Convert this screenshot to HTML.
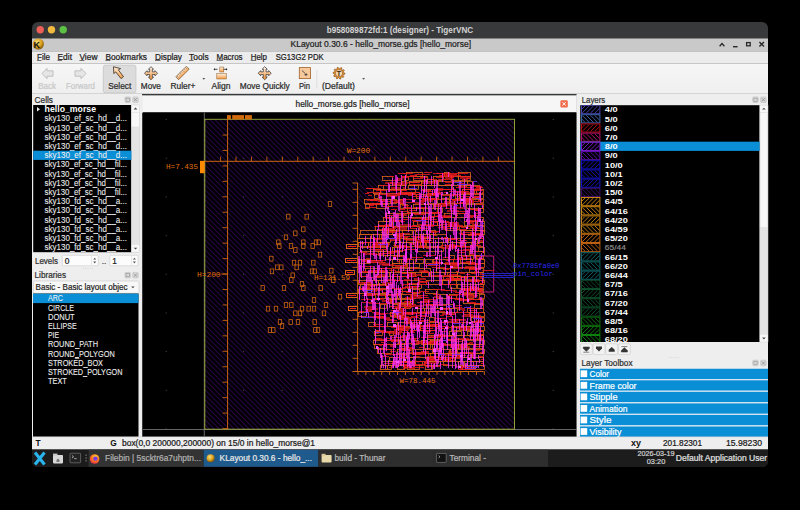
<!DOCTYPE html>
<html><head><meta charset="utf-8"><style>
html,body{margin:0;padding:0;background:#000;width:800px;height:510px;overflow:hidden}
svg{display:block}
text{white-space:pre}
</style></head><body>
<svg width="800" height="510" viewBox="0 0 800 510" shape-rendering="auto">
<rect x="0.00" y="0.00" width="800.00" height="510.00" fill="#000" />
<rect x="32" y="22" width="736" height="445" rx="6" ry="6" fill="#38393b"/>
<text x="400.00" y="32.60" font-family="Liberation Sans" font-size="8.6" font-weight="700" fill="#d2d2d2" text-anchor="middle" textLength="146.50" lengthAdjust="spacingAndGlyphs" >b958089872fd:1 (designer) - TigerVNC</text>
<circle cx="40.2" cy="29.7" r="3.7" fill="#ee5f57"/>
<circle cx="51.5" cy="29.7" r="3.7" fill="#f3b93f"/>
<circle cx="63.2" cy="29.7" r="3.7" fill="#5cc244"/>
<rect x="32.00" y="38.50" width="736.00" height="12.80" fill="#c9c9c9" />
<text x="290.50" y="46.80" font-family="Liberation Sans" font-size="8.3" font-weight="400" fill="#1e1e1e" text-anchor="start" textLength="180.50" lengthAdjust="spacingAndGlyphs"  stroke="#1e1e1e" stroke-width="0.22">KLayout 0.30.6 - hello_morse.gds [hello_morse]</text>
<defs><radialGradient id="kg" cx="0.4" cy="0.35" r="0.7"><stop offset="0" stop-color="#f8e27a"/><stop offset="0.6" stop-color="#d79a1a"/><stop offset="1" stop-color="#6b4a06"/></radialGradient></defs>
<circle cx="38.3" cy="44" r="5.6" fill="url(#kg)"/>
<text x="33.60" y="47.60" font-family="Liberation Sans" font-size="9" font-weight="700" fill="#111" text-anchor="start" >K</text>
<path d="M719.6 46.3 L722 43.6 L724.4 46.3" stroke="#2a2a2a" stroke-width="1.3" fill="none"/>
<rect x="733.00" y="46.00" width="4.60" height="1.40" fill="#2a2a2a" />
<rect x="746.6" y="42.6" width="3.6" height="3.2" stroke="#2a2a2a" stroke-width="1.3" fill="none"/>
<path d="M759.4 42 L764 46.6 M764 42 L759.4 46.6" stroke="#2a2a2a" stroke-width="1.4"/>
<rect x="32.00" y="51.30" width="736.00" height="12.20" fill="#ececec" />
<rect x="32.00" y="63.20" width="736.00" height="0.60" fill="#d6d6d6" />
<text x="37.00" y="59.80" font-family="Liberation Sans" font-size="8.3" font-weight="400" fill="#202020" text-anchor="start" textLength="13.00" lengthAdjust="spacingAndGlyphs"  stroke="#202020" stroke-width="0.22">File</text>
<rect x="37.00" y="60.20" width="4.50" height="0.70" fill="#404040" />
<text x="57.50" y="59.80" font-family="Liberation Sans" font-size="8.3" font-weight="400" fill="#202020" text-anchor="start" textLength="14.50" lengthAdjust="spacingAndGlyphs"  stroke="#202020" stroke-width="0.22">Edit</text>
<rect x="57.50" y="60.20" width="4.50" height="0.70" fill="#404040" />
<text x="79.40" y="59.80" font-family="Liberation Sans" font-size="8.3" font-weight="400" fill="#202020" text-anchor="start" textLength="18.10" lengthAdjust="spacingAndGlyphs"  stroke="#202020" stroke-width="0.22">View</text>
<rect x="79.40" y="60.20" width="5.00" height="0.70" fill="#404040" />
<text x="105.40" y="59.80" font-family="Liberation Sans" font-size="8.3" font-weight="400" fill="#202020" text-anchor="start" textLength="41.60" lengthAdjust="spacingAndGlyphs"  stroke="#202020" stroke-width="0.22">Bookmarks</text>
<rect x="105.40" y="60.20" width="5.00" height="0.70" fill="#404040" />
<text x="155.00" y="59.80" font-family="Liberation Sans" font-size="8.3" font-weight="400" fill="#202020" text-anchor="start" textLength="27.00" lengthAdjust="spacingAndGlyphs"  stroke="#202020" stroke-width="0.22">Display</text>
<rect x="155.00" y="60.20" width="5.50" height="0.70" fill="#404040" />
<text x="189.00" y="59.80" font-family="Liberation Sans" font-size="8.3" font-weight="400" fill="#202020" text-anchor="start" textLength="19.70" lengthAdjust="spacingAndGlyphs"  stroke="#202020" stroke-width="0.22">Tools</text>
<rect x="189.00" y="60.20" width="4.50" height="0.70" fill="#404040" />
<text x="216.50" y="59.80" font-family="Liberation Sans" font-size="8.3" font-weight="400" fill="#202020" text-anchor="start" textLength="26.10" lengthAdjust="spacingAndGlyphs"  stroke="#202020" stroke-width="0.22">Macros</text>
<rect x="216.50" y="60.20" width="6.50" height="0.70" fill="#404040" />
<text x="250.70" y="59.80" font-family="Liberation Sans" font-size="8.3" font-weight="400" fill="#202020" text-anchor="start" textLength="16.30" lengthAdjust="spacingAndGlyphs"  stroke="#202020" stroke-width="0.22">Help</text>
<rect x="250.70" y="60.20" width="5.50" height="0.70" fill="#404040" />
<text x="275.70" y="59.80" font-family="Liberation Sans" font-size="8.3" font-weight="400" fill="#202020" text-anchor="start" textLength="48.00" lengthAdjust="spacingAndGlyphs"  stroke="#202020" stroke-width="0.22">SG13G2 PDK</text>
<defs><linearGradient id="tbg" x1="0" y1="0" x2="0" y2="1"><stop offset="0" stop-color="#f6f6f6"/><stop offset="1" stop-color="#efefef"/></linearGradient></defs>
<rect x="32.00" y="63.80" width="736.00" height="29.60" fill="url(#tbg)" />
<rect x="32.00" y="93.00" width="736.00" height="0.80" fill="#e2e2e2" />
<rect x="103.3" y="65.2" width="32.6" height="27.6" rx="2" fill="#dcdcdc" stroke="#c4c4c4" stroke-width="0.8"/>
<text x="38.20" y="89.40" font-family="Liberation Sans" font-size="8.3" font-weight="400" fill="#c8c8c8" text-anchor="start" textLength="17.80" lengthAdjust="spacingAndGlyphs"  stroke="#c8c8c8" stroke-width="0.22">Back</text>
<text x="66.00" y="89.40" font-family="Liberation Sans" font-size="8.3" font-weight="400" fill="#c8c8c8" text-anchor="start" textLength="29.00" lengthAdjust="spacingAndGlyphs"  stroke="#c8c8c8" stroke-width="0.22">Forward</text>
<text x="108.20" y="89.40" font-family="Liberation Sans" font-size="8.3" font-weight="400" fill="#2a2a2a" text-anchor="start" textLength="23.00" lengthAdjust="spacingAndGlyphs"  stroke="#2a2a2a" stroke-width="0.22">Select</text>
<text x="140.80" y="89.40" font-family="Liberation Sans" font-size="8.3" font-weight="400" fill="#2a2a2a" text-anchor="start" textLength="20.10" lengthAdjust="spacingAndGlyphs"  stroke="#2a2a2a" stroke-width="0.22">Move</text>
<text x="170.40" y="89.40" font-family="Liberation Sans" font-size="8.3" font-weight="400" fill="#2a2a2a" text-anchor="start" textLength="25.00" lengthAdjust="spacingAndGlyphs"  stroke="#2a2a2a" stroke-width="0.22">Ruler+</text>
<text x="211.50" y="89.40" font-family="Liberation Sans" font-size="8.3" font-weight="400" fill="#2a2a2a" text-anchor="start" textLength="18.90" lengthAdjust="spacingAndGlyphs"  stroke="#2a2a2a" stroke-width="0.22">Align</text>
<text x="239.80" y="89.40" font-family="Liberation Sans" font-size="8.3" font-weight="400" fill="#2a2a2a" text-anchor="start" textLength="49.90" lengthAdjust="spacingAndGlyphs"  stroke="#2a2a2a" stroke-width="0.22">Move Quickly</text>
<text x="299.00" y="89.40" font-family="Liberation Sans" font-size="8.3" font-weight="400" fill="#2a2a2a" text-anchor="start" textLength="11.00" lengthAdjust="spacingAndGlyphs"  stroke="#2a2a2a" stroke-width="0.22">Pin</text>
<text x="322.00" y="89.40" font-family="Liberation Sans" font-size="8.3" font-weight="400" fill="#2a2a2a" text-anchor="start" textLength="33.00" lengthAdjust="spacingAndGlyphs"  stroke="#2a2a2a" stroke-width="0.22">(Default)</text>
<rect x="316.50" y="70.00" width="0.70" height="18.00" fill="#d6d6d6" />
<path d="M202.3 78 L205.3 78 L203.8 79.8 Z" fill="#555"/>
<path d="M362.1 78 L365.1 78 L363.6 79.8 Z" fill="#555"/>
<path d="M42 73.5 L47 68.3 L47 70.8 L53 70.8 L53 76.2 L47 76.2 L47 78.7 Z" fill="#e6e6e6" stroke="#b4b4b4" stroke-width="0.8"/>
<path d="M86 73.5 L81 68.3 L81 70.8 L75 70.8 L75 76.2 L81 76.2 L81 78.7 Z" fill="#e6e6e6" stroke="#b4b4b4" stroke-width="0.8"/>
<path d="M113.5 66.8 L113.8 73.6 L115.8 71.9 L121 78.6 L123.5 76.6 L118.3 69.9 L120.6 68.6 Z" fill="url(#og)" stroke="#3a2a1a" stroke-width="0.8" stroke-linejoin="round"/>
<defs><linearGradient id="mg151" x1="0" y1="0" x2="0" y2="1"><stop offset="0" stop-color="#fff6ee"/><stop offset="1" stop-color="#f08a2a"/></linearGradient></defs>
<path d="M151.00 66.70 L153.60 69.20 L152.35 69.20 L152.35 71.85 L155.00 71.85 L155.00 70.60 L157.50 73.20 L155.00 75.80 L155.00 74.55 L152.35 74.55 L152.35 77.20 L153.60 77.20 L151.00 79.70 L148.40 77.20 L149.65 77.20 L149.65 74.55 L147.00 74.55 L147.00 75.80 L144.50 73.20 L147.00 70.60 L147.00 71.85 L149.65 71.85 L149.65 69.20 L148.40 69.20 Z" fill="url(#mg151)" stroke="#3a3a3a" stroke-width="0.75" stroke-linejoin="round"/>
<defs><linearGradient id="mg264" x1="0" y1="0" x2="0" y2="1"><stop offset="0" stop-color="#fff6ee"/><stop offset="1" stop-color="#f08a2a"/></linearGradient></defs>
<path d="M264.70 66.70 L267.30 69.20 L266.05 69.20 L266.05 71.85 L268.70 71.85 L268.70 70.60 L271.20 73.20 L268.70 75.80 L268.70 74.55 L266.05 74.55 L266.05 77.20 L267.30 77.20 L264.70 79.70 L262.10 77.20 L263.35 77.20 L263.35 74.55 L260.70 74.55 L260.70 75.80 L258.20 73.20 L260.70 70.60 L260.70 71.85 L263.35 71.85 L263.35 69.20 L262.10 69.20 Z" fill="url(#mg264)" stroke="#3a3a3a" stroke-width="0.75" stroke-linejoin="round"/>
<defs><linearGradient id="og" x1="0" y1="0" x2="0" y2="1"><stop offset="0" stop-color="#fff0e0"/><stop offset="1" stop-color="#f09a40"/></linearGradient></defs>
<g transform="translate(182.5 73) rotate(-45)"><rect x="-7.5" y="-2" width="15" height="4" fill="url(#og)" stroke="#7a5a3a" stroke-width="0.7"/><line x1="-6" y1="-2" x2="-6" y2="0.3" stroke="#6a4a2a" stroke-width="0.5"/><line x1="-4" y1="-2" x2="-4" y2="-0.5" stroke="#6a4a2a" stroke-width="0.5"/><line x1="-2" y1="-2" x2="-2" y2="0.3" stroke="#6a4a2a" stroke-width="0.5"/><line x1="0" y1="-2" x2="0" y2="-0.5" stroke="#6a4a2a" stroke-width="0.5"/><line x1="2" y1="-2" x2="2" y2="0.3" stroke="#6a4a2a" stroke-width="0.5"/><line x1="4" y1="-2" x2="4" y2="-0.5" stroke="#6a4a2a" stroke-width="0.5"/><line x1="6" y1="-2" x2="6" y2="0.3" stroke="#6a4a2a" stroke-width="0.5"/></g>
<rect x="219.8" y="67" width="4" height="5" fill="url(#og)" stroke="#8a5a2a" stroke-width="0.5"/>
<rect x="216.8" y="73.5" width="9.5" height="5.5" fill="url(#og)" stroke="#8a5a2a" stroke-width="0.5"/>
<path d="M214 69.3 L217.5 69.3 M223.5 69.3 L227 69.3" stroke="#222" stroke-width="0.8"/>
<path d="M213.5 69.3 L215 68.2 L215 70.4 Z M227.5 69.3 L226 68.2 L226 70.4 Z" fill="#222"/>
<rect x="299.3" y="67.6" width="11.2" height="11" fill="#f7c89a" stroke="#a0602a" stroke-width="0.8"/>
<path d="M302 70.5 L305 73.3 M304.5 74.6 L307.5 74.6 M306 73.1 L306 76.1" stroke="#333" stroke-width="0.8"/>
<path d="M345.00 73.20 L344.93 74.14 L343.37 74.62 L343.10 75.29 L343.85 76.73 L343.24 77.44 L341.70 76.92 L341.09 77.30 L340.85 78.91 L339.94 79.13 L339.00 77.80 L338.28 77.74 L337.15 78.91 L336.28 78.55 L336.30 76.92 L335.75 76.45 L334.15 76.73 L333.65 75.92 L334.63 74.62 L334.46 73.92 L333.00 73.20 L333.07 72.26 L334.63 71.78 L334.90 71.11 L334.15 69.67 L334.76 68.96 L336.30 69.48 L336.91 69.10 L337.15 67.49 L338.06 67.27 L339.00 68.60 L339.72 68.66 L340.85 67.49 L341.72 67.85 L341.70 69.48 L342.25 69.95 L343.85 69.67 L344.35 70.48 L343.37 71.78 L343.54 72.48 Z" fill="#e8902a" stroke="#6a3a10" stroke-width="0.5"/>
<circle cx="339" cy="73.2" r="3.6" fill="#f7d9b0" stroke="#6a3a10" stroke-width="0.5"/>
<text x="339.00" y="75.80" font-family="Liberation Sans" font-size="7" font-weight="700" fill="#3a2000" text-anchor="middle" >T</text>
<rect x="142.00" y="95.60" width="434.80" height="16.80" fill="#f6f6f6" stroke="#e0e0e0" stroke-width="0.5"/>
<text x="352.50" y="106.60" font-family="Liberation Sans" font-size="8.3" font-weight="400" fill="#252525" text-anchor="middle" textLength="114.00" lengthAdjust="spacingAndGlyphs"  stroke="#252525" stroke-width="0.22">hello_morse.gds [hello_morse]</text>
<rect x="560.4" y="100.2" width="7.4" height="7.2" rx="1.2" fill="#f06a4a"/>
<path d="M562.4 102.2 L565.8 105.5 M565.8 102.2 L562.4 105.5" stroke="#fff" stroke-width="1"/>
<rect x="143.00" y="112.30" width="433.60" height="324.30" fill="#000" />
<defs><clipPath id="cclip"><rect x="143" y="112.3" width="433.6" height="324.3"/></clipPath><filter id="hsoft" x="0" y="0" width="100%" height="100%"><feGaussianBlur stdDeviation="0.45"/></filter><filter id="soft" x="-5%" y="-5%" width="110%" height="110%"><feGaussianBlur stdDeviation="0.38"/></filter><pattern id="hatch" width="5" height="5" patternUnits="userSpaceOnUse"><path d="M0 0 L5 5 M-2.5 2.5 L2.5 7.5 M2.5 -2.5 L7.5 2.5" stroke="#3c0a6c" stroke-width="0.9"/></pattern></defs>
<g clip-path="url(#cclip)">
<defs><clipPath id="fclip"><rect x="204.8" y="119.3" width="310" height="309.9"/></clipPath></defs>
<path clip-path="url(#fclip)" d="M204 -231.20 L515 79.80 M204 -226.20 L515 84.80 M204 -221.20 L515 89.80 M204 -216.20 L515 94.80 M204 -211.20 L515 99.80 M204 -206.20 L515 104.80 M204 -201.20 L515 109.80 M204 -196.20 L515 114.80 M204 -191.20 L515 119.80 M204 -186.20 L515 124.80 M204 -181.20 L515 129.80 M204 -176.20 L515 134.80 M204 -171.20 L515 139.80 M204 -166.20 L515 144.80 M204 -161.20 L515 149.80 M204 -156.20 L515 154.80 M204 -151.20 L515 159.80 M204 -146.20 L515 164.80 M204 -141.20 L515 169.80 M204 -136.20 L515 174.80 M204 -131.20 L515 179.80 M204 -126.20 L515 184.80 M204 -121.20 L515 189.80 M204 -116.20 L515 194.80 M204 -111.20 L515 199.80 M204 -106.20 L515 204.80 M204 -101.20 L515 209.80 M204 -96.20 L515 214.80 M204 -91.20 L515 219.80 M204 -86.20 L515 224.80 M204 -81.20 L515 229.80 M204 -76.20 L515 234.80 M204 -71.20 L515 239.80 M204 -66.20 L515 244.80 M204 -61.20 L515 249.80 M204 -56.20 L515 254.80 M204 -51.20 L515 259.80 M204 -46.20 L515 264.80 M204 -41.20 L515 269.80 M204 -36.20 L515 274.80 M204 -31.20 L515 279.80 M204 -26.20 L515 284.80 M204 -21.20 L515 289.80 M204 -16.20 L515 294.80 M204 -11.20 L515 299.80 M204 -6.20 L515 304.80 M204 -1.20 L515 309.80 M204 3.80 L515 314.80 M204 8.80 L515 319.80 M204 13.80 L515 324.80 M204 18.80 L515 329.80 M204 23.80 L515 334.80 M204 28.80 L515 339.80 M204 33.80 L515 344.80 M204 38.80 L515 349.80 M204 43.80 L515 354.80 M204 48.80 L515 359.80 M204 53.80 L515 364.80 M204 58.80 L515 369.80 M204 63.80 L515 374.80 M204 68.80 L515 379.80 M204 73.80 L515 384.80 M204 78.80 L515 389.80 M204 83.80 L515 394.80 M204 88.80 L515 399.80 M204 93.80 L515 404.80 M204 98.80 L515 409.80 M204 103.80 L515 414.80 M204 108.80 L515 419.80 M204 113.80 L515 424.80 M204 118.80 L515 429.80 M204 123.80 L515 434.80 M204 128.80 L515 439.80 M204 133.80 L515 444.80 M204 138.80 L515 449.80 M204 143.80 L515 454.80 M204 148.80 L515 459.80 M204 153.80 L515 464.80 M204 158.80 L515 469.80 M204 163.80 L515 474.80 M204 168.80 L515 479.80 M204 173.80 L515 484.80 M204 178.80 L515 489.80 M204 183.80 L515 494.80 M204 188.80 L515 499.80 M204 193.80 L515 504.80 M204 198.80 L515 509.80 M204 203.80 L515 514.80 M204 208.80 L515 519.80 M204 213.80 L515 524.80 M204 218.80 L515 529.80 M204 223.80 L515 534.80 M204 228.80 L515 539.80 M204 233.80 L515 544.80 M204 238.80 L515 549.80 M204 243.80 L515 554.80 M204 248.80 L515 559.80 M204 253.80 L515 564.80 M204 258.80 L515 569.80 M204 263.80 L515 574.80 M204 268.80 L515 579.80 M204 273.80 L515 584.80 M204 278.80 L515 589.80 M204 283.80 L515 594.80 M204 288.80 L515 599.80 M204 293.80 L515 604.80 M204 298.80 L515 609.80 M204 303.80 L515 614.80 M204 308.80 L515 619.80 M204 313.80 L515 624.80 M204 318.80 L515 629.80 M204 323.80 L515 634.80 M204 328.80 L515 639.80 M204 333.80 L515 644.80 M204 338.80 L515 649.80 M204 343.80 L515 654.80 M204 348.80 L515 659.80 M204 353.80 L515 664.80 M204 358.80 L515 669.80 M204 363.80 L515 674.80 M204 368.80 L515 679.80 M204 373.80 L515 684.80 M204 378.80 L515 689.80 M204 383.80 L515 694.80 M204 388.80 L515 699.80 M204 393.80 L515 704.80 M204 398.80 L515 709.80 M204 403.80 L515 714.80 M204 408.80 L515 719.80 M204 413.80 L515 724.80 M204 418.80 L515 729.80 M204 423.80 L515 734.80 M204 428.80 L515 739.80 M204 433.80 L515 744.80 M204 438.80 L515 749.80 M204 443.80 L515 754.80 M204 448.80 L515 759.80 M204 453.80 L515 764.80 M204 458.80 L515 769.80 M204 463.80 L515 774.80" stroke="#2a0548" stroke-width="1.12" fill="none"/>
<rect x="165.70" y="119.10" width="1.00" height="1.00" fill="#505050" />
<rect x="165.70" y="157.77" width="1.00" height="1.00" fill="#505050" />
<rect x="165.70" y="196.44" width="1.00" height="1.00" fill="#505050" />
<rect x="165.70" y="235.11" width="1.00" height="1.00" fill="#505050" />
<rect x="165.70" y="273.78" width="1.00" height="1.00" fill="#505050" />
<rect x="165.70" y="312.45" width="1.00" height="1.00" fill="#505050" />
<rect x="165.70" y="351.12" width="1.00" height="1.00" fill="#505050" />
<rect x="165.70" y="389.79" width="1.00" height="1.00" fill="#505050" />
<rect x="165.70" y="428.46" width="1.00" height="1.00" fill="#505050" />
<rect x="204.40" y="119.10" width="1.00" height="1.00" fill="#505050" />
<rect x="204.40" y="157.77" width="1.00" height="1.00" fill="#505050" />
<rect x="204.40" y="196.44" width="1.00" height="1.00" fill="#505050" />
<rect x="204.40" y="235.11" width="1.00" height="1.00" fill="#505050" />
<rect x="204.40" y="273.78" width="1.00" height="1.00" fill="#505050" />
<rect x="204.40" y="312.45" width="1.00" height="1.00" fill="#505050" />
<rect x="204.40" y="351.12" width="1.00" height="1.00" fill="#505050" />
<rect x="204.40" y="389.79" width="1.00" height="1.00" fill="#505050" />
<rect x="204.40" y="428.46" width="1.00" height="1.00" fill="#505050" />
<rect x="243.10" y="119.10" width="1.00" height="1.00" fill="#505050" />
<rect x="243.10" y="157.77" width="1.00" height="1.00" fill="#505050" />
<rect x="243.10" y="196.44" width="1.00" height="1.00" fill="#505050" />
<rect x="243.10" y="235.11" width="1.00" height="1.00" fill="#505050" />
<rect x="243.10" y="273.78" width="1.00" height="1.00" fill="#505050" />
<rect x="243.10" y="312.45" width="1.00" height="1.00" fill="#505050" />
<rect x="243.10" y="351.12" width="1.00" height="1.00" fill="#505050" />
<rect x="243.10" y="389.79" width="1.00" height="1.00" fill="#505050" />
<rect x="243.10" y="428.46" width="1.00" height="1.00" fill="#505050" />
<rect x="281.80" y="119.10" width="1.00" height="1.00" fill="#505050" />
<rect x="281.80" y="157.77" width="1.00" height="1.00" fill="#505050" />
<rect x="281.80" y="196.44" width="1.00" height="1.00" fill="#505050" />
<rect x="281.80" y="235.11" width="1.00" height="1.00" fill="#505050" />
<rect x="281.80" y="273.78" width="1.00" height="1.00" fill="#505050" />
<rect x="281.80" y="312.45" width="1.00" height="1.00" fill="#505050" />
<rect x="281.80" y="351.12" width="1.00" height="1.00" fill="#505050" />
<rect x="281.80" y="389.79" width="1.00" height="1.00" fill="#505050" />
<rect x="281.80" y="428.46" width="1.00" height="1.00" fill="#505050" />
<rect x="320.50" y="119.10" width="1.00" height="1.00" fill="#505050" />
<rect x="320.50" y="157.77" width="1.00" height="1.00" fill="#505050" />
<rect x="320.50" y="196.44" width="1.00" height="1.00" fill="#505050" />
<rect x="320.50" y="235.11" width="1.00" height="1.00" fill="#505050" />
<rect x="320.50" y="273.78" width="1.00" height="1.00" fill="#505050" />
<rect x="320.50" y="312.45" width="1.00" height="1.00" fill="#505050" />
<rect x="320.50" y="351.12" width="1.00" height="1.00" fill="#505050" />
<rect x="320.50" y="389.79" width="1.00" height="1.00" fill="#505050" />
<rect x="320.50" y="428.46" width="1.00" height="1.00" fill="#505050" />
<rect x="359.20" y="119.10" width="1.00" height="1.00" fill="#505050" />
<rect x="359.20" y="157.77" width="1.00" height="1.00" fill="#505050" />
<rect x="359.20" y="196.44" width="1.00" height="1.00" fill="#505050" />
<rect x="359.20" y="235.11" width="1.00" height="1.00" fill="#505050" />
<rect x="359.20" y="273.78" width="1.00" height="1.00" fill="#505050" />
<rect x="359.20" y="312.45" width="1.00" height="1.00" fill="#505050" />
<rect x="359.20" y="351.12" width="1.00" height="1.00" fill="#505050" />
<rect x="359.20" y="389.79" width="1.00" height="1.00" fill="#505050" />
<rect x="359.20" y="428.46" width="1.00" height="1.00" fill="#505050" />
<rect x="397.90" y="119.10" width="1.00" height="1.00" fill="#505050" />
<rect x="397.90" y="157.77" width="1.00" height="1.00" fill="#505050" />
<rect x="397.90" y="196.44" width="1.00" height="1.00" fill="#505050" />
<rect x="397.90" y="235.11" width="1.00" height="1.00" fill="#505050" />
<rect x="397.90" y="273.78" width="1.00" height="1.00" fill="#505050" />
<rect x="397.90" y="312.45" width="1.00" height="1.00" fill="#505050" />
<rect x="397.90" y="351.12" width="1.00" height="1.00" fill="#505050" />
<rect x="397.90" y="389.79" width="1.00" height="1.00" fill="#505050" />
<rect x="397.90" y="428.46" width="1.00" height="1.00" fill="#505050" />
<rect x="436.60" y="119.10" width="1.00" height="1.00" fill="#505050" />
<rect x="436.60" y="157.77" width="1.00" height="1.00" fill="#505050" />
<rect x="436.60" y="196.44" width="1.00" height="1.00" fill="#505050" />
<rect x="436.60" y="235.11" width="1.00" height="1.00" fill="#505050" />
<rect x="436.60" y="273.78" width="1.00" height="1.00" fill="#505050" />
<rect x="436.60" y="312.45" width="1.00" height="1.00" fill="#505050" />
<rect x="436.60" y="351.12" width="1.00" height="1.00" fill="#505050" />
<rect x="436.60" y="389.79" width="1.00" height="1.00" fill="#505050" />
<rect x="436.60" y="428.46" width="1.00" height="1.00" fill="#505050" />
<rect x="475.30" y="119.10" width="1.00" height="1.00" fill="#505050" />
<rect x="475.30" y="157.77" width="1.00" height="1.00" fill="#505050" />
<rect x="475.30" y="196.44" width="1.00" height="1.00" fill="#505050" />
<rect x="475.30" y="235.11" width="1.00" height="1.00" fill="#505050" />
<rect x="475.30" y="273.78" width="1.00" height="1.00" fill="#505050" />
<rect x="475.30" y="312.45" width="1.00" height="1.00" fill="#505050" />
<rect x="475.30" y="351.12" width="1.00" height="1.00" fill="#505050" />
<rect x="475.30" y="389.79" width="1.00" height="1.00" fill="#505050" />
<rect x="475.30" y="428.46" width="1.00" height="1.00" fill="#505050" />
<rect x="514.00" y="119.10" width="1.00" height="1.00" fill="#505050" />
<rect x="514.00" y="157.77" width="1.00" height="1.00" fill="#505050" />
<rect x="514.00" y="196.44" width="1.00" height="1.00" fill="#505050" />
<rect x="514.00" y="235.11" width="1.00" height="1.00" fill="#505050" />
<rect x="514.00" y="273.78" width="1.00" height="1.00" fill="#505050" />
<rect x="514.00" y="312.45" width="1.00" height="1.00" fill="#505050" />
<rect x="514.00" y="351.12" width="1.00" height="1.00" fill="#505050" />
<rect x="514.00" y="389.79" width="1.00" height="1.00" fill="#505050" />
<rect x="514.00" y="428.46" width="1.00" height="1.00" fill="#505050" />
<rect x="552.70" y="119.10" width="1.00" height="1.00" fill="#505050" />
<rect x="552.70" y="157.77" width="1.00" height="1.00" fill="#505050" />
<rect x="552.70" y="196.44" width="1.00" height="1.00" fill="#505050" />
<rect x="552.70" y="235.11" width="1.00" height="1.00" fill="#505050" />
<rect x="552.70" y="273.78" width="1.00" height="1.00" fill="#505050" />
<rect x="552.70" y="312.45" width="1.00" height="1.00" fill="#505050" />
<rect x="552.70" y="351.12" width="1.00" height="1.00" fill="#505050" />
<rect x="552.70" y="389.79" width="1.00" height="1.00" fill="#505050" />
<rect x="552.70" y="428.46" width="1.00" height="1.00" fill="#505050" />
<line x1="142.6" y1="429.5" x2="576.6" y2="429.5" stroke="#707070" stroke-width="0.9" />
<line x1="204.3" y1="112.4" x2="204.3" y2="436.6" stroke="#707070" stroke-width="0.9" />
<rect x="204.8" y="119.3" width="309.7" height="309.9" fill="none" stroke="#94a03a" stroke-width="1"/>
<rect x="227.00" y="115.10" width="3.90" height="4.30" fill="#d06a0c" />
<rect x="232.20" y="115.10" width="11.80" height="4.30" fill="#d06a0c" />
<rect x="245.00" y="115.10" width="6.90" height="4.30" fill="#d06a0c" />
<line x1="200" y1="161.3" x2="514.6" y2="161.3" stroke="#cc660e" stroke-width="1" />
<line x1="220.6" y1="156.6" x2="220.6" y2="161.3" stroke="#cc660e" stroke-width="0.9" />
<line x1="236.03" y1="156.6" x2="236.03" y2="161.3" stroke="#cc660e" stroke-width="0.9" />
<line x1="251.45999999999998" y1="156.6" x2="251.45999999999998" y2="161.3" stroke="#cc660e" stroke-width="0.9" />
<line x1="266.89" y1="156.6" x2="266.89" y2="161.3" stroke="#cc660e" stroke-width="0.9" />
<line x1="282.32" y1="156.6" x2="282.32" y2="161.3" stroke="#cc660e" stroke-width="0.9" />
<line x1="297.75" y1="156.6" x2="297.75" y2="161.3" stroke="#cc660e" stroke-width="0.9" />
<line x1="313.18" y1="156.6" x2="313.18" y2="161.3" stroke="#cc660e" stroke-width="0.9" />
<line x1="328.61" y1="156.6" x2="328.61" y2="161.3" stroke="#cc660e" stroke-width="0.9" />
<line x1="344.03999999999996" y1="156.6" x2="344.03999999999996" y2="161.3" stroke="#cc660e" stroke-width="0.9" />
<line x1="359.47" y1="156.6" x2="359.47" y2="161.3" stroke="#cc660e" stroke-width="0.9" />
<line x1="374.9" y1="156.6" x2="374.9" y2="161.3" stroke="#cc660e" stroke-width="0.9" />
<line x1="390.33" y1="156.6" x2="390.33" y2="161.3" stroke="#cc660e" stroke-width="0.9" />
<line x1="405.76" y1="156.6" x2="405.76" y2="161.3" stroke="#cc660e" stroke-width="0.9" />
<line x1="421.19" y1="156.6" x2="421.19" y2="161.3" stroke="#cc660e" stroke-width="0.9" />
<line x1="436.62" y1="156.6" x2="436.62" y2="161.3" stroke="#cc660e" stroke-width="0.9" />
<line x1="452.04999999999995" y1="156.6" x2="452.04999999999995" y2="161.3" stroke="#cc660e" stroke-width="0.9" />
<line x1="467.48" y1="156.6" x2="467.48" y2="161.3" stroke="#cc660e" stroke-width="0.9" />
<line x1="482.90999999999997" y1="156.6" x2="482.90999999999997" y2="161.3" stroke="#cc660e" stroke-width="0.9" />
<line x1="498.34000000000003" y1="156.6" x2="498.34000000000003" y2="161.3" stroke="#cc660e" stroke-width="0.9" />
<line x1="227.6" y1="119.3" x2="227.6" y2="429.2" stroke="#cc660e" stroke-width="1" />
<line x1="222.6" y1="135.0" x2="227.6" y2="135.0" stroke="#cc660e" stroke-width="0.9" />
<line x1="222.6" y1="150.45" x2="227.6" y2="150.45" stroke="#cc660e" stroke-width="0.9" />
<line x1="222.6" y1="165.9" x2="227.6" y2="165.9" stroke="#cc660e" stroke-width="0.9" />
<line x1="222.6" y1="181.35" x2="227.6" y2="181.35" stroke="#cc660e" stroke-width="0.9" />
<line x1="222.6" y1="196.8" x2="227.6" y2="196.8" stroke="#cc660e" stroke-width="0.9" />
<line x1="222.6" y1="212.25" x2="227.6" y2="212.25" stroke="#cc660e" stroke-width="0.9" />
<line x1="222.6" y1="227.7" x2="227.6" y2="227.7" stroke="#cc660e" stroke-width="0.9" />
<line x1="222.6" y1="243.14999999999998" x2="227.6" y2="243.14999999999998" stroke="#cc660e" stroke-width="0.9" />
<line x1="222.6" y1="258.6" x2="227.6" y2="258.6" stroke="#cc660e" stroke-width="0.9" />
<line x1="222.6" y1="274.04999999999995" x2="227.6" y2="274.04999999999995" stroke="#cc660e" stroke-width="0.9" />
<line x1="222.6" y1="289.5" x2="227.6" y2="289.5" stroke="#cc660e" stroke-width="0.9" />
<line x1="222.6" y1="304.95" x2="227.6" y2="304.95" stroke="#cc660e" stroke-width="0.9" />
<line x1="222.6" y1="320.4" x2="227.6" y2="320.4" stroke="#cc660e" stroke-width="0.9" />
<line x1="222.6" y1="335.85" x2="227.6" y2="335.85" stroke="#cc660e" stroke-width="0.9" />
<line x1="222.6" y1="351.29999999999995" x2="227.6" y2="351.29999999999995" stroke="#cc660e" stroke-width="0.9" />
<line x1="222.6" y1="366.75" x2="227.6" y2="366.75" stroke="#cc660e" stroke-width="0.9" />
<line x1="222.6" y1="382.2" x2="227.6" y2="382.2" stroke="#cc660e" stroke-width="0.9" />
<line x1="222.6" y1="397.65" x2="227.6" y2="397.65" stroke="#cc660e" stroke-width="0.9" />
<line x1="222.6" y1="413.09999999999997" x2="227.6" y2="413.09999999999997" stroke="#cc660e" stroke-width="0.9" />
<line x1="222.6" y1="428.55" x2="227.6" y2="428.55" stroke="#cc660e" stroke-width="0.9" />
<rect x="200.00" y="161.00" width="4.60" height="12.20" fill="#ff8a00" />
<text x="166.00" y="168.80" font-family="Liberation Mono" font-size="8" font-weight="400" fill="#e0700a" text-anchor="start" textLength="32.00" lengthAdjust="spacingAndGlyphs" >H=7.435</text>
<text x="346.70" y="153.00" font-family="Liberation Mono" font-size="8" font-weight="400" fill="#e0700a" text-anchor="start" textLength="23.50" lengthAdjust="spacingAndGlyphs" >W=200</text>
<text x="197.00" y="277.00" font-family="Liberation Mono" font-size="8" font-weight="400" fill="#e0700a" text-anchor="start" textLength="23.60" lengthAdjust="spacingAndGlyphs" >H=200</text>
<line x1="220.8" y1="274" x2="227.6" y2="274" stroke="#cc660e" stroke-width="0.9" />
<rect x="328.30" y="201.60" width="3.4" height="4.8" fill="none" stroke="#cc660e" stroke-width="0.8"/>
<rect x="286.63" y="214.27" width="3.4" height="4.8" fill="none" stroke="#cc660e" stroke-width="0.8"/>
<rect x="304.97" y="214.27" width="3.4" height="4.8" fill="none" stroke="#cc660e" stroke-width="0.8"/>
<rect x="301.63" y="226.93" width="3.4" height="4.8" fill="none" stroke="#cc660e" stroke-width="0.8"/>
<rect x="293.63" y="230.93" width="3.4" height="4.8" fill="none" stroke="#cc660e" stroke-width="0.8"/>
<rect x="284.30" y="234.93" width="3.4" height="4.8" fill="none" stroke="#cc660e" stroke-width="0.8"/>
<rect x="276.63" y="239.93" width="3.4" height="4.8" fill="none" stroke="#cc660e" stroke-width="0.8"/>
<rect x="277.63" y="243.60" width="3.4" height="4.8" fill="none" stroke="#cc660e" stroke-width="0.8"/>
<rect x="289.30" y="243.60" width="3.4" height="4.8" fill="none" stroke="#cc660e" stroke-width="0.8"/>
<rect x="293.63" y="247.60" width="3.4" height="4.8" fill="none" stroke="#cc660e" stroke-width="0.8"/>
<rect x="301.63" y="239.93" width="3.4" height="4.8" fill="none" stroke="#cc660e" stroke-width="0.8"/>
<rect x="301.63" y="243.60" width="3.4" height="4.8" fill="none" stroke="#cc660e" stroke-width="0.8"/>
<rect x="310.97" y="243.60" width="3.4" height="4.8" fill="none" stroke="#cc660e" stroke-width="0.8"/>
<rect x="314.30" y="239.93" width="3.4" height="4.8" fill="none" stroke="#cc660e" stroke-width="0.8"/>
<rect x="316.97" y="239.93" width="3.4" height="4.8" fill="none" stroke="#cc660e" stroke-width="0.8"/>
<rect x="318.30" y="252.27" width="3.4" height="4.8" fill="none" stroke="#cc660e" stroke-width="0.8"/>
<rect x="269.63" y="256.27" width="3.4" height="4.8" fill="none" stroke="#cc660e" stroke-width="0.8"/>
<rect x="292.30" y="260.27" width="3.4" height="4.8" fill="none" stroke="#cc660e" stroke-width="0.8"/>
<rect x="298.30" y="260.27" width="3.4" height="4.8" fill="none" stroke="#cc660e" stroke-width="0.8"/>
<rect x="311.63" y="260.27" width="3.4" height="4.8" fill="none" stroke="#cc660e" stroke-width="0.8"/>
<rect x="294.97" y="264.93" width="3.4" height="4.8" fill="none" stroke="#cc660e" stroke-width="0.8"/>
<rect x="275.63" y="264.93" width="3.4" height="4.8" fill="none" stroke="#cc660e" stroke-width="0.8"/>
<rect x="279.63" y="264.93" width="3.4" height="4.8" fill="none" stroke="#cc660e" stroke-width="0.8"/>
<rect x="270.30" y="268.93" width="3.4" height="4.8" fill="none" stroke="#cc660e" stroke-width="0.8"/>
<rect x="310.30" y="268.93" width="3.4" height="4.8" fill="none" stroke="#cc660e" stroke-width="0.8"/>
<rect x="312.97" y="268.93" width="3.4" height="4.8" fill="none" stroke="#cc660e" stroke-width="0.8"/>
<rect x="329.63" y="268.27" width="3.4" height="4.8" fill="none" stroke="#cc660e" stroke-width="0.8"/>
<rect x="290.97" y="272.93" width="3.4" height="4.8" fill="none" stroke="#cc660e" stroke-width="0.8"/>
<rect x="331.63" y="277.60" width="3.4" height="4.8" fill="none" stroke="#cc660e" stroke-width="0.8"/>
<rect x="289.63" y="277.60" width="3.4" height="4.8" fill="none" stroke="#cc660e" stroke-width="0.8"/>
<rect x="300.30" y="281.60" width="3.4" height="4.8" fill="none" stroke="#cc660e" stroke-width="0.8"/>
<rect x="260.97" y="285.60" width="3.4" height="4.8" fill="none" stroke="#cc660e" stroke-width="0.8"/>
<rect x="282.30" y="285.60" width="3.4" height="4.8" fill="none" stroke="#cc660e" stroke-width="0.8"/>
<rect x="301.63" y="285.60" width="3.4" height="4.8" fill="none" stroke="#cc660e" stroke-width="0.8"/>
<rect x="318.97" y="285.60" width="3.4" height="4.8" fill="none" stroke="#cc660e" stroke-width="0.8"/>
<rect x="312.30" y="297.60" width="3.4" height="4.8" fill="none" stroke="#cc660e" stroke-width="0.8"/>
<rect x="338.30" y="294.27" width="3.4" height="4.8" fill="none" stroke="#cc660e" stroke-width="0.8"/>
<rect x="284.30" y="302.60" width="3.4" height="4.8" fill="none" stroke="#cc660e" stroke-width="0.8"/>
<rect x="289.63" y="302.60" width="3.4" height="4.8" fill="none" stroke="#cc660e" stroke-width="0.8"/>
<rect x="266.30" y="306.27" width="3.4" height="4.8" fill="none" stroke="#cc660e" stroke-width="0.8"/>
<rect x="274.30" y="306.27" width="3.4" height="4.8" fill="none" stroke="#cc660e" stroke-width="0.8"/>
<rect x="300.30" y="306.27" width="3.4" height="4.8" fill="none" stroke="#cc660e" stroke-width="0.8"/>
<rect x="306.97" y="306.27" width="3.4" height="4.8" fill="none" stroke="#cc660e" stroke-width="0.8"/>
<rect x="312.30" y="306.27" width="3.4" height="4.8" fill="none" stroke="#cc660e" stroke-width="0.8"/>
<rect x="324.30" y="302.60" width="3.4" height="4.8" fill="none" stroke="#cc660e" stroke-width="0.8"/>
<rect x="293.63" y="310.93" width="3.4" height="4.8" fill="none" stroke="#cc660e" stroke-width="0.8"/>
<rect x="298.30" y="310.93" width="3.4" height="4.8" fill="none" stroke="#cc660e" stroke-width="0.8"/>
<rect x="322.30" y="310.93" width="3.4" height="4.8" fill="none" stroke="#cc660e" stroke-width="0.8"/>
<rect x="278.30" y="319.60" width="3.4" height="4.8" fill="none" stroke="#cc660e" stroke-width="0.8"/>
<rect x="288.97" y="319.60" width="3.4" height="4.8" fill="none" stroke="#cc660e" stroke-width="0.8"/>
<rect x="296.30" y="319.60" width="3.4" height="4.8" fill="none" stroke="#cc660e" stroke-width="0.8"/>
<rect x="280.30" y="323.60" width="3.4" height="4.8" fill="none" stroke="#cc660e" stroke-width="0.8"/>
<rect x="312.97" y="319.60" width="3.4" height="4.8" fill="none" stroke="#cc660e" stroke-width="0.8"/>
<rect x="268.30" y="327.60" width="3.4" height="4.8" fill="none" stroke="#cc660e" stroke-width="0.8"/>
<rect x="271.63" y="327.60" width="3.4" height="4.8" fill="none" stroke="#cc660e" stroke-width="0.8"/>
<rect x="313.63" y="327.60" width="3.4" height="4.8" fill="none" stroke="#cc660e" stroke-width="0.8"/>
<rect x="316.30" y="327.60" width="3.4" height="4.8" fill="none" stroke="#cc660e" stroke-width="0.8"/>
<text x="314.00" y="279.60" font-family="Liberation Mono" font-size="8" font-weight="400" fill="#e0700a" text-anchor="start" textLength="36.00" lengthAdjust="spacingAndGlyphs" >H=121.59</text>
<g filter="url(#soft)"><rect x="406.5" y="172.5" width="16" height="4" fill="none" stroke="#dc6418" stroke-width="0.8"/>
<rect x="444.5" y="172.5" width="5" height="4" fill="none" stroke="#dc6418" stroke-width="0.8"/>
<rect x="458.5" y="172.5" width="12" height="4" fill="none" stroke="#dc6418" stroke-width="0.8"/>
<rect x="382.5" y="176.5" width="10" height="4" fill="none" stroke="#dc6418" stroke-width="0.8"/>
<rect x="404.5" y="176.5" width="4" height="4" fill="none" stroke="#dc6418" stroke-width="0.8"/>
<rect x="413.5" y="176.5" width="14" height="4" fill="none" stroke="#dc6418" stroke-width="0.8"/>
<rect x="433.5" y="176.5" width="10" height="4" fill="none" stroke="#dc6418" stroke-width="0.8"/>
<rect x="451.5" y="176.5" width="7" height="4" fill="none" stroke="#dc6418" stroke-width="0.8"/>
<rect x="458.5" y="176.5" width="12" height="4" fill="none" stroke="#dc6418" stroke-width="0.8"/>
<rect x="401.5" y="181.5" width="5" height="4" fill="none" stroke="#dc6418" stroke-width="0.8"/>
<rect x="409.5" y="181.5" width="12" height="4" fill="none" stroke="#dc6418" stroke-width="0.8"/>
<rect x="421.5" y="181.5" width="16" height="4" fill="none" stroke="#dc6418" stroke-width="0.8"/>
<rect x="438.5" y="181.5" width="14" height="4" fill="none" stroke="#dc6418" stroke-width="0.8"/>
<rect x="453.5" y="181.5" width="14" height="4" fill="none" stroke="#dc6418" stroke-width="0.8"/>
<rect x="467.5" y="181.5" width="5" height="4" fill="none" stroke="#dc6418" stroke-width="0.8"/>
<rect x="378.5" y="185.5" width="5" height="4" fill="none" stroke="#dc6418" stroke-width="0.8"/>
<rect x="389.5" y="185.5" width="16" height="4" fill="none" stroke="#dc6418" stroke-width="0.8"/>
<rect x="408.5" y="185.5" width="10" height="4" fill="none" stroke="#dc6418" stroke-width="0.8"/>
<rect x="421.5" y="185.5" width="5" height="4" fill="none" stroke="#dc6418" stroke-width="0.8"/>
<rect x="426.5" y="185.5" width="26" height="4" fill="none" stroke="#dc6418" stroke-width="0.8"/>
<rect x="464.5" y="185.5" width="7" height="4" fill="none" stroke="#dc6418" stroke-width="0.8"/>
<rect x="471.5" y="185.5" width="8" height="4" fill="none" stroke="#dc6418" stroke-width="0.8"/>
<rect x="373.5" y="189.5" width="7" height="4" fill="none" stroke="#dc6418" stroke-width="0.8"/>
<rect x="380.5" y="189.5" width="20" height="4" fill="none" stroke="#dc6418" stroke-width="0.8"/>
<rect x="401.5" y="189.5" width="14" height="4" fill="none" stroke="#dc6418" stroke-width="0.8"/>
<rect x="428.5" y="189.5" width="6" height="4" fill="none" stroke="#dc6418" stroke-width="0.8"/>
<rect x="462.5" y="189.5" width="12" height="4" fill="none" stroke="#dc6418" stroke-width="0.8"/>
<rect x="476.5" y="189.5" width="7" height="4" fill="none" stroke="#dc6418" stroke-width="0.8"/>
<rect x="374.5" y="194.5" width="4" height="4" fill="none" stroke="#dc6418" stroke-width="0.8"/>
<rect x="416.5" y="194.5" width="12" height="4" fill="none" stroke="#dc6418" stroke-width="0.8"/>
<rect x="430.5" y="194.5" width="8" height="4" fill="none" stroke="#dc6418" stroke-width="0.8"/>
<rect x="441.5" y="194.5" width="8" height="4" fill="none" stroke="#dc6418" stroke-width="0.8"/>
<rect x="455.5" y="194.5" width="4" height="4" fill="none" stroke="#dc6418" stroke-width="0.8"/>
<rect x="459.5" y="194.5" width="4" height="4" fill="none" stroke="#dc6418" stroke-width="0.8"/>
<rect x="464.5" y="194.5" width="19" height="4" fill="none" stroke="#dc6418" stroke-width="0.8"/>
<rect x="364.5" y="199.5" width="26" height="4" fill="none" stroke="#dc6418" stroke-width="0.8"/>
<rect x="390.5" y="199.5" width="6" height="4" fill="none" stroke="#dc6418" stroke-width="0.8"/>
<rect x="398.5" y="199.5" width="5" height="4" fill="none" stroke="#dc6418" stroke-width="0.8"/>
<rect x="428.5" y="199.5" width="8" height="4" fill="none" stroke="#dc6418" stroke-width="0.8"/>
<rect x="437.5" y="199.5" width="12" height="4" fill="none" stroke="#dc6418" stroke-width="0.8"/>
<rect x="449.5" y="199.5" width="20" height="4" fill="none" stroke="#dc6418" stroke-width="0.8"/>
<rect x="469.5" y="199.5" width="14" height="4" fill="none" stroke="#dc6418" stroke-width="0.8"/>
<rect x="365.5" y="204.5" width="4" height="4" fill="none" stroke="#dc6418" stroke-width="0.8"/>
<rect x="376.5" y="204.5" width="12" height="4" fill="none" stroke="#dc6418" stroke-width="0.8"/>
<rect x="400.5" y="204.5" width="7" height="4" fill="none" stroke="#dc6418" stroke-width="0.8"/>
<rect x="413.5" y="204.5" width="20" height="4" fill="none" stroke="#dc6418" stroke-width="0.8"/>
<rect x="433.5" y="204.5" width="7" height="4" fill="none" stroke="#dc6418" stroke-width="0.8"/>
<rect x="466.5" y="204.5" width="17" height="4" fill="none" stroke="#dc6418" stroke-width="0.8"/>
<rect x="407.5" y="208.5" width="16" height="4" fill="none" stroke="#dc6418" stroke-width="0.8"/>
<rect x="437.5" y="208.5" width="5" height="4" fill="none" stroke="#dc6418" stroke-width="0.8"/>
<rect x="478.5" y="208.5" width="5" height="4" fill="none" stroke="#dc6418" stroke-width="0.8"/>
<rect x="385.5" y="213.5" width="16" height="4" fill="none" stroke="#dc6418" stroke-width="0.8"/>
<rect x="403.5" y="213.5" width="5" height="4" fill="none" stroke="#dc6418" stroke-width="0.8"/>
<rect x="408.5" y="213.5" width="26" height="4" fill="none" stroke="#dc6418" stroke-width="0.8"/>
<rect x="444.5" y="213.5" width="12" height="4" fill="none" stroke="#dc6418" stroke-width="0.8"/>
<rect x="456.5" y="213.5" width="12" height="4" fill="none" stroke="#dc6418" stroke-width="0.8"/>
<rect x="383.5" y="217.5" width="6" height="4" fill="none" stroke="#dc6418" stroke-width="0.8"/>
<rect x="475.5" y="217.5" width="8" height="4" fill="none" stroke="#dc6418" stroke-width="0.8"/>
<rect x="378.5" y="221.5" width="14" height="4" fill="none" stroke="#dc6418" stroke-width="0.8"/>
<rect x="413.5" y="221.5" width="4" height="4" fill="none" stroke="#dc6418" stroke-width="0.8"/>
<rect x="431.5" y="221.5" width="6" height="4" fill="none" stroke="#dc6418" stroke-width="0.8"/>
<rect x="437.5" y="221.5" width="5" height="4" fill="none" stroke="#dc6418" stroke-width="0.8"/>
<rect x="464.5" y="221.5" width="12" height="4" fill="none" stroke="#dc6418" stroke-width="0.8"/>
<rect x="477.5" y="221.5" width="7" height="4" fill="none" stroke="#dc6418" stroke-width="0.8"/>
<rect x="375.5" y="226.5" width="8" height="4" fill="none" stroke="#dc6418" stroke-width="0.8"/>
<rect x="383.5" y="226.5" width="10" height="4" fill="none" stroke="#dc6418" stroke-width="0.8"/>
<rect x="393.5" y="226.5" width="26" height="4" fill="none" stroke="#dc6418" stroke-width="0.8"/>
<rect x="445.5" y="226.5" width="12" height="4" fill="none" stroke="#dc6418" stroke-width="0.8"/>
<rect x="459.5" y="226.5" width="14" height="4" fill="none" stroke="#dc6418" stroke-width="0.8"/>
<rect x="475.5" y="226.5" width="9" height="4" fill="none" stroke="#dc6418" stroke-width="0.8"/>
<rect x="360.5" y="230.5" width="26" height="4" fill="none" stroke="#dc6418" stroke-width="0.8"/>
<rect x="387.5" y="230.5" width="5" height="4" fill="none" stroke="#dc6418" stroke-width="0.8"/>
<rect x="392.5" y="230.5" width="4" height="4" fill="none" stroke="#dc6418" stroke-width="0.8"/>
<rect x="402.5" y="230.5" width="10" height="4" fill="none" stroke="#dc6418" stroke-width="0.8"/>
<rect x="415.5" y="230.5" width="20" height="4" fill="none" stroke="#dc6418" stroke-width="0.8"/>
<rect x="461.5" y="230.5" width="14" height="4" fill="none" stroke="#dc6418" stroke-width="0.8"/>
<rect x="475.5" y="230.5" width="9" height="4" fill="none" stroke="#dc6418" stroke-width="0.8"/>
<rect x="359.5" y="234.5" width="12" height="4" fill="none" stroke="#dc6418" stroke-width="0.8"/>
<rect x="371.5" y="234.5" width="8" height="4" fill="none" stroke="#dc6418" stroke-width="0.8"/>
<rect x="381.5" y="234.5" width="16" height="4" fill="none" stroke="#dc6418" stroke-width="0.8"/>
<rect x="420.5" y="234.5" width="26" height="4" fill="none" stroke="#dc6418" stroke-width="0.8"/>
<rect x="464.5" y="234.5" width="19" height="4" fill="none" stroke="#dc6418" stroke-width="0.8"/>
<rect x="357.5" y="238.5" width="16" height="4" fill="none" stroke="#dc6418" stroke-width="0.8"/>
<rect x="376.5" y="238.5" width="14" height="4" fill="none" stroke="#dc6418" stroke-width="0.8"/>
<rect x="396.5" y="238.5" width="10" height="4" fill="none" stroke="#dc6418" stroke-width="0.8"/>
<rect x="406.5" y="238.5" width="10" height="4" fill="none" stroke="#dc6418" stroke-width="0.8"/>
<rect x="422.5" y="238.5" width="26" height="4" fill="none" stroke="#dc6418" stroke-width="0.8"/>
<rect x="448.5" y="238.5" width="26" height="4" fill="none" stroke="#dc6418" stroke-width="0.8"/>
<rect x="477.5" y="238.5" width="6" height="4" fill="none" stroke="#dc6418" stroke-width="0.8"/>
<rect x="358.5" y="242.5" width="10" height="4" fill="none" stroke="#dc6418" stroke-width="0.8"/>
<rect x="368.5" y="242.5" width="20" height="4" fill="none" stroke="#dc6418" stroke-width="0.8"/>
<rect x="394.5" y="242.5" width="26" height="4" fill="none" stroke="#dc6418" stroke-width="0.8"/>
<rect x="420.5" y="242.5" width="5" height="4" fill="none" stroke="#dc6418" stroke-width="0.8"/>
<rect x="426.5" y="242.5" width="16" height="4" fill="none" stroke="#dc6418" stroke-width="0.8"/>
<rect x="452.5" y="242.5" width="12" height="4" fill="none" stroke="#dc6418" stroke-width="0.8"/>
<rect x="464.5" y="242.5" width="7" height="4" fill="none" stroke="#dc6418" stroke-width="0.8"/>
<rect x="477.5" y="242.5" width="6" height="4" fill="none" stroke="#dc6418" stroke-width="0.8"/>
<rect x="360.5" y="247.5" width="26" height="4" fill="none" stroke="#dc6418" stroke-width="0.8"/>
<rect x="392.5" y="247.5" width="10" height="4" fill="none" stroke="#dc6418" stroke-width="0.8"/>
<rect x="417.5" y="247.5" width="26" height="4" fill="none" stroke="#dc6418" stroke-width="0.8"/>
<rect x="478.5" y="247.5" width="6" height="4" fill="none" stroke="#dc6418" stroke-width="0.8"/>
<rect x="378.5" y="251.5" width="20" height="4" fill="none" stroke="#dc6418" stroke-width="0.8"/>
<rect x="469.5" y="251.5" width="15" height="4" fill="none" stroke="#dc6418" stroke-width="0.8"/>
<rect x="385.5" y="255.5" width="20" height="4" fill="none" stroke="#dc6418" stroke-width="0.8"/>
<rect x="449.5" y="255.5" width="5" height="4" fill="none" stroke="#dc6418" stroke-width="0.8"/>
<rect x="457.5" y="255.5" width="16" height="4" fill="none" stroke="#dc6418" stroke-width="0.8"/>
<rect x="476.5" y="255.5" width="7" height="4" fill="none" stroke="#dc6418" stroke-width="0.8"/>
<rect x="358.5" y="259.5" width="12" height="4" fill="none" stroke="#dc6418" stroke-width="0.8"/>
<rect x="392.5" y="259.5" width="7" height="4" fill="none" stroke="#dc6418" stroke-width="0.8"/>
<rect x="401.5" y="259.5" width="12" height="4" fill="none" stroke="#dc6418" stroke-width="0.8"/>
<rect x="415.5" y="259.5" width="8" height="4" fill="none" stroke="#dc6418" stroke-width="0.8"/>
<rect x="425.5" y="259.5" width="7" height="4" fill="none" stroke="#dc6418" stroke-width="0.8"/>
<rect x="433.5" y="259.5" width="20" height="4" fill="none" stroke="#dc6418" stroke-width="0.8"/>
<rect x="460.5" y="259.5" width="12" height="4" fill="none" stroke="#dc6418" stroke-width="0.8"/>
<rect x="479.5" y="259.5" width="5" height="4" fill="none" stroke="#dc6418" stroke-width="0.8"/>
<rect x="392.5" y="263.5" width="14" height="4" fill="none" stroke="#dc6418" stroke-width="0.8"/>
<rect x="407.5" y="263.5" width="12" height="4" fill="none" stroke="#dc6418" stroke-width="0.8"/>
<rect x="450.5" y="263.5" width="26" height="4" fill="none" stroke="#dc6418" stroke-width="0.8"/>
<rect x="478.5" y="263.5" width="6" height="4" fill="none" stroke="#dc6418" stroke-width="0.8"/>
<rect x="365.5" y="268.5" width="26" height="4" fill="none" stroke="#dc6418" stroke-width="0.8"/>
<rect x="398.5" y="268.5" width="26" height="4" fill="none" stroke="#dc6418" stroke-width="0.8"/>
<rect x="424.5" y="268.5" width="6" height="4" fill="none" stroke="#dc6418" stroke-width="0.8"/>
<rect x="436.5" y="268.5" width="14" height="4" fill="none" stroke="#dc6418" stroke-width="0.8"/>
<rect x="469.5" y="268.5" width="14" height="4" fill="none" stroke="#dc6418" stroke-width="0.8"/>
<rect x="360.5" y="272.5" width="8" height="4" fill="none" stroke="#dc6418" stroke-width="0.8"/>
<rect x="374.5" y="272.5" width="12" height="4" fill="none" stroke="#dc6418" stroke-width="0.8"/>
<rect x="389.5" y="272.5" width="26" height="4" fill="none" stroke="#dc6418" stroke-width="0.8"/>
<rect x="421.5" y="272.5" width="7" height="4" fill="none" stroke="#dc6418" stroke-width="0.8"/>
<rect x="430.5" y="272.5" width="14" height="4" fill="none" stroke="#dc6418" stroke-width="0.8"/>
<rect x="447.5" y="272.5" width="10" height="4" fill="none" stroke="#dc6418" stroke-width="0.8"/>
<rect x="457.5" y="272.5" width="26" height="4" fill="none" stroke="#dc6418" stroke-width="0.8"/>
<rect x="374.5" y="276.5" width="16" height="4" fill="none" stroke="#dc6418" stroke-width="0.8"/>
<rect x="392.5" y="276.5" width="7" height="4" fill="none" stroke="#dc6418" stroke-width="0.8"/>
<rect x="443.5" y="276.5" width="14" height="4" fill="none" stroke="#dc6418" stroke-width="0.8"/>
<rect x="457.5" y="276.5" width="8" height="4" fill="none" stroke="#dc6418" stroke-width="0.8"/>
<rect x="466.5" y="276.5" width="8" height="4" fill="none" stroke="#dc6418" stroke-width="0.8"/>
<rect x="474.5" y="276.5" width="9" height="4" fill="none" stroke="#dc6418" stroke-width="0.8"/>
<rect x="358.5" y="280.5" width="20" height="4" fill="none" stroke="#dc6418" stroke-width="0.8"/>
<rect x="378.5" y="280.5" width="7" height="4" fill="none" stroke="#dc6418" stroke-width="0.8"/>
<rect x="407.5" y="280.5" width="12" height="4" fill="none" stroke="#dc6418" stroke-width="0.8"/>
<rect x="426.5" y="280.5" width="16" height="4" fill="none" stroke="#dc6418" stroke-width="0.8"/>
<rect x="442.5" y="280.5" width="7" height="4" fill="none" stroke="#dc6418" stroke-width="0.8"/>
<rect x="449.5" y="280.5" width="7" height="4" fill="none" stroke="#dc6418" stroke-width="0.8"/>
<rect x="475.5" y="280.5" width="9" height="4" fill="none" stroke="#dc6418" stroke-width="0.8"/>
<rect x="360.5" y="284.5" width="26" height="4" fill="none" stroke="#dc6418" stroke-width="0.8"/>
<rect x="388.5" y="284.5" width="4" height="4" fill="none" stroke="#dc6418" stroke-width="0.8"/>
<rect x="407.5" y="284.5" width="14" height="4" fill="none" stroke="#dc6418" stroke-width="0.8"/>
<rect x="450.5" y="284.5" width="6" height="4" fill="none" stroke="#dc6418" stroke-width="0.8"/>
<rect x="457.5" y="284.5" width="26" height="4" fill="none" stroke="#dc6418" stroke-width="0.8"/>
<rect x="358.5" y="289.5" width="8" height="4" fill="none" stroke="#dc6418" stroke-width="0.8"/>
<rect x="367.5" y="289.5" width="20" height="4" fill="none" stroke="#dc6418" stroke-width="0.8"/>
<rect x="394.5" y="289.5" width="8" height="4" fill="none" stroke="#dc6418" stroke-width="0.8"/>
<rect x="412.5" y="289.5" width="7" height="4" fill="none" stroke="#dc6418" stroke-width="0.8"/>
<rect x="425.5" y="289.5" width="12" height="4" fill="none" stroke="#dc6418" stroke-width="0.8"/>
<rect x="463.5" y="289.5" width="20" height="4" fill="none" stroke="#dc6418" stroke-width="0.8"/>
<rect x="375.5" y="294.5" width="10" height="4" fill="none" stroke="#dc6418" stroke-width="0.8"/>
<rect x="385.5" y="294.5" width="12" height="4" fill="none" stroke="#dc6418" stroke-width="0.8"/>
<rect x="397.5" y="294.5" width="4" height="4" fill="none" stroke="#dc6418" stroke-width="0.8"/>
<rect x="401.5" y="294.5" width="10" height="4" fill="none" stroke="#dc6418" stroke-width="0.8"/>
<rect x="437.5" y="294.5" width="10" height="4" fill="none" stroke="#dc6418" stroke-width="0.8"/>
<rect x="449.5" y="294.5" width="7" height="4" fill="none" stroke="#dc6418" stroke-width="0.8"/>
<rect x="467.5" y="294.5" width="6" height="4" fill="none" stroke="#dc6418" stroke-width="0.8"/>
<rect x="479.5" y="294.5" width="5" height="4" fill="none" stroke="#dc6418" stroke-width="0.8"/>
<rect x="386.5" y="299.5" width="4" height="4" fill="none" stroke="#dc6418" stroke-width="0.8"/>
<rect x="391.5" y="299.5" width="10" height="4" fill="none" stroke="#dc6418" stroke-width="0.8"/>
<rect x="401.5" y="299.5" width="12" height="4" fill="none" stroke="#dc6418" stroke-width="0.8"/>
<rect x="463.5" y="299.5" width="20" height="4" fill="none" stroke="#dc6418" stroke-width="0.8"/>
<rect x="380.5" y="304.5" width="6" height="4" fill="none" stroke="#dc6418" stroke-width="0.8"/>
<rect x="392.5" y="304.5" width="6" height="4" fill="none" stroke="#dc6418" stroke-width="0.8"/>
<rect x="400.5" y="304.5" width="4" height="4" fill="none" stroke="#dc6418" stroke-width="0.8"/>
<rect x="405.5" y="304.5" width="5" height="4" fill="none" stroke="#dc6418" stroke-width="0.8"/>
<rect x="427.5" y="304.5" width="8" height="4" fill="none" stroke="#dc6418" stroke-width="0.8"/>
<rect x="437.5" y="304.5" width="16" height="4" fill="none" stroke="#dc6418" stroke-width="0.8"/>
<rect x="474.5" y="304.5" width="9" height="4" fill="none" stroke="#dc6418" stroke-width="0.8"/>
<rect x="417.5" y="308.5" width="7" height="4" fill="none" stroke="#dc6418" stroke-width="0.8"/>
<rect x="424.5" y="308.5" width="4" height="4" fill="none" stroke="#dc6418" stroke-width="0.8"/>
<rect x="431.5" y="308.5" width="26" height="4" fill="none" stroke="#dc6418" stroke-width="0.8"/>
<rect x="467.5" y="308.5" width="16" height="4" fill="none" stroke="#dc6418" stroke-width="0.8"/>
<rect x="358.5" y="312.5" width="8" height="4" fill="none" stroke="#dc6418" stroke-width="0.8"/>
<rect x="390.5" y="312.5" width="4" height="4" fill="none" stroke="#dc6418" stroke-width="0.8"/>
<rect x="395.5" y="312.5" width="7" height="4" fill="none" stroke="#dc6418" stroke-width="0.8"/>
<rect x="469.5" y="312.5" width="15" height="4" fill="none" stroke="#dc6418" stroke-width="0.8"/>
<rect x="429.5" y="317.5" width="5" height="4" fill="none" stroke="#dc6418" stroke-width="0.8"/>
<rect x="471.5" y="317.5" width="13" height="4" fill="none" stroke="#dc6418" stroke-width="0.8"/>
<rect x="368.5" y="322.5" width="7" height="4" fill="none" stroke="#dc6418" stroke-width="0.8"/>
<rect x="387.5" y="322.5" width="10" height="4" fill="none" stroke="#dc6418" stroke-width="0.8"/>
<rect x="398.5" y="322.5" width="12" height="4" fill="none" stroke="#dc6418" stroke-width="0.8"/>
<rect x="410.5" y="322.5" width="10" height="4" fill="none" stroke="#dc6418" stroke-width="0.8"/>
<rect x="425.5" y="322.5" width="14" height="4" fill="none" stroke="#dc6418" stroke-width="0.8"/>
<rect x="462.5" y="322.5" width="16" height="4" fill="none" stroke="#dc6418" stroke-width="0.8"/>
<rect x="478.5" y="322.5" width="5" height="4" fill="none" stroke="#dc6418" stroke-width="0.8"/>
<rect x="412.5" y="326.5" width="8" height="4" fill="none" stroke="#dc6418" stroke-width="0.8"/>
<rect x="420.5" y="326.5" width="16" height="4" fill="none" stroke="#dc6418" stroke-width="0.8"/>
<rect x="451.5" y="326.5" width="12" height="4" fill="none" stroke="#dc6418" stroke-width="0.8"/>
<rect x="464.5" y="326.5" width="7" height="4" fill="none" stroke="#dc6418" stroke-width="0.8"/>
<rect x="471.5" y="326.5" width="13" height="4" fill="none" stroke="#dc6418" stroke-width="0.8"/>
<rect x="374.5" y="331.5" width="8" height="4" fill="none" stroke="#dc6418" stroke-width="0.8"/>
<rect x="389.5" y="331.5" width="4" height="4" fill="none" stroke="#dc6418" stroke-width="0.8"/>
<rect x="449.5" y="331.5" width="12" height="4" fill="none" stroke="#dc6418" stroke-width="0.8"/>
<rect x="467.5" y="331.5" width="6" height="4" fill="none" stroke="#dc6418" stroke-width="0.8"/>
<rect x="473.5" y="331.5" width="10" height="4" fill="none" stroke="#dc6418" stroke-width="0.8"/>
<rect x="427.5" y="335.5" width="14" height="4" fill="none" stroke="#dc6418" stroke-width="0.8"/>
<rect x="447.5" y="335.5" width="7" height="4" fill="none" stroke="#dc6418" stroke-width="0.8"/>
<rect x="455.5" y="335.5" width="8" height="4" fill="none" stroke="#dc6418" stroke-width="0.8"/>
<rect x="464.5" y="335.5" width="19" height="4" fill="none" stroke="#dc6418" stroke-width="0.8"/>
<rect x="373.5" y="340.5" width="26" height="4" fill="none" stroke="#dc6418" stroke-width="0.8"/>
<rect x="399.5" y="340.5" width="6" height="4" fill="none" stroke="#dc6418" stroke-width="0.8"/>
<rect x="411.5" y="340.5" width="7" height="4" fill="none" stroke="#dc6418" stroke-width="0.8"/>
<rect x="421.5" y="340.5" width="6" height="4" fill="none" stroke="#dc6418" stroke-width="0.8"/>
<rect x="430.5" y="340.5" width="26" height="4" fill="none" stroke="#dc6418" stroke-width="0.8"/>
<rect x="462.5" y="340.5" width="22" height="4" fill="none" stroke="#dc6418" stroke-width="0.8"/>
<rect x="374.5" y="344.5" width="12" height="4" fill="none" stroke="#dc6418" stroke-width="0.8"/>
<rect x="401.5" y="344.5" width="6" height="4" fill="none" stroke="#dc6418" stroke-width="0.8"/>
<rect x="424.5" y="344.5" width="6" height="4" fill="none" stroke="#dc6418" stroke-width="0.8"/>
<rect x="432.5" y="344.5" width="10" height="4" fill="none" stroke="#dc6418" stroke-width="0.8"/>
<rect x="455.5" y="344.5" width="5" height="4" fill="none" stroke="#dc6418" stroke-width="0.8"/>
<rect x="461.5" y="344.5" width="4" height="4" fill="none" stroke="#dc6418" stroke-width="0.8"/>
<rect x="467.5" y="344.5" width="16" height="4" fill="none" stroke="#dc6418" stroke-width="0.8"/>
<rect x="377.5" y="349.5" width="14" height="4" fill="none" stroke="#dc6418" stroke-width="0.8"/>
<rect x="397.5" y="349.5" width="12" height="4" fill="none" stroke="#dc6418" stroke-width="0.8"/>
<rect x="412.5" y="349.5" width="20" height="4" fill="none" stroke="#dc6418" stroke-width="0.8"/>
<rect x="433.5" y="349.5" width="16" height="4" fill="none" stroke="#dc6418" stroke-width="0.8"/>
<rect x="450.5" y="349.5" width="5" height="4" fill="none" stroke="#dc6418" stroke-width="0.8"/>
<rect x="457.5" y="349.5" width="27" height="4" fill="none" stroke="#dc6418" stroke-width="0.8"/>
<rect x="408.5" y="353.5" width="20" height="4" fill="none" stroke="#dc6418" stroke-width="0.8"/>
<rect x="430.5" y="353.5" width="8" height="4" fill="none" stroke="#dc6418" stroke-width="0.8"/>
<rect x="441.5" y="353.5" width="12" height="4" fill="none" stroke="#dc6418" stroke-width="0.8"/>
<rect x="459.5" y="353.5" width="12" height="4" fill="none" stroke="#dc6418" stroke-width="0.8"/>
<rect x="472.5" y="353.5" width="11" height="4" fill="none" stroke="#dc6418" stroke-width="0.8"/>
<rect x="389.5" y="357.5" width="26" height="4" fill="none" stroke="#dc6418" stroke-width="0.8"/>
<rect x="426.5" y="357.5" width="26" height="4" fill="none" stroke="#dc6418" stroke-width="0.8"/>
<rect x="454.5" y="357.5" width="29" height="4" fill="none" stroke="#dc6418" stroke-width="0.8"/>
<rect x="381.5" y="361.5" width="12" height="4" fill="none" stroke="#dc6418" stroke-width="0.8"/>
<rect x="393.5" y="361.5" width="16" height="4" fill="none" stroke="#dc6418" stroke-width="0.8"/>
<rect x="409.5" y="361.5" width="6" height="4" fill="none" stroke="#dc6418" stroke-width="0.8"/>
<rect x="415.5" y="361.5" width="7" height="4" fill="none" stroke="#dc6418" stroke-width="0.8"/>
<rect x="424.5" y="361.5" width="16" height="4" fill="none" stroke="#dc6418" stroke-width="0.8"/>
<rect x="443.5" y="361.5" width="12" height="4" fill="none" stroke="#dc6418" stroke-width="0.8"/>
<rect x="458.5" y="361.5" width="6" height="4" fill="none" stroke="#dc6418" stroke-width="0.8"/>
<rect x="467.5" y="361.5" width="16" height="4" fill="none" stroke="#dc6418" stroke-width="0.8"/>
<rect x="380.5" y="365.5" width="7" height="4" fill="none" stroke="#dc6418" stroke-width="0.8"/>
<rect x="387.5" y="365.5" width="4" height="4" fill="none" stroke="#dc6418" stroke-width="0.8"/>
<rect x="397.5" y="365.5" width="7" height="4" fill="none" stroke="#dc6418" stroke-width="0.8"/>
<rect x="407.5" y="365.5" width="12" height="4" fill="none" stroke="#dc6418" stroke-width="0.8"/>
<rect x="425.5" y="365.5" width="7" height="4" fill="none" stroke="#dc6418" stroke-width="0.8"/>
<rect x="462.5" y="365.5" width="12" height="4" fill="none" stroke="#dc6418" stroke-width="0.8"/>
<rect x="475.5" y="365.5" width="9" height="4" fill="none" stroke="#dc6418" stroke-width="0.8"/>
<rect x="346.5" y="244.5" width="11" height="4" fill="none" stroke="#dc6418" stroke-width="1"/>
<line x1="348" y1="246.5" x2="356" y2="246.5" stroke="#f01c1c" stroke-width="1"/>
<rect x="345.5" y="258.5" width="12" height="4" fill="none" stroke="#dc6418" stroke-width="1"/>
<line x1="347" y1="260.5" x2="356" y2="260.5" stroke="#f01c1c" stroke-width="1"/>
<rect x="345.5" y="270.5" width="9" height="4" fill="none" stroke="#dc6418" stroke-width="1"/>
<line x1="347" y1="272.5" x2="353" y2="272.5" stroke="#f01c1c" stroke-width="1"/>
<rect x="346.5" y="293.5" width="11" height="4" fill="none" stroke="#dc6418" stroke-width="1"/>
<line x1="348" y1="295.5" x2="356" y2="295.5" stroke="#f01c1c" stroke-width="1"/>
<rect x="348.5" y="306.5" width="9" height="4" fill="none" stroke="#dc6418" stroke-width="1"/>
<line x1="350" y1="308.5" x2="356" y2="308.5" stroke="#f01c1c" stroke-width="1"/>
<line x1="469" y1="178" x2="470" y2="178" stroke="#f01c1c" stroke-width="1.3"/>
<line x1="399" y1="358.5" x2="408" y2="358.5" stroke="#f01c1c" stroke-width="0.8"/>
<line x1="426" y1="225.5" x2="437" y2="225.5" stroke="#f01c1c" stroke-width="0.8"/>
<line x1="381" y1="235.5" x2="387" y2="235.5" stroke="#f01c1c" stroke-width="0.8"/>
<line x1="363" y1="290.5" x2="369" y2="290.5" stroke="#f01c1c" stroke-width="0.8"/>
<line x1="460" y1="273" x2="465" y2="273" stroke="#f01c1c" stroke-width="1.3"/>
<line x1="418" y1="328.5" x2="433" y2="328.5" stroke="#f01c1c" stroke-width="0.8"/>
<line x1="405" y1="298" x2="409" y2="298" stroke="#f01c1c" stroke-width="1.3"/>
<line x1="393" y1="265.5" x2="406" y2="265.5" stroke="#f01c1c" stroke-width="0.8"/>
<line x1="448" y1="239.5" x2="458" y2="239.5" stroke="#f01c1c" stroke-width="0.8"/>
<line x1="375" y1="203.5" x2="384" y2="203.5" stroke="#f01c1c" stroke-width="0.8"/>
<line x1="477" y1="204.5" x2="482" y2="204.5" stroke="#f01c1c" stroke-width="0.8"/>
<line x1="481" y1="357.5" x2="483" y2="357.5" stroke="#f01c1c" stroke-width="0.8"/>
<line x1="434" y1="302.5" x2="440" y2="302.5" stroke="#f01c1c" stroke-width="0.8"/>
<line x1="373" y1="244.5" x2="382" y2="244.5" stroke="#f01c1c" stroke-width="0.8"/>
<line x1="465" y1="198.5" x2="473" y2="198.5" stroke="#f01c1c" stroke-width="0.8"/>
<line x1="438" y1="227.5" x2="446" y2="227.5" stroke="#f01c1c" stroke-width="0.8"/>
<line x1="374" y1="333.5" x2="379" y2="333.5" stroke="#f01c1c" stroke-width="0.8"/>
<line x1="466" y1="178.5" x2="469" y2="178.5" stroke="#f01c1c" stroke-width="0.8"/>
<line x1="418" y1="297.5" x2="429" y2="297.5" stroke="#f01c1c" stroke-width="0.8"/>
<line x1="376" y1="290" x2="383" y2="290" stroke="#f01c1c" stroke-width="1.3"/>
<line x1="425" y1="330.5" x2="430" y2="330.5" stroke="#f01c1c" stroke-width="0.8"/>
<line x1="408" y1="275" x2="422" y2="275" stroke="#f01c1c" stroke-width="1.3"/>
<line x1="406" y1="307" x2="412" y2="307" stroke="#f01c1c" stroke-width="1.3"/>
<line x1="466" y1="274.5" x2="470" y2="274.5" stroke="#f01c1c" stroke-width="0.8"/>
<line x1="362" y1="282.5" x2="371" y2="282.5" stroke="#f01c1c" stroke-width="0.8"/>
<line x1="382" y1="356.5" x2="389" y2="356.5" stroke="#f01c1c" stroke-width="0.8"/>
<line x1="381" y1="232.5" x2="395" y2="232.5" stroke="#f01c1c" stroke-width="0.8"/>
<line x1="446" y1="240.5" x2="451" y2="240.5" stroke="#f01c1c" stroke-width="0.8"/>
<line x1="395" y1="334" x2="401" y2="334" stroke="#f01c1c" stroke-width="1.3"/>
<line x1="371" y1="291" x2="377" y2="291" stroke="#f01c1c" stroke-width="1.3"/>
<line x1="413" y1="292.5" x2="421" y2="292.5" stroke="#f01c1c" stroke-width="0.8"/>
<line x1="394" y1="202" x2="403" y2="202" stroke="#f01c1c" stroke-width="1.3"/>
<line x1="464" y1="281.5" x2="480" y2="281.5" stroke="#f01c1c" stroke-width="0.8"/>
<line x1="398" y1="234.5" x2="404" y2="234.5" stroke="#f01c1c" stroke-width="0.8"/>
<line x1="424" y1="333.5" x2="434" y2="333.5" stroke="#f01c1c" stroke-width="0.8"/>
<line x1="397" y1="305" x2="410" y2="305" stroke="#f01c1c" stroke-width="1.3"/>
<line x1="433" y1="206.5" x2="446" y2="206.5" stroke="#f01c1c" stroke-width="0.8"/>
<line x1="387" y1="195.5" x2="400" y2="195.5" stroke="#f01c1c" stroke-width="0.8"/>
<line x1="440" y1="315.5" x2="444" y2="315.5" stroke="#f01c1c" stroke-width="0.8"/>
<line x1="442" y1="354" x2="446" y2="354" stroke="#f01c1c" stroke-width="1.3"/>
<line x1="440" y1="203.5" x2="445" y2="203.5" stroke="#f01c1c" stroke-width="0.8"/>
<line x1="469" y1="269.5" x2="480" y2="269.5" stroke="#f01c1c" stroke-width="0.8"/>
<line x1="412" y1="257.5" x2="423" y2="257.5" stroke="#f01c1c" stroke-width="0.8"/>
<line x1="454" y1="339" x2="469" y2="339" stroke="#f01c1c" stroke-width="1.3"/>
<line x1="447" y1="316.5" x2="452" y2="316.5" stroke="#f01c1c" stroke-width="0.8"/>
<line x1="388" y1="295" x2="399" y2="295" stroke="#f01c1c" stroke-width="1.3"/>
<line x1="395" y1="250.5" x2="407" y2="250.5" stroke="#f01c1c" stroke-width="0.8"/>
<line x1="452" y1="278.5" x2="460" y2="278.5" stroke="#f01c1c" stroke-width="0.8"/>
<line x1="405" y1="365.5" x2="410" y2="365.5" stroke="#f01c1c" stroke-width="0.8"/>
<line x1="434" y1="262" x2="438" y2="262" stroke="#f01c1c" stroke-width="1.3"/>
<line x1="394" y1="312.5" x2="404" y2="312.5" stroke="#f01c1c" stroke-width="0.8"/>
<line x1="428" y1="179.5" x2="434" y2="179.5" stroke="#f01c1c" stroke-width="0.8"/>
<line x1="451" y1="345.5" x2="465" y2="345.5" stroke="#f01c1c" stroke-width="0.8"/>
<line x1="392" y1="362.5" x2="395" y2="362.5" stroke="#f01c1c" stroke-width="0.8"/>
<line x1="458" y1="240.5" x2="466" y2="240.5" stroke="#f01c1c" stroke-width="0.8"/>
<line x1="409" y1="298" x2="422" y2="298" stroke="#f01c1c" stroke-width="1.3"/>
<line x1="362" y1="260.5" x2="372" y2="260.5" stroke="#f01c1c" stroke-width="0.8"/>
<line x1="455" y1="299.5" x2="469" y2="299.5" stroke="#f01c1c" stroke-width="0.8"/>
<line x1="415" y1="356.5" x2="420" y2="356.5" stroke="#f01c1c" stroke-width="0.8"/>
<line x1="405" y1="323.5" x2="414" y2="323.5" stroke="#f01c1c" stroke-width="0.8"/>
<line x1="455" y1="225.5" x2="463" y2="225.5" stroke="#f01c1c" stroke-width="0.8"/>
<line x1="420" y1="301.5" x2="434" y2="301.5" stroke="#f01c1c" stroke-width="0.8"/>
<line x1="408" y1="314" x2="412" y2="314" stroke="#f01c1c" stroke-width="1.3"/>
<line x1="478" y1="331.5" x2="482" y2="331.5" stroke="#f01c1c" stroke-width="0.8"/>
<line x1="434" y1="192" x2="440" y2="192" stroke="#f01c1c" stroke-width="1.3"/>
<line x1="392" y1="180.5" x2="401" y2="180.5" stroke="#f01c1c" stroke-width="0.8"/>
<line x1="422" y1="237" x2="431" y2="237" stroke="#f01c1c" stroke-width="1.3"/>
<line x1="474" y1="197" x2="480" y2="197" stroke="#f01c1c" stroke-width="1.3"/>
<line x1="456" y1="173.5" x2="468" y2="173.5" stroke="#f01c1c" stroke-width="0.8"/>
<line x1="473" y1="365.5" x2="477" y2="365.5" stroke="#f01c1c" stroke-width="0.8"/>
<line x1="483" y1="354.5" x2="484" y2="354.5" stroke="#f01c1c" stroke-width="0.8"/>
<line x1="457" y1="211.5" x2="470" y2="211.5" stroke="#f01c1c" stroke-width="0.8"/>
<line x1="458" y1="200.5" x2="474" y2="200.5" stroke="#f01c1c" stroke-width="0.8"/>
<line x1="456" y1="208" x2="464" y2="208" stroke="#f01c1c" stroke-width="1.3"/>
<line x1="413" y1="178.5" x2="423" y2="178.5" stroke="#f01c1c" stroke-width="0.8"/>
<line x1="402" y1="335.5" x2="411" y2="335.5" stroke="#f01c1c" stroke-width="0.8"/>
<line x1="368" y1="262" x2="383" y2="262" stroke="#f01c1c" stroke-width="1.3"/>
<line x1="478" y1="288.5" x2="483" y2="288.5" stroke="#f01c1c" stroke-width="0.8"/>
<line x1="419" y1="353.5" x2="422" y2="353.5" stroke="#f01c1c" stroke-width="0.8"/>
<line x1="385" y1="225" x2="393" y2="225" stroke="#f01c1c" stroke-width="1.3"/>
<line x1="448" y1="355" x2="460" y2="355" stroke="#f01c1c" stroke-width="1.3"/>
<line x1="383" y1="303.5" x2="396" y2="303.5" stroke="#f01c1c" stroke-width="0.8"/>
<line x1="397" y1="291.5" x2="409" y2="291.5" stroke="#f01c1c" stroke-width="0.8"/>
<line x1="410" y1="192.5" x2="420" y2="192.5" stroke="#f01c1c" stroke-width="0.8"/>
<line x1="481" y1="236.5" x2="483" y2="236.5" stroke="#f01c1c" stroke-width="0.8"/>
<line x1="410" y1="228.5" x2="416" y2="228.5" stroke="#f01c1c" stroke-width="0.8"/>
<line x1="458" y1="186.5" x2="467" y2="186.5" stroke="#f01c1c" stroke-width="0.8"/>
<line x1="436" y1="359.5" x2="451" y2="359.5" stroke="#f01c1c" stroke-width="0.8"/>
<line x1="457" y1="252.5" x2="466" y2="252.5" stroke="#f01c1c" stroke-width="0.8"/>
<line x1="475" y1="338.5" x2="483" y2="338.5" stroke="#f01c1c" stroke-width="0.8"/>
<line x1="394" y1="216.5" x2="398" y2="216.5" stroke="#f01c1c" stroke-width="0.8"/>
<line x1="404" y1="318.5" x2="412" y2="318.5" stroke="#f01c1c" stroke-width="0.8"/>
<line x1="390" y1="306.5" x2="404" y2="306.5" stroke="#f01c1c" stroke-width="0.8"/>
<line x1="405" y1="367.5" x2="409" y2="367.5" stroke="#f01c1c" stroke-width="0.8"/>
<line x1="482" y1="192.5" x2="484" y2="192.5" stroke="#f01c1c" stroke-width="0.8"/>
<line x1="383" y1="206.5" x2="398" y2="206.5" stroke="#f01c1c" stroke-width="0.8"/>
<line x1="429" y1="201" x2="433" y2="201" stroke="#f01c1c" stroke-width="1.3"/>
<line x1="463" y1="232.5" x2="476" y2="232.5" stroke="#f01c1c" stroke-width="0.8"/>
<line x1="384" y1="349.5" x2="395" y2="349.5" stroke="#f01c1c" stroke-width="0.8"/>
<line x1="423" y1="305" x2="434" y2="305" stroke="#f01c1c" stroke-width="1.3"/>
<line x1="479" y1="288.5" x2="482" y2="288.5" stroke="#f01c1c" stroke-width="0.8"/>
<line x1="382" y1="265" x2="394" y2="265" stroke="#f01c1c" stroke-width="1.3"/>
<line x1="422" y1="343.5" x2="436" y2="343.5" stroke="#f01c1c" stroke-width="0.8"/>
<line x1="373" y1="238.5" x2="377" y2="238.5" stroke="#f01c1c" stroke-width="0.8"/>
<line x1="388" y1="252" x2="397" y2="252" stroke="#f01c1c" stroke-width="1.3"/>
<line x1="473" y1="324.5" x2="479" y2="324.5" stroke="#f01c1c" stroke-width="0.8"/>
<line x1="414" y1="246" x2="427" y2="246" stroke="#f01c1c" stroke-width="1.3"/>
<line x1="459" y1="176.5" x2="470" y2="176.5" stroke="#f01c1c" stroke-width="0.8"/>
<line x1="393" y1="256.5" x2="403" y2="256.5" stroke="#f01c1c" stroke-width="0.8"/>
<line x1="362" y1="276.5" x2="366" y2="276.5" stroke="#f01c1c" stroke-width="0.8"/>
<line x1="460" y1="240.5" x2="467" y2="240.5" stroke="#f01c1c" stroke-width="0.8"/>
<line x1="379" y1="331.5" x2="392" y2="331.5" stroke="#f01c1c" stroke-width="0.8"/>
<line x1="380" y1="225.5" x2="392" y2="225.5" stroke="#f01c1c" stroke-width="0.8"/>
<line x1="481" y1="363.5" x2="483" y2="363.5" stroke="#f01c1c" stroke-width="0.8"/>
<line x1="402" y1="356.5" x2="405" y2="356.5" stroke="#f01c1c" stroke-width="0.8"/>
<line x1="410" y1="184.5" x2="422" y2="184.5" stroke="#f01c1c" stroke-width="0.8"/>
<line x1="385" y1="319.5" x2="394" y2="319.5" stroke="#f01c1c" stroke-width="0.8"/>
<line x1="359" y1="266.5" x2="373" y2="266.5" stroke="#f01c1c" stroke-width="0.8"/>
<line x1="461" y1="294.5" x2="473" y2="294.5" stroke="#f01c1c" stroke-width="0.8"/>
<line x1="391" y1="331.5" x2="398" y2="331.5" stroke="#f01c1c" stroke-width="0.8"/>
<line x1="415" y1="174.5" x2="430" y2="174.5" stroke="#f01c1c" stroke-width="0.8"/>
<line x1="409" y1="363" x2="415" y2="363" stroke="#f01c1c" stroke-width="1.3"/>
<line x1="366" y1="260.5" x2="379" y2="260.5" stroke="#f01c1c" stroke-width="0.8"/>
<line x1="451" y1="320" x2="466" y2="320" stroke="#f01c1c" stroke-width="1.3"/>
<line x1="472" y1="234.5" x2="481" y2="234.5" stroke="#f01c1c" stroke-width="0.8"/>
<line x1="365" y1="295" x2="374" y2="295" stroke="#f01c1c" stroke-width="1.3"/>
<line x1="403" y1="365.5" x2="418" y2="365.5" stroke="#f01c1c" stroke-width="0.8"/>
<line x1="376" y1="190.5" x2="387" y2="190.5" stroke="#f01c1c" stroke-width="0.8"/>
<line x1="448" y1="298.5" x2="462" y2="298.5" stroke="#f01c1c" stroke-width="0.8"/>
<line x1="452" y1="247.5" x2="456" y2="247.5" stroke="#f01c1c" stroke-width="0.8"/>
<line x1="393" y1="327.5" x2="409" y2="327.5" stroke="#f01c1c" stroke-width="0.8"/>
<line x1="367" y1="286" x2="375" y2="286" stroke="#f01c1c" stroke-width="1.3"/>
<line x1="454" y1="246.5" x2="465" y2="246.5" stroke="#f01c1c" stroke-width="0.8"/>
<line x1="476" y1="256.5" x2="483" y2="256.5" stroke="#f01c1c" stroke-width="0.8"/>
<line x1="375" y1="313.5" x2="388" y2="313.5" stroke="#f01c1c" stroke-width="0.8"/>
<line x1="370" y1="254.5" x2="383" y2="254.5" stroke="#f01c1c" stroke-width="0.8"/>
<line x1="474" y1="243.5" x2="480" y2="243.5" stroke="#f01c1c" stroke-width="0.8"/>
<line x1="407" y1="247.5" x2="412" y2="247.5" stroke="#f01c1c" stroke-width="0.8"/>
<line x1="431" y1="199.5" x2="442" y2="199.5" stroke="#f01c1c" stroke-width="0.8"/>
<line x1="395" y1="266" x2="408" y2="266" stroke="#f01c1c" stroke-width="1.3"/>
<line x1="404" y1="261" x2="408" y2="261" stroke="#f01c1c" stroke-width="1.3"/>
<line x1="445" y1="290.5" x2="449" y2="290.5" stroke="#f01c1c" stroke-width="0.8"/>
<line x1="412" y1="367.5" x2="424" y2="367.5" stroke="#f01c1c" stroke-width="0.8"/>
<line x1="377" y1="318" x2="390" y2="318" stroke="#f01c1c" stroke-width="1.3"/>
<line x1="424" y1="295.5" x2="428" y2="295.5" stroke="#f01c1c" stroke-width="0.8"/>
<line x1="466" y1="261.5" x2="471" y2="261.5" stroke="#f01c1c" stroke-width="0.8"/>
<line x1="404" y1="249.5" x2="418" y2="249.5" stroke="#f01c1c" stroke-width="0.8"/>
<line x1="377" y1="295.5" x2="389" y2="295.5" stroke="#f01c1c" stroke-width="0.8"/>
<line x1="382" y1="288.5" x2="387" y2="288.5" stroke="#f01c1c" stroke-width="0.8"/>
<line x1="428" y1="194" x2="441" y2="194" stroke="#f01c1c" stroke-width="1.3"/>
<line x1="478" y1="334.5" x2="483" y2="334.5" stroke="#f01c1c" stroke-width="0.8"/>
<line x1="407" y1="283.5" x2="419" y2="283.5" stroke="#f01c1c" stroke-width="0.8"/>
<line x1="419" y1="212.5" x2="434" y2="212.5" stroke="#f01c1c" stroke-width="0.8"/>
<line x1="412" y1="361.5" x2="428" y2="361.5" stroke="#f01c1c" stroke-width="0.8"/>
<line x1="447" y1="211" x2="459" y2="211" stroke="#f01c1c" stroke-width="1.3"/>
<line x1="443" y1="360.5" x2="454" y2="360.5" stroke="#f01c1c" stroke-width="0.8"/>
<line x1="437" y1="336.5" x2="452" y2="336.5" stroke="#f01c1c" stroke-width="0.8"/>
<line x1="476" y1="330.5" x2="482" y2="330.5" stroke="#f01c1c" stroke-width="0.8"/>
<line x1="425" y1="353.5" x2="429" y2="353.5" stroke="#f01c1c" stroke-width="0.8"/>
<line x1="453" y1="279.5" x2="462" y2="279.5" stroke="#f01c1c" stroke-width="0.8"/>
<line x1="401" y1="183" x2="408" y2="183" stroke="#f01c1c" stroke-width="1.3"/>
<line x1="421" y1="198.5" x2="437" y2="198.5" stroke="#f01c1c" stroke-width="0.8"/>
<line x1="448" y1="275.5" x2="461" y2="275.5" stroke="#f01c1c" stroke-width="0.8"/>
<line x1="456" y1="271.5" x2="459" y2="271.5" stroke="#f01c1c" stroke-width="0.8"/>
<line x1="372" y1="244.5" x2="387" y2="244.5" stroke="#f01c1c" stroke-width="0.8"/>
<line x1="368" y1="317" x2="384" y2="317" stroke="#f01c1c" stroke-width="1.3"/>
<line x1="365" y1="309" x2="378" y2="309" stroke="#f01c1c" stroke-width="1.3"/>
<line x1="480" y1="274" x2="483" y2="274" stroke="#f01c1c" stroke-width="1.3"/>
<line x1="443" y1="205" x2="457" y2="205" stroke="#f01c1c" stroke-width="1.3"/>
<line x1="459" y1="233.5" x2="463" y2="233.5" stroke="#f01c1c" stroke-width="0.8"/>
<line x1="390" y1="306.5" x2="394" y2="306.5" stroke="#f01c1c" stroke-width="0.8"/>
<line x1="479" y1="233.5" x2="483" y2="233.5" stroke="#f01c1c" stroke-width="0.8"/>
<line x1="383" y1="226.5" x2="395" y2="226.5" stroke="#f01c1c" stroke-width="0.8"/>
<line x1="420" y1="200.5" x2="427" y2="200.5" stroke="#f01c1c" stroke-width="0.8"/>
<line x1="385" y1="215.5" x2="396" y2="215.5" stroke="#f01c1c" stroke-width="0.8"/>
<line x1="478" y1="356.5" x2="483" y2="356.5" stroke="#f01c1c" stroke-width="0.8"/>
<line x1="474" y1="272" x2="479" y2="272" stroke="#f01c1c" stroke-width="1.3"/>
<line x1="397" y1="318.5" x2="408" y2="318.5" stroke="#f01c1c" stroke-width="0.8"/>
<line x1="466" y1="220.5" x2="478" y2="220.5" stroke="#f01c1c" stroke-width="0.8"/>
<line x1="414" y1="279" x2="426" y2="279" stroke="#f01c1c" stroke-width="1.3"/>
<line x1="404" y1="208.5" x2="412" y2="208.5" stroke="#f01c1c" stroke-width="0.8"/>
<line x1="395" y1="271.5" x2="401" y2="271.5" stroke="#f01c1c" stroke-width="0.8"/>
<line x1="451" y1="340.5" x2="457" y2="340.5" stroke="#f01c1c" stroke-width="0.8"/>
<line x1="400" y1="235.5" x2="403" y2="235.5" stroke="#f01c1c" stroke-width="0.8"/>
<line x1="390" y1="200.5" x2="404" y2="200.5" stroke="#f01c1c" stroke-width="0.8"/>
<line x1="428" y1="216.5" x2="439" y2="216.5" stroke="#f01c1c" stroke-width="0.8"/>
<line x1="396" y1="238.5" x2="401" y2="238.5" stroke="#f01c1c" stroke-width="0.8"/>
<line x1="441" y1="318.5" x2="446" y2="318.5" stroke="#f01c1c" stroke-width="0.8"/>
<line x1="452" y1="341.5" x2="463" y2="341.5" stroke="#f01c1c" stroke-width="0.8"/>
<line x1="449" y1="226.5" x2="459" y2="226.5" stroke="#f01c1c" stroke-width="0.8"/>
<line x1="435" y1="189" x2="443" y2="189" stroke="#f01c1c" stroke-width="1.3"/>
<line x1="391" y1="310.5" x2="405" y2="310.5" stroke="#f01c1c" stroke-width="0.8"/>
<line x1="469" y1="226.5" x2="473" y2="226.5" stroke="#f01c1c" stroke-width="0.8"/>
<line x1="373" y1="271" x2="387" y2="271" stroke="#f01c1c" stroke-width="1.3"/>
<line x1="460" y1="289.5" x2="466" y2="289.5" stroke="#f01c1c" stroke-width="0.8"/>
<line x1="478" y1="235.5" x2="482" y2="235.5" stroke="#f01c1c" stroke-width="0.8"/>
<line x1="383" y1="244" x2="390" y2="244" stroke="#f01c1c" stroke-width="1.3"/>
<line x1="396" y1="337.5" x2="408" y2="337.5" stroke="#f01c1c" stroke-width="0.8"/>
<line x1="419" y1="228.5" x2="431" y2="228.5" stroke="#f01c1c" stroke-width="0.8"/>
<line x1="402" y1="362.5" x2="415" y2="362.5" stroke="#f01c1c" stroke-width="0.8"/>
<line x1="392" y1="326.5" x2="401" y2="326.5" stroke="#f01c1c" stroke-width="0.8"/>
<line x1="473" y1="190.5" x2="482" y2="190.5" stroke="#f01c1c" stroke-width="0.8"/>
<line x1="381" y1="340.5" x2="395" y2="340.5" stroke="#f01c1c" stroke-width="0.8"/>
<line x1="457" y1="257.5" x2="462" y2="257.5" stroke="#f01c1c" stroke-width="0.8"/>
<line x1="474" y1="193.5" x2="481" y2="193.5" stroke="#f01c1c" stroke-width="0.8"/>
<line x1="481" y1="359.5" x2="483" y2="359.5" stroke="#f01c1c" stroke-width="0.8"/>
<line x1="361" y1="299.5" x2="377" y2="299.5" stroke="#f01c1c" stroke-width="0.8"/>
<line x1="460" y1="203.5" x2="467" y2="203.5" stroke="#f01c1c" stroke-width="0.8"/>
<line x1="470" y1="226.5" x2="481" y2="226.5" stroke="#f01c1c" stroke-width="0.8"/>
<line x1="382" y1="283" x2="393" y2="283" stroke="#f01c1c" stroke-width="1.3"/>
<line x1="408" y1="195.5" x2="412" y2="195.5" stroke="#f01c1c" stroke-width="0.8"/>
<line x1="381" y1="342.5" x2="385" y2="342.5" stroke="#f01c1c" stroke-width="0.8"/>
<line x1="445" y1="263" x2="458" y2="263" stroke="#f01c1c" stroke-width="1.3"/>
<line x1="426" y1="360.5" x2="437" y2="360.5" stroke="#f01c1c" stroke-width="0.8"/>
<line x1="439" y1="224.5" x2="444" y2="224.5" stroke="#f01c1c" stroke-width="0.8"/>
<line x1="474" y1="318" x2="482" y2="318" stroke="#f01c1c" stroke-width="1.3"/>
<line x1="410" y1="194.5" x2="419" y2="194.5" stroke="#f01c1c" stroke-width="0.8"/>
<line x1="469" y1="217.5" x2="473" y2="217.5" stroke="#f01c1c" stroke-width="0.8"/>
<line x1="403" y1="350.5" x2="411" y2="350.5" stroke="#f01c1c" stroke-width="0.8"/>
<line x1="450" y1="246" x2="463" y2="246" stroke="#f01c1c" stroke-width="1.3"/>
<line x1="422" y1="225" x2="433" y2="225" stroke="#f01c1c" stroke-width="1.3"/>
<line x1="400" y1="270.5" x2="413" y2="270.5" stroke="#f01c1c" stroke-width="0.8"/>
<line x1="423" y1="191.5" x2="433" y2="191.5" stroke="#f01c1c" stroke-width="0.8"/>
<line x1="479" y1="318" x2="483" y2="318" stroke="#f01c1c" stroke-width="1.3"/>
<line x1="471" y1="186.5" x2="482" y2="186.5" stroke="#f01c1c" stroke-width="0.8"/>
<line x1="366" y1="188.5" x2="375" y2="188.5" stroke="#f01c1c" stroke-width="0.8"/>
<line x1="376" y1="330.5" x2="386" y2="330.5" stroke="#f01c1c" stroke-width="0.8"/>
<line x1="428" y1="213" x2="440" y2="213" stroke="#f01c1c" stroke-width="1.3"/>
<line x1="413" y1="338.5" x2="419" y2="338.5" stroke="#f01c1c" stroke-width="0.8"/>
<line x1="476" y1="321" x2="482" y2="321" stroke="#f01c1c" stroke-width="1.3"/>
<line x1="409" y1="182.5" x2="420" y2="182.5" stroke="#f01c1c" stroke-width="0.8"/>
<line x1="409" y1="244" x2="419" y2="244" stroke="#f01c1c" stroke-width="1.3"/>
<line x1="395" y1="332.5" x2="409" y2="332.5" stroke="#f01c1c" stroke-width="0.8"/>
<line x1="399" y1="203.5" x2="404" y2="203.5" stroke="#f01c1c" stroke-width="0.8"/>
<line x1="434" y1="262.5" x2="443" y2="262.5" stroke="#f01c1c" stroke-width="0.8"/>
<line x1="451" y1="244.5" x2="455" y2="244.5" stroke="#f01c1c" stroke-width="0.8"/>
<line x1="399" y1="364.5" x2="408" y2="364.5" stroke="#f01c1c" stroke-width="0.8"/>
<line x1="441" y1="217.5" x2="447" y2="217.5" stroke="#f01c1c" stroke-width="0.8"/>
<line x1="369" y1="249.5" x2="381" y2="249.5" stroke="#f01c1c" stroke-width="0.8"/>
<line x1="462" y1="316" x2="471" y2="316" stroke="#f01c1c" stroke-width="1.3"/>
<line x1="420" y1="281.5" x2="424" y2="281.5" stroke="#f01c1c" stroke-width="0.8"/>
<line x1="480" y1="352.5" x2="483" y2="352.5" stroke="#f01c1c" stroke-width="0.8"/>
<line x1="439" y1="359" x2="448" y2="359" stroke="#f01c1c" stroke-width="1.3"/>
<line x1="482" y1="267.5" x2="484" y2="267.5" stroke="#f01c1c" stroke-width="0.8"/>
<line x1="423" y1="299.5" x2="436" y2="299.5" stroke="#f01c1c" stroke-width="0.8"/>
<line x1="457" y1="357.5" x2="463" y2="357.5" stroke="#f01c1c" stroke-width="0.8"/>
<line x1="482" y1="252.5" x2="484" y2="252.5" stroke="#f01c1c" stroke-width="0.8"/>
<line x1="408" y1="226.5" x2="417" y2="226.5" stroke="#f01c1c" stroke-width="0.8"/>
<line x1="451" y1="355.5" x2="466" y2="355.5" stroke="#f01c1c" stroke-width="0.8"/>
<line x1="467" y1="302.5" x2="476" y2="302.5" stroke="#f01c1c" stroke-width="0.8"/>
<line x1="471" y1="238.5" x2="478" y2="238.5" stroke="#f01c1c" stroke-width="0.8"/>
<line x1="360" y1="243.5" x2="364" y2="243.5" stroke="#f01c1c" stroke-width="0.8"/>
<line x1="476" y1="276.5" x2="482" y2="276.5" stroke="#f01c1c" stroke-width="0.8"/>
<line x1="478" y1="200.5" x2="482" y2="200.5" stroke="#f01c1c" stroke-width="0.8"/>
<line x1="376" y1="275" x2="387" y2="275" stroke="#f01c1c" stroke-width="1.3"/>
<line x1="391" y1="288.5" x2="406" y2="288.5" stroke="#f01c1c" stroke-width="0.8"/>
<line x1="424" y1="331.5" x2="431" y2="331.5" stroke="#f01c1c" stroke-width="0.8"/>
<line x1="440" y1="189.5" x2="454" y2="189.5" stroke="#f01c1c" stroke-width="0.8"/>
<line x1="415" y1="353" x2="429" y2="353" stroke="#f01c1c" stroke-width="1.3"/>
<line x1="375" y1="239" x2="384" y2="239" stroke="#f01c1c" stroke-width="1.3"/>
<line x1="422" y1="183" x2="437" y2="183" stroke="#f01c1c" stroke-width="1.3"/>
<line x1="414" y1="207.5" x2="427" y2="207.5" stroke="#f01c1c" stroke-width="0.8"/>
<line x1="394" y1="330" x2="409" y2="330" stroke="#f01c1c" stroke-width="1.3"/>
<line x1="474" y1="210" x2="481" y2="210" stroke="#f01c1c" stroke-width="1.3"/>
<line x1="397" y1="261.5" x2="400" y2="261.5" stroke="#f01c1c" stroke-width="0.8"/>
<line x1="444" y1="202" x2="456" y2="202" stroke="#f01c1c" stroke-width="1.3"/>
<line x1="397" y1="302.5" x2="411" y2="302.5" stroke="#f01c1c" stroke-width="0.8"/>
<line x1="451" y1="339.5" x2="458" y2="339.5" stroke="#f01c1c" stroke-width="0.8"/>
<line x1="466" y1="201.5" x2="480" y2="201.5" stroke="#f01c1c" stroke-width="0.8"/>
<line x1="470" y1="303.5" x2="480" y2="303.5" stroke="#f01c1c" stroke-width="0.8"/>
<line x1="458" y1="309" x2="465" y2="309" stroke="#f01c1c" stroke-width="1.3"/>
<line x1="432" y1="181.5" x2="440" y2="181.5" stroke="#f01c1c" stroke-width="0.8"/>
<line x1="472" y1="312.5" x2="482" y2="312.5" stroke="#f01c1c" stroke-width="0.8"/>
<line x1="482" y1="232.5" x2="483" y2="232.5" stroke="#f01c1c" stroke-width="0.8"/>
<line x1="399" y1="350" x2="412" y2="350" stroke="#f01c1c" stroke-width="1.3"/>
<line x1="362" y1="261.5" x2="370" y2="261.5" stroke="#f01c1c" stroke-width="0.8"/>
<line x1="365" y1="193.5" x2="369" y2="193.5" stroke="#f01c1c" stroke-width="0.8"/>
<line x1="436" y1="357.5" x2="441" y2="357.5" stroke="#f01c1c" stroke-width="0.8"/>
<line x1="406" y1="353" x2="421" y2="353" stroke="#f01c1c" stroke-width="1.3"/>
<line x1="445" y1="178" x2="453" y2="178" stroke="#f01c1c" stroke-width="1.3"/>
<line x1="369" y1="204" x2="383" y2="204" stroke="#f01c1c" stroke-width="1.3"/>
<line x1="385" y1="354" x2="388" y2="354" stroke="#f01c1c" stroke-width="1.3"/>
<line x1="480" y1="241" x2="483" y2="241" stroke="#f01c1c" stroke-width="1.3"/>
<line x1="394" y1="276.5" x2="399" y2="276.5" stroke="#f01c1c" stroke-width="0.8"/>
<line x1="433" y1="222.5" x2="438" y2="222.5" stroke="#f01c1c" stroke-width="0.8"/>
<line x1="414" y1="237.5" x2="429" y2="237.5" stroke="#f01c1c" stroke-width="0.8"/>
<line x1="454" y1="307.5" x2="462" y2="307.5" stroke="#f01c1c" stroke-width="0.8"/>
<line x1="460" y1="247" x2="476" y2="247" stroke="#f01c1c" stroke-width="1.3"/>
<line x1="441" y1="248" x2="455" y2="248" stroke="#f01c1c" stroke-width="1.3"/>
<line x1="478" y1="290.5" x2="483" y2="290.5" stroke="#f01c1c" stroke-width="0.8"/>
<line x1="411" y1="325" x2="420" y2="325" stroke="#f01c1c" stroke-width="1.3"/>
<line x1="477" y1="291.5" x2="481" y2="291.5" stroke="#f01c1c" stroke-width="0.8"/>
<line x1="443" y1="322" x2="458" y2="322" stroke="#f01c1c" stroke-width="1.3"/>
<line x1="419" y1="291.5" x2="429" y2="291.5" stroke="#f01c1c" stroke-width="0.8"/>
<line x1="442" y1="174.5" x2="457" y2="174.5" stroke="#f01c1c" stroke-width="0.8"/>
<line x1="433" y1="173.5" x2="444" y2="173.5" stroke="#f01c1c" stroke-width="0.8"/>
<line x1="439" y1="331.5" x2="448" y2="331.5" stroke="#f01c1c" stroke-width="0.8"/>
<line x1="403" y1="173.5" x2="407" y2="173.5" stroke="#f01c1c" stroke-width="0.8"/>
<line x1="385" y1="218" x2="390" y2="218" stroke="#f01c1c" stroke-width="1.3"/>
<line x1="468" y1="355.5" x2="476" y2="355.5" stroke="#f01c1c" stroke-width="0.8"/>
<line x1="434" y1="297" x2="441" y2="297" stroke="#f01c1c" stroke-width="1.3"/>
<line x1="405" y1="176.5" x2="412" y2="176.5" stroke="#f01c1c" stroke-width="0.8"/>
<line x1="395" y1="311.5" x2="403" y2="311.5" stroke="#f01c1c" stroke-width="0.8"/>
<line x1="441" y1="284.5" x2="457" y2="284.5" stroke="#f01c1c" stroke-width="0.8"/>
<line x1="442" y1="279.5" x2="454" y2="279.5" stroke="#f01c1c" stroke-width="0.8"/>
<line x1="412" y1="225.5" x2="417" y2="225.5" stroke="#f01c1c" stroke-width="0.8"/>
<line x1="438" y1="212.5" x2="442" y2="212.5" stroke="#f01c1c" stroke-width="0.8"/>
<line x1="461" y1="369.5" x2="476" y2="369.5" stroke="#f01c1c" stroke-width="0.8"/>
<line x1="406" y1="277.5" x2="409" y2="277.5" stroke="#f01c1c" stroke-width="0.8"/>
<line x1="470" y1="289.5" x2="481" y2="289.5" stroke="#f01c1c" stroke-width="0.8"/>
<line x1="475" y1="189" x2="481" y2="189" stroke="#f01c1c" stroke-width="1.3"/>
<line x1="479" y1="291.5" x2="483" y2="291.5" stroke="#f01c1c" stroke-width="0.8"/>
<line x1="450" y1="265.5" x2="459" y2="265.5" stroke="#f01c1c" stroke-width="0.8"/>
<line x1="416" y1="343" x2="431" y2="343" stroke="#f01c1c" stroke-width="1.3"/>
<line x1="439" y1="335.5" x2="444" y2="335.5" stroke="#f01c1c" stroke-width="0.8"/>
<line x1="417" y1="302.5" x2="430" y2="302.5" stroke="#f01c1c" stroke-width="0.8"/>
<line x1="382" y1="262.5" x2="386" y2="262.5" stroke="#f01c1c" stroke-width="0.8"/>
<line x1="418" y1="284.5" x2="429" y2="284.5" stroke="#f01c1c" stroke-width="0.8"/>
<line x1="465" y1="288.5" x2="475" y2="288.5" stroke="#f01c1c" stroke-width="0.8"/>
<line x1="390" y1="183" x2="403" y2="183" stroke="#f01c1c" stroke-width="1.3"/>
<line x1="398" y1="319.5" x2="402" y2="319.5" stroke="#f01c1c" stroke-width="0.8"/>
<line x1="424" y1="301" x2="430" y2="301" stroke="#f01c1c" stroke-width="1.3"/>
<line x1="428" y1="216.5" x2="440" y2="216.5" stroke="#f01c1c" stroke-width="0.8"/>
<line x1="443" y1="335.5" x2="447" y2="335.5" stroke="#f01c1c" stroke-width="0.8"/>
<line x1="401" y1="326.5" x2="406" y2="326.5" stroke="#f01c1c" stroke-width="0.8"/>
<line x1="455" y1="312.5" x2="469" y2="312.5" stroke="#f01c1c" stroke-width="0.8"/>
<line x1="362" y1="302.5" x2="376" y2="302.5" stroke="#f01c1c" stroke-width="0.8"/>
<line x1="414" y1="214.5" x2="425" y2="214.5" stroke="#f01c1c" stroke-width="0.8"/>
<line x1="373" y1="317.5" x2="381" y2="317.5" stroke="#f01c1c" stroke-width="0.8"/>
<line x1="468" y1="279.5" x2="479" y2="279.5" stroke="#f01c1c" stroke-width="0.8"/>
<line x1="398" y1="314" x2="414" y2="314" stroke="#f01c1c" stroke-width="1.3"/>
<line x1="409" y1="368.5" x2="415" y2="368.5" stroke="#f01c1c" stroke-width="0.8"/>
<line x1="389" y1="270.5" x2="396" y2="270.5" stroke="#f01c1c" stroke-width="0.8"/>
<line x1="380" y1="271.5" x2="385" y2="271.5" stroke="#f01c1c" stroke-width="0.8"/>
<line x1="393" y1="362.5" x2="399" y2="362.5" stroke="#f01c1c" stroke-width="0.8"/>
<line x1="369" y1="204.5" x2="378" y2="204.5" stroke="#f01c1c" stroke-width="0.8"/>
<line x1="395" y1="357.5" x2="403" y2="357.5" stroke="#f01c1c" stroke-width="0.8"/>
<line x1="425" y1="326" x2="440" y2="326" stroke="#f01c1c" stroke-width="1.3"/>
<line x1="433" y1="294.5" x2="440" y2="294.5" stroke="#f01c1c" stroke-width="0.8"/>
<line x1="393" y1="245.5" x2="407" y2="245.5" stroke="#f01c1c" stroke-width="0.8"/>
<line x1="401" y1="317" x2="409" y2="317" stroke="#f01c1c" stroke-width="1.3"/>
<line x1="455" y1="215.5" x2="458" y2="215.5" stroke="#f01c1c" stroke-width="0.8"/>
<line x1="416" y1="241.5" x2="429" y2="241.5" stroke="#f01c1c" stroke-width="0.8"/>
<line x1="412" y1="220.5" x2="423" y2="220.5" stroke="#f01c1c" stroke-width="0.8"/>
<line x1="459" y1="213.5" x2="467" y2="213.5" stroke="#f01c1c" stroke-width="0.8"/>
<line x1="476" y1="187.5" x2="483" y2="187.5" stroke="#f01c1c" stroke-width="0.8"/>
<line x1="419" y1="326" x2="435" y2="326" stroke="#f01c1c" stroke-width="1.3"/>
<line x1="406" y1="213.5" x2="414" y2="213.5" stroke="#f01c1c" stroke-width="0.8"/>
<line x1="465" y1="184.5" x2="470" y2="184.5" stroke="#f01c1c" stroke-width="0.8"/>
<line x1="475" y1="210.5" x2="481" y2="210.5" stroke="#f01c1c" stroke-width="0.8"/>
<line x1="379" y1="264" x2="389" y2="264" stroke="#f01c1c" stroke-width="1.3"/>
<line x1="449" y1="274.5" x2="457" y2="274.5" stroke="#f01c1c" stroke-width="0.8"/>
<line x1="479" y1="292.5" x2="483" y2="292.5" stroke="#f01c1c" stroke-width="0.8"/>
<line x1="468" y1="235.5" x2="477" y2="235.5" stroke="#f01c1c" stroke-width="0.8"/>
<line x1="367" y1="260.5" x2="383" y2="260.5" stroke="#f01c1c" stroke-width="0.8"/>
<line x1="428" y1="255.5" x2="436" y2="255.5" stroke="#f01c1c" stroke-width="0.8"/>
<line x1="452" y1="194.5" x2="461" y2="194.5" stroke="#f01c1c" stroke-width="0.8"/>
<line x1="462" y1="286.5" x2="477" y2="286.5" stroke="#f01c1c" stroke-width="0.8"/>
<line x1="389" y1="367.5" x2="392" y2="367.5" stroke="#f01c1c" stroke-width="0.8"/>
<line x1="370" y1="270.5" x2="384" y2="270.5" stroke="#f01c1c" stroke-width="0.8"/>
<line x1="402" y1="355" x2="408" y2="355" stroke="#f01c1c" stroke-width="1.3"/>
<line x1="411" y1="341.5" x2="426" y2="341.5" stroke="#f01c1c" stroke-width="0.8"/>
<line x1="392" y1="317.5" x2="407" y2="317.5" stroke="#f01c1c" stroke-width="0.8"/>
<line x1="427" y1="342" x2="432" y2="342" stroke="#f01c1c" stroke-width="1.3"/>
<line x1="471" y1="329" x2="481" y2="329" stroke="#f01c1c" stroke-width="1.3"/>
<line x1="482" y1="322" x2="484" y2="322" stroke="#f01c1c" stroke-width="1.3"/>
<line x1="440" y1="176.5" x2="444" y2="176.5" stroke="#f01c1c" stroke-width="0.8"/>
<line x1="440" y1="176" x2="453" y2="176" stroke="#f01c1c" stroke-width="1.3"/>
<line x1="477" y1="204.5" x2="482" y2="204.5" stroke="#f01c1c" stroke-width="0.8"/>
<line x1="364" y1="307" x2="376" y2="307" stroke="#f01c1c" stroke-width="1.3"/>
<line x1="410" y1="331.5" x2="414" y2="331.5" stroke="#f01c1c" stroke-width="0.8"/>
<line x1="403" y1="273.5" x2="406" y2="273.5" stroke="#f01c1c" stroke-width="0.8"/>
<line x1="457" y1="229.5" x2="467" y2="229.5" stroke="#f01c1c" stroke-width="0.8"/>
<line x1="405" y1="259" x2="411" y2="259" stroke="#f01c1c" stroke-width="1.3"/>
<line x1="466" y1="297" x2="477" y2="297" stroke="#f01c1c" stroke-width="1.3"/>
<line x1="403" y1="284.5" x2="411" y2="284.5" stroke="#f01c1c" stroke-width="0.8"/>
<line x1="472" y1="197.5" x2="480" y2="197.5" stroke="#f01c1c" stroke-width="0.8"/>
<line x1="379" y1="229.5" x2="395" y2="229.5" stroke="#f01c1c" stroke-width="0.8"/>
<line x1="466" y1="291.5" x2="469" y2="291.5" stroke="#f01c1c" stroke-width="0.8"/>
<line x1="405" y1="304.5" x2="416" y2="304.5" stroke="#f01c1c" stroke-width="0.8"/>
<line x1="421" y1="190.5" x2="431" y2="190.5" stroke="#f01c1c" stroke-width="0.8"/>
<line x1="444" y1="237.5" x2="447" y2="237.5" stroke="#f01c1c" stroke-width="0.8"/>
<line x1="457" y1="203.5" x2="464" y2="203.5" stroke="#f01c1c" stroke-width="0.8"/>
<line x1="455" y1="348.5" x2="458" y2="348.5" stroke="#f01c1c" stroke-width="0.8"/>
<line x1="467" y1="215.5" x2="476" y2="215.5" stroke="#f01c1c" stroke-width="0.8"/>
<line x1="472" y1="268.5" x2="479" y2="268.5" stroke="#f01c1c" stroke-width="0.8"/>
<line x1="438" y1="179.5" x2="446" y2="179.5" stroke="#f01c1c" stroke-width="0.8"/>
<line x1="463" y1="327" x2="466" y2="327" stroke="#f01c1c" stroke-width="1.3"/>
<line x1="384" y1="246.5" x2="389" y2="246.5" stroke="#f01c1c" stroke-width="0.8"/>
<line x1="446" y1="246.5" x2="462" y2="246.5" stroke="#f01c1c" stroke-width="0.8"/>
<line x1="452" y1="264" x2="457" y2="264" stroke="#f01c1c" stroke-width="1.3"/>
<line x1="477" y1="337" x2="482" y2="337" stroke="#f01c1c" stroke-width="1.3"/>
<line x1="457" y1="299" x2="464" y2="299" stroke="#f01c1c" stroke-width="1.3"/>
<line x1="367" y1="287.5" x2="370" y2="287.5" stroke="#f01c1c" stroke-width="0.8"/>
<line x1="460" y1="234.5" x2="468" y2="234.5" stroke="#f01c1c" stroke-width="0.8"/>
<line x1="427" y1="193.5" x2="441" y2="193.5" stroke="#f01c1c" stroke-width="0.8"/>
<line x1="428" y1="337" x2="443" y2="337" stroke="#f01c1c" stroke-width="1.3"/>
<line x1="410" y1="330.5" x2="419" y2="330.5" stroke="#f01c1c" stroke-width="0.8"/>
<line x1="470" y1="227.5" x2="479" y2="227.5" stroke="#f01c1c" stroke-width="0.8"/>
<line x1="378" y1="201.5" x2="390" y2="201.5" stroke="#f01c1c" stroke-width="0.8"/>
<line x1="410" y1="365.5" x2="419" y2="365.5" stroke="#f01c1c" stroke-width="0.8"/>
<line x1="376" y1="299.5" x2="379" y2="299.5" stroke="#f01c1c" stroke-width="0.8"/>
<line x1="448" y1="225.5" x2="458" y2="225.5" stroke="#f01c1c" stroke-width="0.8"/>
<line x1="472" y1="322.5" x2="480" y2="322.5" stroke="#f01c1c" stroke-width="0.8"/>
<line x1="460" y1="329.5" x2="476" y2="329.5" stroke="#f01c1c" stroke-width="0.8"/>
<line x1="439" y1="328.5" x2="449" y2="328.5" stroke="#f01c1c" stroke-width="0.8"/>
<line x1="420" y1="312" x2="432" y2="312" stroke="#f01c1c" stroke-width="1.3"/>
<line x1="397" y1="329.5" x2="403" y2="329.5" stroke="#f01c1c" stroke-width="0.8"/>
<line x1="360" y1="289" x2="364" y2="289" stroke="#f01c1c" stroke-width="1.3"/>
<line x1="418" y1="225" x2="426" y2="225" stroke="#f01c1c" stroke-width="1.3"/>
<line x1="450" y1="259.5" x2="461" y2="259.5" stroke="#f01c1c" stroke-width="0.8"/>
<line x1="374" y1="242.5" x2="379" y2="242.5" stroke="#f01c1c" stroke-width="0.8"/>
<line x1="389" y1="219" x2="395" y2="219" stroke="#f01c1c" stroke-width="1.3"/>
<line x1="426" y1="248.5" x2="431" y2="248.5" stroke="#f01c1c" stroke-width="0.8"/>
<line x1="370" y1="205.5" x2="374" y2="205.5" stroke="#f01c1c" stroke-width="0.8"/>
<line x1="470" y1="254" x2="474" y2="254" stroke="#f01c1c" stroke-width="1.3"/>
<line x1="466" y1="329" x2="469" y2="329" stroke="#f01c1c" stroke-width="1.3"/>
<line x1="468" y1="368.5" x2="474" y2="368.5" stroke="#f01c1c" stroke-width="0.8"/>
<line x1="367" y1="277.5" x2="381" y2="277.5" stroke="#f01c1c" stroke-width="0.8"/>
<line x1="442" y1="221.5" x2="449" y2="221.5" stroke="#f01c1c" stroke-width="0.8"/>
<line x1="474" y1="281" x2="479" y2="281" stroke="#f01c1c" stroke-width="1.3"/>
<line x1="457" y1="328" x2="470" y2="328" stroke="#f01c1c" stroke-width="1.3"/>
<line x1="434" y1="311.5" x2="445" y2="311.5" stroke="#f01c1c" stroke-width="0.8"/>
<line x1="370" y1="309.5" x2="374" y2="309.5" stroke="#f01c1c" stroke-width="0.8"/>
<line x1="365" y1="294" x2="377" y2="294" stroke="#f01c1c" stroke-width="1.3"/>
<line x1="450" y1="347" x2="464" y2="347" stroke="#f01c1c" stroke-width="1.3"/>
<line x1="436" y1="194.5" x2="439" y2="194.5" stroke="#f01c1c" stroke-width="0.8"/>
<line x1="372" y1="245.5" x2="385" y2="245.5" stroke="#f01c1c" stroke-width="0.8"/>
<line x1="386" y1="340.5" x2="398" y2="340.5" stroke="#f01c1c" stroke-width="0.8"/>
<line x1="446" y1="278.5" x2="461" y2="278.5" stroke="#f01c1c" stroke-width="0.8"/>
<line x1="460" y1="183.5" x2="465" y2="183.5" stroke="#f01c1c" stroke-width="0.8"/>
<line x1="469" y1="343" x2="473" y2="343" stroke="#f01c1c" stroke-width="1.3"/>
<line x1="396" y1="329" x2="404" y2="329" stroke="#f01c1c" stroke-width="1.3"/>
<line x1="447" y1="268.5" x2="462" y2="268.5" stroke="#f01c1c" stroke-width="0.8"/>
<line x1="362" y1="295.5" x2="375" y2="295.5" stroke="#f01c1c" stroke-width="0.8"/>
<line x1="413" y1="221.5" x2="421" y2="221.5" stroke="#f01c1c" stroke-width="0.8"/>
<line x1="474" y1="251.5" x2="479" y2="251.5" stroke="#f01c1c" stroke-width="0.8"/>
<line x1="406" y1="298.5" x2="416" y2="298.5" stroke="#f01c1c" stroke-width="0.8"/>
<line x1="445" y1="182" x2="454" y2="182" stroke="#f01c1c" stroke-width="1.3"/>
<line x1="387" y1="196" x2="397" y2="196" stroke="#f01c1c" stroke-width="1.3"/>
<line x1="443" y1="357.5" x2="453" y2="357.5" stroke="#f01c1c" stroke-width="0.8"/>
<line x1="400" y1="209.5" x2="405" y2="209.5" stroke="#f01c1c" stroke-width="0.8"/>
<line x1="467" y1="221.5" x2="479" y2="221.5" stroke="#f01c1c" stroke-width="0.8"/>
<line x1="417" y1="320.5" x2="429" y2="320.5" stroke="#f01c1c" stroke-width="0.8"/>
<line x1="481" y1="238.5" x2="483" y2="238.5" stroke="#f01c1c" stroke-width="0.8"/>
<line x1="448" y1="340" x2="455" y2="340" stroke="#f01c1c" stroke-width="1.3"/>
<line x1="401" y1="330.5" x2="408" y2="330.5" stroke="#f01c1c" stroke-width="0.8"/>
<line x1="388" y1="333" x2="396" y2="333" stroke="#f01c1c" stroke-width="1.3"/>
<line x1="402" y1="205.5" x2="409" y2="205.5" stroke="#f01c1c" stroke-width="0.8"/>
<line x1="445" y1="345.5" x2="460" y2="345.5" stroke="#f01c1c" stroke-width="0.8"/>
<line x1="482" y1="259" x2="483" y2="259" stroke="#f01c1c" stroke-width="1.3"/>
<line x1="391" y1="209.5" x2="397" y2="209.5" stroke="#f01c1c" stroke-width="0.8"/>
<line x1="408" y1="332.5" x2="415" y2="332.5" stroke="#f01c1c" stroke-width="0.8"/>
<line x1="468" y1="276.5" x2="472" y2="276.5" stroke="#f01c1c" stroke-width="0.8"/>
<line x1="441" y1="309" x2="449" y2="309" stroke="#f01c1c" stroke-width="1.3"/>
<line x1="398" y1="193" x2="406" y2="193" stroke="#f01c1c" stroke-width="1.3"/>
<line x1="431" y1="275.5" x2="443" y2="275.5" stroke="#f01c1c" stroke-width="0.8"/>
<line x1="402" y1="194.5" x2="413" y2="194.5" stroke="#f01c1c" stroke-width="0.8"/>
<line x1="425" y1="351.5" x2="429" y2="351.5" stroke="#f01c1c" stroke-width="0.8"/>
<line x1="435" y1="335.5" x2="445" y2="335.5" stroke="#f01c1c" stroke-width="0.8"/>
<line x1="455" y1="215" x2="458" y2="215" stroke="#f01c1c" stroke-width="1.3"/>
<line x1="368" y1="195.5" x2="372" y2="195.5" stroke="#f01c1c" stroke-width="0.8"/>
<line x1="411" y1="316.5" x2="418" y2="316.5" stroke="#f01c1c" stroke-width="0.8"/>
<line x1="476" y1="350" x2="480" y2="350" stroke="#f01c1c" stroke-width="1.3"/>
<line x1="446" y1="173.5" x2="457" y2="173.5" stroke="#f01c1c" stroke-width="0.8"/>
<line x1="368" y1="247" x2="382" y2="247" stroke="#f01c1c" stroke-width="1.3"/>
<line x1="420" y1="361.5" x2="429" y2="361.5" stroke="#f01c1c" stroke-width="0.8"/>
<line x1="408" y1="213.5" x2="418" y2="213.5" stroke="#f01c1c" stroke-width="0.8"/>
<line x1="395" y1="280.5" x2="407" y2="280.5" stroke="#f01c1c" stroke-width="0.8"/>
<line x1="426" y1="366.5" x2="440" y2="366.5" stroke="#f01c1c" stroke-width="0.8"/>
<line x1="423" y1="225.5" x2="437" y2="225.5" stroke="#f01c1c" stroke-width="0.8"/>
<line x1="388" y1="206.5" x2="393" y2="206.5" stroke="#f01c1c" stroke-width="0.8"/>
<line x1="467" y1="223" x2="474" y2="223" stroke="#f01c1c" stroke-width="1.3"/>
<line x1="403" y1="188" x2="406" y2="188" stroke="#f01c1c" stroke-width="1.3"/>
<line x1="401" y1="199.5" x2="416" y2="199.5" stroke="#f01c1c" stroke-width="0.8"/>
<line x1="413" y1="196.5" x2="419" y2="196.5" stroke="#f01c1c" stroke-width="0.8"/>
<line x1="478" y1="299" x2="482" y2="299" stroke="#f01c1c" stroke-width="1.3"/>
<line x1="423" y1="219.5" x2="437" y2="219.5" stroke="#f01c1c" stroke-width="0.8"/>
<line x1="455" y1="294.5" x2="468" y2="294.5" stroke="#f01c1c" stroke-width="0.8"/>
<line x1="403" y1="239.5" x2="417" y2="239.5" stroke="#f01c1c" stroke-width="0.8"/>
<line x1="407" y1="294.5" x2="417" y2="294.5" stroke="#f01c1c" stroke-width="0.8"/>
<line x1="416" y1="237.5" x2="423" y2="237.5" stroke="#f01c1c" stroke-width="0.8"/>
<line x1="403" y1="368" x2="407" y2="368" stroke="#f01c1c" stroke-width="1.3"/>
<line x1="382" y1="253.5" x2="392" y2="253.5" stroke="#f01c1c" stroke-width="0.8"/>
<line x1="450" y1="344.5" x2="458" y2="344.5" stroke="#f01c1c" stroke-width="0.8"/>
<line x1="408" y1="182.5" x2="419" y2="182.5" stroke="#f01c1c" stroke-width="0.8"/>
<line x1="404" y1="322" x2="411" y2="322" stroke="#f01c1c" stroke-width="1.3"/>
<line x1="389" y1="190.5" x2="396" y2="190.5" stroke="#f01c1c" stroke-width="0.8"/>
<line x1="460" y1="347" x2="470" y2="347" stroke="#f01c1c" stroke-width="1.3"/>
<line x1="460" y1="367.5" x2="473" y2="367.5" stroke="#f01c1c" stroke-width="0.8"/>
<line x1="374" y1="326.5" x2="384" y2="326.5" stroke="#f01c1c" stroke-width="0.8"/>
<line x1="374" y1="316.5" x2="385" y2="316.5" stroke="#f01c1c" stroke-width="0.8"/>
<line x1="432" y1="189.5" x2="447" y2="189.5" stroke="#f01c1c" stroke-width="0.8"/>
<line x1="406" y1="202.5" x2="415" y2="202.5" stroke="#f01c1c" stroke-width="0.8"/>
<line x1="435" y1="247.5" x2="444" y2="247.5" stroke="#f01c1c" stroke-width="0.8"/>
<line x1="424" y1="363" x2="429" y2="363" stroke="#f01c1c" stroke-width="1.3"/>
<line x1="413" y1="322.5" x2="416" y2="322.5" stroke="#f01c1c" stroke-width="0.8"/>
<line x1="438" y1="334.5" x2="445" y2="334.5" stroke="#f01c1c" stroke-width="0.8"/>
<line x1="394" y1="190.5" x2="407" y2="190.5" stroke="#f01c1c" stroke-width="0.8"/>
<line x1="389" y1="220.5" x2="403" y2="220.5" stroke="#f01c1c" stroke-width="0.8"/>
<line x1="433" y1="235.5" x2="437" y2="235.5" stroke="#f01c1c" stroke-width="0.8"/>
<line x1="374" y1="226.5" x2="380" y2="226.5" stroke="#f01c1c" stroke-width="0.8"/>
<line x1="398" y1="235.5" x2="403" y2="235.5" stroke="#f01c1c" stroke-width="0.8"/>
<line x1="381" y1="262.5" x2="385" y2="262.5" stroke="#f01c1c" stroke-width="0.8"/>
<line x1="399" y1="225" x2="411" y2="225" stroke="#f01c1c" stroke-width="1.3"/>
<line x1="390" y1="301.5" x2="393" y2="301.5" stroke="#f01c1c" stroke-width="0.8"/>
<line x1="387" y1="338.5" x2="392" y2="338.5" stroke="#f01c1c" stroke-width="0.8"/>
<line x1="461" y1="262.5" x2="475" y2="262.5" stroke="#f01c1c" stroke-width="0.8"/>
<line x1="450" y1="344.5" x2="458" y2="344.5" stroke="#f01c1c" stroke-width="0.8"/>
<line x1="448" y1="352" x2="455" y2="352" stroke="#f01c1c" stroke-width="1.3"/>
<line x1="449" y1="191.5" x2="456" y2="191.5" stroke="#f01c1c" stroke-width="0.8"/>
<line x1="435" y1="344" x2="446" y2="344" stroke="#f01c1c" stroke-width="1.3"/>
<line x1="417" y1="315.5" x2="425" y2="315.5" stroke="#f01c1c" stroke-width="0.8"/>
<line x1="424" y1="276.5" x2="428" y2="276.5" stroke="#f01c1c" stroke-width="0.8"/>
<line x1="378" y1="348.5" x2="381" y2="348.5" stroke="#f01c1c" stroke-width="0.8"/>
<line x1="375" y1="250" x2="383" y2="250" stroke="#f01c1c" stroke-width="1.3"/>
<line x1="465" y1="267" x2="475" y2="267" stroke="#f01c1c" stroke-width="1.3"/>
<line x1="407" y1="270.5" x2="411" y2="270.5" stroke="#f01c1c" stroke-width="0.8"/>
<line x1="459" y1="202.5" x2="474" y2="202.5" stroke="#f01c1c" stroke-width="0.8"/>
<line x1="403" y1="237.5" x2="408" y2="237.5" stroke="#f01c1c" stroke-width="0.8"/>
<line x1="443" y1="229" x2="448" y2="229" stroke="#f01c1c" stroke-width="1.3"/>
<line x1="397" y1="362" x2="411" y2="362" stroke="#f01c1c" stroke-width="1.3"/>
<line x1="378" y1="253.5" x2="394" y2="253.5" stroke="#f01c1c" stroke-width="0.8"/>
<line x1="421" y1="337.5" x2="436" y2="337.5" stroke="#f01c1c" stroke-width="0.8"/>
<line x1="382" y1="301" x2="392" y2="301" stroke="#f01c1c" stroke-width="1.3"/>
<line x1="449" y1="280.5" x2="454" y2="280.5" stroke="#f01c1c" stroke-width="0.8"/>
<line x1="445" y1="179.5" x2="452" y2="179.5" stroke="#f01c1c" stroke-width="0.8"/>
<line x1="476" y1="190.5" x2="483" y2="190.5" stroke="#f01c1c" stroke-width="0.8"/>
<line x1="448" y1="176.5" x2="456" y2="176.5" stroke="#f01c1c" stroke-width="0.8"/>
<line x1="359" y1="252.5" x2="367" y2="252.5" stroke="#f01c1c" stroke-width="0.8"/>
<line x1="460" y1="193" x2="470" y2="193" stroke="#f01c1c" stroke-width="1.3"/>
<line x1="462" y1="256.5" x2="470" y2="256.5" stroke="#f01c1c" stroke-width="0.8"/>
<line x1="451" y1="239" x2="455" y2="239" stroke="#f01c1c" stroke-width="1.3"/>
<line x1="463" y1="277" x2="468" y2="277" stroke="#f01c1c" stroke-width="1.3"/>
<line x1="460" y1="353" x2="476" y2="353" stroke="#f01c1c" stroke-width="1.3"/>
<line x1="474" y1="258.5" x2="481" y2="258.5" stroke="#f01c1c" stroke-width="0.8"/>
<line x1="359" y1="311.5" x2="372" y2="311.5" stroke="#f01c1c" stroke-width="0.8"/>
<line x1="478" y1="280.5" x2="482" y2="280.5" stroke="#f01c1c" stroke-width="0.8"/>
<line x1="471" y1="316" x2="481" y2="316" stroke="#f01c1c" stroke-width="1.3"/>
<line x1="410" y1="298.5" x2="416" y2="298.5" stroke="#f01c1c" stroke-width="0.8"/>
<line x1="441" y1="173.5" x2="444" y2="173.5" stroke="#f01c1c" stroke-width="0.8"/>
<line x1="449" y1="277.5" x2="454" y2="277.5" stroke="#f01c1c" stroke-width="0.8"/>
<line x1="429" y1="342.5" x2="438" y2="342.5" stroke="#f01c1c" stroke-width="0.8"/>
<line x1="422" y1="272" x2="429" y2="272" stroke="#f01c1c" stroke-width="1.3"/>
<line x1="450" y1="355" x2="456" y2="355" stroke="#f01c1c" stroke-width="1.3"/>
<line x1="451" y1="279.5" x2="464" y2="279.5" stroke="#f01c1c" stroke-width="0.8"/>
<line x1="384" y1="229.5" x2="389" y2="229.5" stroke="#f01c1c" stroke-width="0.8"/>
<line x1="364" y1="272.5" x2="367" y2="272.5" stroke="#f01c1c" stroke-width="0.8"/>
<line x1="472" y1="224.5" x2="478" y2="224.5" stroke="#f01c1c" stroke-width="0.8"/>
<line x1="419" y1="196.5" x2="430" y2="196.5" stroke="#f01c1c" stroke-width="0.8"/>
<line x1="408" y1="320.5" x2="420" y2="320.5" stroke="#f01c1c" stroke-width="0.8"/>
<line x1="430" y1="305.5" x2="446" y2="305.5" stroke="#f01c1c" stroke-width="0.8"/>
<line x1="482" y1="363.5" x2="484" y2="363.5" stroke="#f01c1c" stroke-width="0.8"/>
<line x1="426" y1="359.5" x2="436" y2="359.5" stroke="#f01c1c" stroke-width="0.8"/>
<line x1="473" y1="346.5" x2="483" y2="346.5" stroke="#f01c1c" stroke-width="0.8"/>
<line x1="395" y1="325.5" x2="405" y2="325.5" stroke="#f01c1c" stroke-width="0.8"/>
<line x1="380" y1="185.5" x2="388" y2="185.5" stroke="#f01c1c" stroke-width="0.8"/>
<line x1="438" y1="276" x2="449" y2="276" stroke="#f01c1c" stroke-width="1.3"/>
<line x1="411" y1="226.5" x2="414" y2="226.5" stroke="#f01c1c" stroke-width="0.8"/>
<line x1="389" y1="313.5" x2="395" y2="313.5" stroke="#f01c1c" stroke-width="0.8"/>
<line x1="455" y1="358.5" x2="460" y2="358.5" stroke="#f01c1c" stroke-width="0.8"/>
<line x1="456" y1="226.5" x2="463" y2="226.5" stroke="#f01c1c" stroke-width="0.8"/>
<line x1="464" y1="295.5" x2="478" y2="295.5" stroke="#f01c1c" stroke-width="0.8"/>
<line x1="397" y1="229" x2="407" y2="229" stroke="#f01c1c" stroke-width="1.3"/>
<line x1="384" y1="363.5" x2="397" y2="363.5" stroke="#f01c1c" stroke-width="0.8"/>
<line x1="399" y1="331.5" x2="402" y2="331.5" stroke="#f01c1c" stroke-width="0.8"/>
<line x1="416" y1="242.5" x2="432" y2="242.5" stroke="#f01c1c" stroke-width="0.8"/>
<line x1="366" y1="258.5" x2="371" y2="258.5" stroke="#f01c1c" stroke-width="0.8"/>
<line x1="481" y1="339" x2="483" y2="339" stroke="#f01c1c" stroke-width="1.3"/>
<line x1="459" y1="243.5" x2="467" y2="243.5" stroke="#f01c1c" stroke-width="0.8"/>
<line x1="437" y1="328.5" x2="446" y2="328.5" stroke="#f01c1c" stroke-width="0.8"/>
<line x1="441" y1="290.5" x2="453" y2="290.5" stroke="#f01c1c" stroke-width="0.8"/>
<line x1="480" y1="286.5" x2="483" y2="286.5" stroke="#f01c1c" stroke-width="0.8"/>
<line x1="467" y1="308.5" x2="476" y2="308.5" stroke="#f01c1c" stroke-width="0.8"/>
<line x1="399" y1="211.5" x2="409" y2="211.5" stroke="#f01c1c" stroke-width="0.8"/>
<line x1="397" y1="236.5" x2="410" y2="236.5" stroke="#f01c1c" stroke-width="0.8"/>
<line x1="421" y1="203" x2="424" y2="203" stroke="#f01c1c" stroke-width="1.3"/>
<line x1="433" y1="289.5" x2="445" y2="289.5" stroke="#f01c1c" stroke-width="0.8"/>
<line x1="409" y1="210.5" x2="417" y2="210.5" stroke="#f01c1c" stroke-width="0.8"/>
<line x1="463" y1="344.5" x2="466" y2="344.5" stroke="#f01c1c" stroke-width="0.8"/>
<line x1="424" y1="330.5" x2="436" y2="330.5" stroke="#f01c1c" stroke-width="0.8"/>
<line x1="482" y1="231.5" x2="484" y2="231.5" stroke="#f01c1c" stroke-width="0.8"/>
<line x1="437" y1="173.5" x2="451" y2="173.5" stroke="#f01c1c" stroke-width="0.8"/>
<line x1="369" y1="253.5" x2="377" y2="253.5" stroke="#f01c1c" stroke-width="0.8"/>
<line x1="439" y1="173.5" x2="451" y2="173.5" stroke="#f01c1c" stroke-width="0.8"/>
<line x1="436" y1="177.5" x2="442" y2="177.5" stroke="#f01c1c" stroke-width="0.8"/>
<line x1="446" y1="295.5" x2="458" y2="295.5" stroke="#f01c1c" stroke-width="0.8"/>
<line x1="434" y1="318.5" x2="442" y2="318.5" stroke="#f01c1c" stroke-width="0.8"/>
<line x1="463" y1="290.5" x2="476" y2="290.5" stroke="#f01c1c" stroke-width="0.8"/>
<line x1="443" y1="189.5" x2="456" y2="189.5" stroke="#f01c1c" stroke-width="0.8"/>
<line x1="431" y1="232.5" x2="437" y2="232.5" stroke="#f01c1c" stroke-width="0.8"/>
<line x1="369" y1="303.5" x2="383" y2="303.5" stroke="#f01c1c" stroke-width="0.8"/>
<line x1="426" y1="304.5" x2="441" y2="304.5" stroke="#f01c1c" stroke-width="0.8"/>
<line x1="364" y1="242.5" x2="378" y2="242.5" stroke="#f01c1c" stroke-width="0.8"/>
<line x1="482" y1="282" x2="484" y2="282" stroke="#f01c1c" stroke-width="1.3"/>
<line x1="404" y1="301.5" x2="412" y2="301.5" stroke="#f01c1c" stroke-width="0.8"/>
<line x1="390" y1="351.5" x2="396" y2="351.5" stroke="#f01c1c" stroke-width="0.8"/>
<line x1="400" y1="336.5" x2="406" y2="336.5" stroke="#f01c1c" stroke-width="0.8"/>
<line x1="421" y1="316.5" x2="428" y2="316.5" stroke="#f01c1c" stroke-width="0.8"/>
<line x1="392" y1="337.5" x2="398" y2="337.5" stroke="#f01c1c" stroke-width="0.8"/>
<line x1="416" y1="352.5" x2="427" y2="352.5" stroke="#f01c1c" stroke-width="0.8"/>
<line x1="462" y1="289.5" x2="473" y2="289.5" stroke="#f01c1c" stroke-width="0.8"/>
<line x1="375" y1="330.5" x2="380" y2="330.5" stroke="#f01c1c" stroke-width="0.8"/>
<line x1="448" y1="223" x2="459" y2="223" stroke="#f01c1c" stroke-width="1.3"/>
<line x1="421" y1="326.5" x2="434" y2="326.5" stroke="#f01c1c" stroke-width="0.8"/>
<line x1="418" y1="227.5" x2="425" y2="227.5" stroke="#f01c1c" stroke-width="0.8"/>
<line x1="359" y1="283" x2="373" y2="283" stroke="#f01c1c" stroke-width="1.3"/>
<line x1="392" y1="184.5" x2="405" y2="184.5" stroke="#f01c1c" stroke-width="0.8"/>
<line x1="460" y1="178" x2="469" y2="178" stroke="#f01c1c" stroke-width="1.3"/>
<line x1="451" y1="322.5" x2="465" y2="322.5" stroke="#f01c1c" stroke-width="0.8"/>
<line x1="456" y1="187.5" x2="472" y2="187.5" stroke="#f01c1c" stroke-width="0.8"/>
<line x1="414" y1="322.5" x2="422" y2="322.5" stroke="#f01c1c" stroke-width="0.8"/>
<line x1="480" y1="283.5" x2="483" y2="283.5" stroke="#f01c1c" stroke-width="0.8"/>
<line x1="412" y1="354.5" x2="421" y2="354.5" stroke="#f01c1c" stroke-width="0.8"/>
<line x1="471" y1="209.5" x2="481" y2="209.5" stroke="#f01c1c" stroke-width="0.8"/>
<line x1="476" y1="213.5" x2="481" y2="213.5" stroke="#f01c1c" stroke-width="0.8"/>
<line x1="395" y1="354.5" x2="401" y2="354.5" stroke="#f01c1c" stroke-width="0.8"/>
<line x1="451" y1="264" x2="460" y2="264" stroke="#f01c1c" stroke-width="1.3"/>
<line x1="403" y1="207.5" x2="411" y2="207.5" stroke="#f01c1c" stroke-width="0.8"/>
<line x1="376" y1="194.5" x2="388" y2="194.5" stroke="#f01c1c" stroke-width="0.8"/>
<line x1="427" y1="263.5" x2="443" y2="263.5" stroke="#f01c1c" stroke-width="0.8"/>
<line x1="404" y1="327.5" x2="416" y2="327.5" stroke="#f01c1c" stroke-width="0.8"/>
<line x1="414" y1="240" x2="426" y2="240" stroke="#f01c1c" stroke-width="1.3"/>
<line x1="392" y1="339.5" x2="406" y2="339.5" stroke="#f01c1c" stroke-width="0.8"/>
<line x1="441" y1="322.5" x2="449" y2="322.5" stroke="#f01c1c" stroke-width="0.8"/>
<line x1="366" y1="288.5" x2="377" y2="288.5" stroke="#f01c1c" stroke-width="0.8"/>
<line x1="422" y1="240.5" x2="430" y2="240.5" stroke="#f01c1c" stroke-width="0.8"/>
<line x1="400" y1="348.5" x2="414" y2="348.5" stroke="#f01c1c" stroke-width="0.8"/>
<line x1="403" y1="287.5" x2="410" y2="287.5" stroke="#f01c1c" stroke-width="0.8"/>
<line x1="364" y1="254" x2="371" y2="254" stroke="#f01c1c" stroke-width="1.3"/>
<line x1="413" y1="364.5" x2="426" y2="364.5" stroke="#f01c1c" stroke-width="0.8"/>
<line x1="421" y1="351.5" x2="425" y2="351.5" stroke="#f01c1c" stroke-width="0.8"/>
<line x1="378" y1="324.5" x2="383" y2="324.5" stroke="#f01c1c" stroke-width="0.8"/>
<line x1="443" y1="326.5" x2="449" y2="326.5" stroke="#f01c1c" stroke-width="0.8"/>
<line x1="406" y1="292.5" x2="417" y2="292.5" stroke="#f01c1c" stroke-width="0.8"/>
<line x1="379" y1="345" x2="382" y2="345" stroke="#f01c1c" stroke-width="1.3"/>
<line x1="470" y1="233.5" x2="483" y2="233.5" stroke="#f01c1c" stroke-width="0.8"/>
<line x1="445" y1="208.5" x2="455" y2="208.5" stroke="#f01c1c" stroke-width="0.8"/>
<line x1="469" y1="336.5" x2="480" y2="336.5" stroke="#f01c1c" stroke-width="0.8"/>
<line x1="406" y1="240" x2="417" y2="240" stroke="#f01c1c" stroke-width="1.3"/>
<line x1="440" y1="222.5" x2="456" y2="222.5" stroke="#f01c1c" stroke-width="0.8"/>
<line x1="445" y1="184.5" x2="451" y2="184.5" stroke="#f01c1c" stroke-width="0.8"/>
<line x1="468" y1="209.5" x2="477" y2="209.5" stroke="#f01c1c" stroke-width="0.8"/>
<line x1="455" y1="191.5" x2="469" y2="191.5" stroke="#f01c1c" stroke-width="0.8"/>
<line x1="396" y1="354.5" x2="407" y2="354.5" stroke="#f01c1c" stroke-width="0.8"/>
<line x1="461" y1="227.5" x2="466" y2="227.5" stroke="#f01c1c" stroke-width="0.8"/>
<line x1="396" y1="309" x2="404" y2="309" stroke="#f01c1c" stroke-width="1.3"/>
<line x1="412" y1="268.5" x2="418" y2="268.5" stroke="#f01c1c" stroke-width="0.8"/>
<line x1="461" y1="199.5" x2="472" y2="199.5" stroke="#f01c1c" stroke-width="0.8"/>
<line x1="401" y1="276.5" x2="417" y2="276.5" stroke="#f01c1c" stroke-width="0.8"/>
<line x1="368" y1="285.5" x2="377" y2="285.5" stroke="#f01c1c" stroke-width="0.8"/>
<line x1="402" y1="177" x2="407" y2="177" stroke="#f01c1c" stroke-width="1.3"/>
<line x1="390" y1="202.5" x2="401" y2="202.5" stroke="#f01c1c" stroke-width="0.8"/>
<line x1="391" y1="327" x2="396" y2="327" stroke="#f01c1c" stroke-width="1.3"/>
<line x1="373" y1="285.5" x2="389" y2="285.5" stroke="#f01c1c" stroke-width="0.8"/>
<line x1="396" y1="215" x2="407" y2="215" stroke="#f01c1c" stroke-width="1.3"/>
<line x1="470" y1="245.5" x2="481" y2="245.5" stroke="#f01c1c" stroke-width="0.8"/>
<line x1="425" y1="222" x2="429" y2="222" stroke="#f01c1c" stroke-width="1.3"/>
<line x1="390" y1="240.5" x2="401" y2="240.5" stroke="#f01c1c" stroke-width="0.8"/>
<line x1="462" y1="299.5" x2="476" y2="299.5" stroke="#f01c1c" stroke-width="0.8"/>
<line x1="412" y1="194.5" x2="422" y2="194.5" stroke="#f01c1c" stroke-width="0.8"/>
<line x1="396" y1="233.5" x2="410" y2="233.5" stroke="#f01c1c" stroke-width="0.8"/>
<line x1="396" y1="328.5" x2="411" y2="328.5" stroke="#f01c1c" stroke-width="0.8"/>
<line x1="411" y1="218.5" x2="426" y2="218.5" stroke="#f01c1c" stroke-width="0.8"/>
<line x1="462" y1="339.5" x2="478" y2="339.5" stroke="#f01c1c" stroke-width="0.8"/>
<line x1="376" y1="338.5" x2="382" y2="338.5" stroke="#f01c1c" stroke-width="0.8"/>
<line x1="446" y1="175.5" x2="461" y2="175.5" stroke="#f01c1c" stroke-width="0.8"/>
<line x1="427" y1="324.5" x2="440" y2="324.5" stroke="#f01c1c" stroke-width="0.8"/>
<line x1="404" y1="367" x2="412" y2="367" stroke="#f01c1c" stroke-width="1.3"/>
<line x1="471" y1="334.5" x2="483" y2="334.5" stroke="#f01c1c" stroke-width="0.8"/>
<line x1="405" y1="287" x2="419" y2="287" stroke="#f01c1c" stroke-width="1.3"/>
<line x1="406" y1="176.5" x2="416" y2="176.5" stroke="#f01c1c" stroke-width="0.8"/>
<line x1="474" y1="221.5" x2="481" y2="221.5" stroke="#f01c1c" stroke-width="0.8"/>
<line x1="417" y1="330.5" x2="429" y2="330.5" stroke="#f01c1c" stroke-width="0.8"/>
<line x1="379" y1="260.5" x2="385" y2="260.5" stroke="#f01c1c" stroke-width="0.8"/>
<line x1="403" y1="313.5" x2="418" y2="313.5" stroke="#f01c1c" stroke-width="0.8"/>
<line x1="375" y1="277" x2="381" y2="277" stroke="#f01c1c" stroke-width="1.3"/>
<line x1="368" y1="310.5" x2="372" y2="310.5" stroke="#f01c1c" stroke-width="0.8"/>
<line x1="405" y1="347.5" x2="413" y2="347.5" stroke="#f01c1c" stroke-width="0.8"/>
<line x1="391" y1="188" x2="401" y2="188" stroke="#f01c1c" stroke-width="1.3"/>
<line x1="388" y1="280" x2="396" y2="280" stroke="#f01c1c" stroke-width="1.3"/>
<line x1="392" y1="274.5" x2="397" y2="274.5" stroke="#f01c1c" stroke-width="0.8"/>
<line x1="423" y1="255.5" x2="426" y2="255.5" stroke="#f01c1c" stroke-width="0.8"/>
<line x1="463" y1="201" x2="471" y2="201" stroke="#f01c1c" stroke-width="1.3"/>
<line x1="382" y1="249.5" x2="386" y2="249.5" stroke="#f01c1c" stroke-width="0.8"/>
<line x1="482" y1="274.5" x2="484" y2="274.5" stroke="#f01c1c" stroke-width="0.8"/>
<line x1="427" y1="240.5" x2="431" y2="240.5" stroke="#f01c1c" stroke-width="0.8"/>
<line x1="481" y1="202.5" x2="483" y2="202.5" stroke="#f01c1c" stroke-width="0.8"/>
<line x1="376" y1="344.5" x2="391" y2="344.5" stroke="#f01c1c" stroke-width="0.8"/>
<line x1="462" y1="179.5" x2="468" y2="179.5" stroke="#f01c1c" stroke-width="0.8"/>
<line x1="398" y1="237" x2="402" y2="237" stroke="#f01c1c" stroke-width="1.3"/>
<line x1="446" y1="260.5" x2="450" y2="260.5" stroke="#f01c1c" stroke-width="0.8"/>
<line x1="373" y1="324.5" x2="378" y2="324.5" stroke="#f01c1c" stroke-width="0.8"/>
<line x1="426" y1="272.5" x2="434" y2="272.5" stroke="#f01c1c" stroke-width="0.8"/>
<line x1="439" y1="175.5" x2="442" y2="175.5" stroke="#f01c1c" stroke-width="0.8"/>
<line x1="457" y1="366.5" x2="470" y2="366.5" stroke="#f01c1c" stroke-width="0.8"/>
<line x1="468" y1="264.5" x2="481" y2="264.5" stroke="#f01c1c" stroke-width="0.8"/>
<line x1="457" y1="196.5" x2="472" y2="196.5" stroke="#f01c1c" stroke-width="0.8"/>
<line x1="464" y1="343.5" x2="467" y2="343.5" stroke="#f01c1c" stroke-width="0.8"/>
<line x1="437" y1="255.5" x2="442" y2="255.5" stroke="#f01c1c" stroke-width="0.8"/>
<line x1="441" y1="355" x2="450" y2="355" stroke="#f01c1c" stroke-width="1.3"/>
<line x1="448" y1="245.5" x2="456" y2="245.5" stroke="#f01c1c" stroke-width="0.8"/>
<line x1="439" y1="345.5" x2="448" y2="345.5" stroke="#f01c1c" stroke-width="0.8"/>
<line x1="366" y1="207.5" x2="376" y2="207.5" stroke="#f01c1c" stroke-width="0.8"/>
<line x1="480" y1="278" x2="483" y2="278" stroke="#f01c1c" stroke-width="1.3"/>
<line x1="474" y1="196.5" x2="481" y2="196.5" stroke="#f01c1c" stroke-width="0.8"/>
<line x1="390" y1="176.5" x2="394" y2="176.5" stroke="#f01c1c" stroke-width="0.8"/>
<line x1="425" y1="265.5" x2="439" y2="265.5" stroke="#f01c1c" stroke-width="0.8"/>
<line x1="445" y1="228.5" x2="456" y2="228.5" stroke="#f01c1c" stroke-width="0.8"/>
<line x1="408" y1="301.5" x2="414" y2="301.5" stroke="#f01c1c" stroke-width="0.8"/>
<line x1="455" y1="292.5" x2="471" y2="292.5" stroke="#f01c1c" stroke-width="0.8"/>
<line x1="412" y1="354" x2="426" y2="354" stroke="#f01c1c" stroke-width="1.3"/>
<line x1="480" y1="283.5" x2="483" y2="283.5" stroke="#f01c1c" stroke-width="0.8"/>
<line x1="430" y1="356.5" x2="434" y2="356.5" stroke="#f01c1c" stroke-width="0.8"/>
<line x1="464" y1="314.5" x2="473" y2="314.5" stroke="#f01c1c" stroke-width="0.8"/>
<line x1="389" y1="231.5" x2="399" y2="231.5" stroke="#f01c1c" stroke-width="0.8"/>
<line x1="415" y1="203" x2="421" y2="203" stroke="#f01c1c" stroke-width="1.3"/>
<line x1="391" y1="341.5" x2="398" y2="341.5" stroke="#f01c1c" stroke-width="0.8"/>
<line x1="462" y1="189.5" x2="473" y2="189.5" stroke="#f01c1c" stroke-width="0.8"/>
<line x1="379" y1="268.5" x2="391" y2="268.5" stroke="#f01c1c" stroke-width="0.8"/>
<line x1="441" y1="245.5" x2="450" y2="245.5" stroke="#f01c1c" stroke-width="0.8"/>
<line x1="390" y1="346" x2="396" y2="346" stroke="#f01c1c" stroke-width="1.3"/>
<line x1="398" y1="173.5" x2="413" y2="173.5" stroke="#f01c1c" stroke-width="0.8"/>
<line x1="468" y1="290.5" x2="483" y2="290.5" stroke="#f01c1c" stroke-width="0.8"/>
<line x1="460" y1="368.5" x2="463" y2="368.5" stroke="#f01c1c" stroke-width="0.8"/>
<line x1="448" y1="327.5" x2="461" y2="327.5" stroke="#f01c1c" stroke-width="0.8"/>
<line x1="397" y1="343.5" x2="411" y2="343.5" stroke="#f01c1c" stroke-width="0.8"/>
<line x1="432" y1="324.5" x2="440" y2="324.5" stroke="#f01c1c" stroke-width="0.8"/>
<line x1="409" y1="306" x2="423" y2="306" stroke="#f01c1c" stroke-width="1.3"/>
<line x1="404" y1="280" x2="410" y2="280" stroke="#f01c1c" stroke-width="1.3"/>
<line x1="448" y1="298" x2="452" y2="298" stroke="#f01c1c" stroke-width="1.3"/>
<line x1="396" y1="179" x2="403" y2="179" stroke="#f01c1c" stroke-width="1.3"/>
<line x1="399" y1="346.5" x2="408" y2="346.5" stroke="#f01c1c" stroke-width="0.8"/>
<line x1="463" y1="249.5" x2="474" y2="249.5" stroke="#f01c1c" stroke-width="0.8"/>
<line x1="389" y1="268.5" x2="400" y2="268.5" stroke="#f01c1c" stroke-width="0.8"/>
<line x1="386" y1="354.5" x2="398" y2="354.5" stroke="#f01c1c" stroke-width="0.8"/>
<line x1="455" y1="192" x2="465" y2="192" stroke="#f01c1c" stroke-width="1.3"/>
<line x1="443" y1="257.5" x2="451" y2="257.5" stroke="#f01c1c" stroke-width="0.8"/>
<line x1="466" y1="329.5" x2="480" y2="329.5" stroke="#f01c1c" stroke-width="0.8"/>
<line x1="410" y1="273.5" x2="413" y2="273.5" stroke="#f01c1c" stroke-width="0.8"/>
<line x1="444" y1="192.5" x2="448" y2="192.5" stroke="#f01c1c" stroke-width="0.8"/>
<line x1="378" y1="197.5" x2="382" y2="197.5" stroke="#f01c1c" stroke-width="0.8"/>
<line x1="383" y1="228.5" x2="396" y2="228.5" stroke="#f01c1c" stroke-width="0.8"/>
<line x1="482" y1="308.5" x2="484" y2="308.5" stroke="#f01c1c" stroke-width="0.8"/>
<line x1="478" y1="312.5" x2="483" y2="312.5" stroke="#f01c1c" stroke-width="0.8"/>
<line x1="427" y1="358.5" x2="430" y2="358.5" stroke="#f01c1c" stroke-width="0.8"/>
<line x1="460" y1="277.5" x2="465" y2="277.5" stroke="#f01c1c" stroke-width="0.8"/>
<line x1="466" y1="228.5" x2="480" y2="228.5" stroke="#f01c1c" stroke-width="0.8"/>
<line x1="453" y1="327.5" x2="457" y2="327.5" stroke="#f01c1c" stroke-width="0.8"/>
<line x1="361" y1="271.5" x2="376" y2="271.5" stroke="#f01c1c" stroke-width="0.8"/>
<line x1="370" y1="260.5" x2="379" y2="260.5" stroke="#f01c1c" stroke-width="0.8"/>
<line x1="384" y1="203.5" x2="387" y2="203.5" stroke="#f01c1c" stroke-width="0.8"/>
<line x1="401" y1="312.5" x2="416" y2="312.5" stroke="#f01c1c" stroke-width="0.8"/>
<line x1="402" y1="177" x2="409" y2="177" stroke="#f01c1c" stroke-width="1.3"/>
<line x1="400" y1="315.5" x2="406" y2="315.5" stroke="#f01c1c" stroke-width="0.8"/>
<line x1="471" y1="263.5" x2="482" y2="263.5" stroke="#f01c1c" stroke-width="0.8"/>
<line x1="443" y1="269.5" x2="449" y2="269.5" stroke="#f01c1c" stroke-width="0.8"/>
<line x1="430" y1="321.5" x2="438" y2="321.5" stroke="#f01c1c" stroke-width="0.8"/>
<line x1="410" y1="343.5" x2="420" y2="343.5" stroke="#f01c1c" stroke-width="0.8"/>
<line x1="424" y1="240.5" x2="432" y2="240.5" stroke="#f01c1c" stroke-width="0.8"/>
<line x1="436" y1="190" x2="443" y2="190" stroke="#f01c1c" stroke-width="1.3"/>
<line x1="442" y1="226.5" x2="451" y2="226.5" stroke="#f01c1c" stroke-width="0.8"/>
<line x1="472" y1="189.5" x2="481" y2="189.5" stroke="#f01c1c" stroke-width="0.8"/>
<line x1="403" y1="312.5" x2="418" y2="312.5" stroke="#f01c1c" stroke-width="0.8"/>
<line x1="395" y1="294.5" x2="399" y2="294.5" stroke="#f01c1c" stroke-width="0.8"/>
<line x1="440" y1="220.5" x2="443" y2="220.5" stroke="#f01c1c" stroke-width="0.8"/>
<line x1="411" y1="236.5" x2="424" y2="236.5" stroke="#f01c1c" stroke-width="0.8"/>
<line x1="443" y1="224.5" x2="459" y2="224.5" stroke="#f01c1c" stroke-width="0.8"/>
<line x1="475" y1="186.5" x2="481" y2="186.5" stroke="#f01c1c" stroke-width="0.8"/>
<line x1="424" y1="172.5" x2="432" y2="172.5" stroke="#f01c1c" stroke-width="0.8"/>
<line x1="435" y1="192.5" x2="443" y2="192.5" stroke="#f01c1c" stroke-width="0.8"/>
<line x1="380" y1="226" x2="384" y2="226" stroke="#f01c1c" stroke-width="1.3"/>
<line x1="457" y1="356" x2="460" y2="356" stroke="#f01c1c" stroke-width="1.3"/>
<line x1="427" y1="226" x2="434" y2="226" stroke="#f01c1c" stroke-width="1.3"/>
<line x1="456" y1="305.5" x2="462" y2="305.5" stroke="#f01c1c" stroke-width="0.8"/>
<line x1="462" y1="299.5" x2="477" y2="299.5" stroke="#f01c1c" stroke-width="0.8"/>
<line x1="456" y1="250.5" x2="471" y2="250.5" stroke="#f01c1c" stroke-width="0.8"/>
<line x1="462" y1="310.5" x2="465" y2="310.5" stroke="#f01c1c" stroke-width="0.8"/>
<line x1="437" y1="216" x2="451" y2="216" stroke="#f01c1c" stroke-width="1.3"/>
<line x1="442" y1="195.5" x2="458" y2="195.5" stroke="#f01c1c" stroke-width="0.8"/>
<line x1="372" y1="312.5" x2="380" y2="312.5" stroke="#f01c1c" stroke-width="0.8"/>
<line x1="443" y1="216.5" x2="451" y2="216.5" stroke="#f01c1c" stroke-width="0.8"/>
<line x1="374" y1="314.5" x2="385" y2="314.5" stroke="#f01c1c" stroke-width="0.8"/>
<line x1="483" y1="352" x2="484" y2="352" stroke="#f01c1c" stroke-width="1.3"/>
<line x1="434" y1="213" x2="440" y2="213" stroke="#f01c1c" stroke-width="1.3"/>
<line x1="377" y1="332.5" x2="390" y2="332.5" stroke="#f01c1c" stroke-width="0.8"/>
<line x1="432" y1="267.5" x2="446" y2="267.5" stroke="#f01c1c" stroke-width="0.8"/>
<line x1="375" y1="243.5" x2="384" y2="243.5" stroke="#f01c1c" stroke-width="0.8"/>
<line x1="422" y1="199.5" x2="431" y2="199.5" stroke="#f01c1c" stroke-width="0.8"/>
<line x1="374" y1="299.5" x2="380" y2="299.5" stroke="#f01c1c" stroke-width="0.8"/>
<line x1="447" y1="314.5" x2="455" y2="314.5" stroke="#f01c1c" stroke-width="0.8"/>
<line x1="424" y1="363" x2="439" y2="363" stroke="#f01c1c" stroke-width="1.3"/>
<line x1="423" y1="365.5" x2="432" y2="365.5" stroke="#f01c1c" stroke-width="0.8"/>
<line x1="367" y1="192.5" x2="382" y2="192.5" stroke="#f01c1c" stroke-width="0.8"/>
<line x1="419" y1="281.5" x2="429" y2="281.5" stroke="#f01c1c" stroke-width="0.8"/>
<line x1="418" y1="313.5" x2="430" y2="313.5" stroke="#f01c1c" stroke-width="0.8"/>
<line x1="397" y1="194.5" x2="411" y2="194.5" stroke="#f01c1c" stroke-width="0.8"/>
<line x1="458" y1="352.5" x2="471" y2="352.5" stroke="#f01c1c" stroke-width="0.8"/>
<line x1="383" y1="230.5" x2="390" y2="230.5" stroke="#f01c1c" stroke-width="0.8"/>
<line x1="458" y1="369.5" x2="466" y2="369.5" stroke="#f01c1c" stroke-width="0.8"/>
<line x1="397" y1="247" x2="408" y2="247" stroke="#f01c1c" stroke-width="1.3"/>
<line x1="431" y1="341.5" x2="440" y2="341.5" stroke="#f01c1c" stroke-width="0.8"/>
<line x1="406" y1="317.5" x2="419" y2="317.5" stroke="#f01c1c" stroke-width="0.8"/>
<line x1="419" y1="318.5" x2="424" y2="318.5" stroke="#f01c1c" stroke-width="0.8"/>
<line x1="394" y1="308.5" x2="409" y2="308.5" stroke="#f01c1c" stroke-width="0.8"/>
<line x1="366" y1="188.5" x2="381" y2="188.5" stroke="#f01c1c" stroke-width="0.8"/>
<line x1="374" y1="339.5" x2="387" y2="339.5" stroke="#f01c1c" stroke-width="0.8"/>
<line x1="471" y1="273.5" x2="477" y2="273.5" stroke="#f01c1c" stroke-width="0.8"/>
<line x1="448" y1="358.5" x2="456" y2="358.5" stroke="#f01c1c" stroke-width="0.8"/>
<line x1="430" y1="359.5" x2="435" y2="359.5" stroke="#f01c1c" stroke-width="0.8"/>
<line x1="429" y1="341.5" x2="436" y2="341.5" stroke="#f01c1c" stroke-width="0.8"/>
<line x1="440" y1="364.5" x2="449" y2="364.5" stroke="#f01c1c" stroke-width="0.8"/>
<line x1="366" y1="262.5" x2="380" y2="262.5" stroke="#f01c1c" stroke-width="0.8"/>
<line x1="469" y1="287.5" x2="479" y2="287.5" stroke="#f01c1c" stroke-width="0.8"/>
<line x1="464" y1="268.5" x2="472" y2="268.5" stroke="#f01c1c" stroke-width="0.8"/>
<line x1="395" y1="307.5" x2="400" y2="307.5" stroke="#f01c1c" stroke-width="0.8"/>
<line x1="425" y1="179.5" x2="437" y2="179.5" stroke="#f01c1c" stroke-width="0.8"/>
<line x1="447" y1="312.5" x2="452" y2="312.5" stroke="#f01c1c" stroke-width="0.8"/>
<line x1="464" y1="343.5" x2="470" y2="343.5" stroke="#f01c1c" stroke-width="0.8"/>
<line x1="370" y1="200.5" x2="385" y2="200.5" stroke="#f01c1c" stroke-width="0.8"/>
<line x1="410" y1="175.5" x2="417" y2="175.5" stroke="#f01c1c" stroke-width="0.8"/>
<line x1="403" y1="219.5" x2="408" y2="219.5" stroke="#f01c1c" stroke-width="0.8"/>
<line x1="420" y1="321.5" x2="425" y2="321.5" stroke="#f01c1c" stroke-width="0.8"/>
<line x1="453" y1="291" x2="457" y2="291" stroke="#f01c1c" stroke-width="1.3"/>
<line x1="411" y1="286.5" x2="420" y2="286.5" stroke="#f01c1c" stroke-width="0.8"/>
<line x1="402" y1="193" x2="415" y2="193" stroke="#f01c1c" stroke-width="1.3"/>
<line x1="387" y1="320.5" x2="397" y2="320.5" stroke="#f01c1c" stroke-width="0.8"/>
<line x1="419" y1="271" x2="428" y2="271" stroke="#f01c1c" stroke-width="1.3"/>
<line x1="459" y1="300.5" x2="470" y2="300.5" stroke="#f01c1c" stroke-width="0.8"/>
<line x1="417" y1="282.5" x2="427" y2="282.5" stroke="#f01c1c" stroke-width="0.8"/>
<line x1="397" y1="291.5" x2="410" y2="291.5" stroke="#f01c1c" stroke-width="0.8"/>
<line x1="420" y1="201.5" x2="426" y2="201.5" stroke="#f01c1c" stroke-width="0.8"/>
<line x1="391" y1="221.5" x2="405" y2="221.5" stroke="#f01c1c" stroke-width="0.8"/>
<line x1="452" y1="200.5" x2="466" y2="200.5" stroke="#f01c1c" stroke-width="0.8"/>
<line x1="392" y1="227.5" x2="407" y2="227.5" stroke="#f01c1c" stroke-width="0.8"/>
<line x1="451" y1="199.5" x2="461" y2="199.5" stroke="#f01c1c" stroke-width="0.8"/>
<line x1="401" y1="285" x2="404" y2="285" stroke="#f01c1c" stroke-width="1.3"/>
<line x1="469" y1="216.5" x2="476" y2="216.5" stroke="#f01c1c" stroke-width="0.8"/>
<line x1="450" y1="177.5" x2="454" y2="177.5" stroke="#f01c1c" stroke-width="0.8"/>
<line x1="397" y1="288.5" x2="404" y2="288.5" stroke="#f01c1c" stroke-width="0.8"/>
<line x1="434" y1="205" x2="448" y2="205" stroke="#f01c1c" stroke-width="1.3"/>
<line x1="419" y1="347.5" x2="425" y2="347.5" stroke="#f01c1c" stroke-width="0.8"/>
<line x1="390" y1="315.5" x2="406" y2="315.5" stroke="#f01c1c" stroke-width="0.8"/>
<line x1="423" y1="195.5" x2="437" y2="195.5" stroke="#f01c1c" stroke-width="0.8"/>
<line x1="475" y1="215.5" x2="481" y2="215.5" stroke="#f01c1c" stroke-width="0.8"/>
<line x1="391" y1="239" x2="401" y2="239" stroke="#f01c1c" stroke-width="1.3"/>
<line x1="442" y1="314" x2="456" y2="314" stroke="#f01c1c" stroke-width="1.3"/>
<line x1="435" y1="326.5" x2="446" y2="326.5" stroke="#f01c1c" stroke-width="0.8"/>
<line x1="449" y1="319.5" x2="463" y2="319.5" stroke="#f01c1c" stroke-width="0.8"/>
<line x1="373" y1="326.5" x2="387" y2="326.5" stroke="#f01c1c" stroke-width="0.8"/>
<line x1="426" y1="358.5" x2="435" y2="358.5" stroke="#f01c1c" stroke-width="0.8"/>
<line x1="378" y1="299" x2="384" y2="299" stroke="#f01c1c" stroke-width="1.3"/>
<line x1="452" y1="266.5" x2="459" y2="266.5" stroke="#f01c1c" stroke-width="0.8"/>
<line x1="457" y1="258.5" x2="472" y2="258.5" stroke="#f01c1c" stroke-width="0.8"/>
<line x1="469" y1="310.5" x2="477" y2="310.5" stroke="#f01c1c" stroke-width="0.8"/>
<line x1="400" y1="319.5" x2="410" y2="319.5" stroke="#f01c1c" stroke-width="0.8"/>
<line x1="429" y1="231.5" x2="440" y2="231.5" stroke="#f01c1c" stroke-width="0.8"/>
<line x1="410" y1="296" x2="421" y2="296" stroke="#f01c1c" stroke-width="1.3"/>
<line x1="405" y1="192.5" x2="419" y2="192.5" stroke="#f01c1c" stroke-width="0.8"/>
<line x1="428" y1="349.5" x2="442" y2="349.5" stroke="#f01c1c" stroke-width="0.8"/>
<line x1="421" y1="219" x2="430" y2="219" stroke="#f01c1c" stroke-width="1.3"/>
<line x1="430" y1="199.5" x2="437" y2="199.5" stroke="#f01c1c" stroke-width="0.8"/>
<line x1="427" y1="357" x2="439" y2="357" stroke="#f01c1c" stroke-width="1.3"/>
<line x1="414" y1="295.5" x2="424" y2="295.5" stroke="#f01c1c" stroke-width="0.8"/>
<line x1="405" y1="339" x2="416" y2="339" stroke="#f01c1c" stroke-width="1.3"/>
<line x1="382" y1="292.5" x2="386" y2="292.5" stroke="#f01c1c" stroke-width="0.8"/>
<line x1="404" y1="306.5" x2="414" y2="306.5" stroke="#f01c1c" stroke-width="0.8"/>
<line x1="420" y1="177.5" x2="428" y2="177.5" stroke="#f01c1c" stroke-width="0.8"/>
<line x1="415" y1="247.5" x2="425" y2="247.5" stroke="#f01c1c" stroke-width="0.8"/>
<line x1="444" y1="264.5" x2="450" y2="264.5" stroke="#f01c1c" stroke-width="0.8"/>
<line x1="401" y1="273.5" x2="415" y2="273.5" stroke="#f01c1c" stroke-width="0.8"/>
<line x1="387" y1="194" x2="400" y2="194" stroke="#f01c1c" stroke-width="1.3"/>
<line x1="479" y1="258.5" x2="483" y2="258.5" stroke="#f01c1c" stroke-width="0.8"/>
<line x1="425" y1="255.5" x2="429" y2="255.5" stroke="#f01c1c" stroke-width="0.8"/>
<line x1="367" y1="200" x2="377" y2="200" stroke="#f01c1c" stroke-width="1.3"/>
<line x1="431" y1="221.5" x2="437" y2="221.5" stroke="#f01c1c" stroke-width="0.8"/>
<line x1="382" y1="332.5" x2="391" y2="332.5" stroke="#f01c1c" stroke-width="0.8"/>
<line x1="385" y1="183" x2="392" y2="183" stroke="#f01c1c" stroke-width="1.3"/>
<line x1="467.5" y1="359" x2="467.5" y2="369" stroke="#fa30f0" stroke-width="0.8"/>
<line x1="445.5" y1="264" x2="445.5" y2="275" stroke="#fa30f0" stroke-width="0.8"/>
<line x1="454.5" y1="201" x2="454.5" y2="214" stroke="#fa30f0" stroke-width="0.8"/>
<line x1="429.5" y1="272" x2="429.5" y2="277" stroke="#fa30f0" stroke-width="0.8"/>
<line x1="388.5" y1="227" x2="388.5" y2="239" stroke="#fa30f0" stroke-width="0.8"/>
<line x1="453" y1="336" x2="453" y2="351" stroke="#fa30f0" stroke-width="1.4"/>
<line x1="438.5" y1="350" x2="438.5" y2="360" stroke="#fa30f0" stroke-width="0.8"/>
<line x1="399.5" y1="289" x2="399.5" y2="298" stroke="#fa30f0" stroke-width="0.8"/>
<line x1="453.5" y1="325" x2="453.5" y2="336" stroke="#fa30f0" stroke-width="0.8"/>
<line x1="389.5" y1="257" x2="389.5" y2="266" stroke="#fa30f0" stroke-width="0.8"/>
<line x1="473" y1="182" x2="473" y2="198" stroke="#fa30f0" stroke-width="1.4"/>
<line x1="456.5" y1="342" x2="456.5" y2="357" stroke="#fa30f0" stroke-width="0.8"/>
<line x1="466.5" y1="341" x2="466.5" y2="354" stroke="#fa30f0" stroke-width="0.8"/>
<line x1="426.5" y1="180" x2="426.5" y2="197" stroke="#fa30f0" stroke-width="0.8"/>
<line x1="394.5" y1="354" x2="394.5" y2="365" stroke="#fa30f0" stroke-width="0.8"/>
<line x1="398.5" y1="362" x2="398.5" y2="367" stroke="#fa30f0" stroke-width="0.8"/>
<line x1="434.5" y1="342" x2="434.5" y2="359" stroke="#fa30f0" stroke-width="0.8"/>
<line x1="464" y1="231" x2="464" y2="243" stroke="#fa30f0" stroke-width="1.4"/>
<line x1="454" y1="206" x2="454" y2="215" stroke="#fa30f0" stroke-width="1.4"/>
<line x1="427.5" y1="196" x2="427.5" y2="205" stroke="#fa30f0" stroke-width="0.8"/>
<line x1="427.5" y1="341" x2="427.5" y2="350" stroke="#fa30f0" stroke-width="0.8"/>
<line x1="464.5" y1="332" x2="464.5" y2="336" stroke="#fa30f0" stroke-width="0.8"/>
<line x1="411" y1="362" x2="411" y2="368" stroke="#fa30f0" stroke-width="1.4"/>
<line x1="437" y1="342" x2="437" y2="352" stroke="#fa30f0" stroke-width="1.4"/>
<line x1="377.5" y1="229" x2="377.5" y2="243" stroke="#fa30f0" stroke-width="0.8"/>
<line x1="419.5" y1="329" x2="419.5" y2="338" stroke="#fa30f0" stroke-width="0.8"/>
<line x1="446.5" y1="197" x2="446.5" y2="206" stroke="#fa30f0" stroke-width="0.8"/>
<line x1="440.5" y1="329" x2="440.5" y2="336" stroke="#fa30f0" stroke-width="0.8"/>
<line x1="441.5" y1="320" x2="441.5" y2="332" stroke="#fa30f0" stroke-width="0.8"/>
<line x1="399.5" y1="240" x2="399.5" y2="257" stroke="#fa30f0" stroke-width="0.8"/>
<line x1="461" y1="352" x2="461" y2="365" stroke="#fa30f0" stroke-width="1.4"/>
<line x1="411" y1="254" x2="411" y2="259" stroke="#fa30f0" stroke-width="1.4"/>
<line x1="467.5" y1="293" x2="467.5" y2="299" stroke="#fa30f0" stroke-width="0.8"/>
<line x1="402.5" y1="280" x2="402.5" y2="288" stroke="#fa30f0" stroke-width="0.8"/>
<line x1="403.5" y1="255" x2="403.5" y2="271" stroke="#fa30f0" stroke-width="0.8"/>
<line x1="413" y1="334" x2="413" y2="349" stroke="#fa30f0" stroke-width="1.4"/>
<line x1="443.5" y1="343" x2="443.5" y2="351" stroke="#fa30f0" stroke-width="0.8"/>
<line x1="397" y1="352" x2="397" y2="368" stroke="#fa30f0" stroke-width="1.4"/>
<line x1="394" y1="212" x2="394" y2="217" stroke="#fa30f0" stroke-width="1.4"/>
<line x1="387.5" y1="290" x2="387.5" y2="300" stroke="#fa30f0" stroke-width="0.8"/>
<line x1="385.5" y1="355" x2="385.5" y2="369" stroke="#fa30f0" stroke-width="0.8"/>
<line x1="467" y1="219" x2="467" y2="222" stroke="#fa30f0" stroke-width="1.4"/>
<line x1="390" y1="284" x2="390" y2="293" stroke="#fa30f0" stroke-width="1.4"/>
<line x1="478.5" y1="365" x2="478.5" y2="368" stroke="#fa30f0" stroke-width="0.8"/>
<line x1="446.5" y1="223" x2="446.5" y2="237" stroke="#fa30f0" stroke-width="0.8"/>
<line x1="483.5" y1="336" x2="483.5" y2="344" stroke="#fa30f0" stroke-width="0.8"/>
<line x1="463.5" y1="291" x2="463.5" y2="302" stroke="#fa30f0" stroke-width="0.8"/>
<line x1="363" y1="286" x2="363" y2="291" stroke="#fa30f0" stroke-width="1.4"/>
<line x1="435.5" y1="354" x2="435.5" y2="361" stroke="#fa30f0" stroke-width="0.8"/>
<line x1="437.5" y1="334" x2="437.5" y2="342" stroke="#fa30f0" stroke-width="0.8"/>
<line x1="423.5" y1="215" x2="423.5" y2="219" stroke="#fa30f0" stroke-width="0.8"/>
<line x1="399.5" y1="233" x2="399.5" y2="246" stroke="#fa30f0" stroke-width="0.8"/>
<line x1="449.5" y1="246" x2="449.5" y2="257" stroke="#fa30f0" stroke-width="0.8"/>
<line x1="403.5" y1="352" x2="403.5" y2="367" stroke="#fa30f0" stroke-width="0.8"/>
<line x1="441.5" y1="350" x2="441.5" y2="360" stroke="#fa30f0" stroke-width="0.8"/>
<line x1="475" y1="241" x2="475" y2="258" stroke="#fa30f0" stroke-width="1.4"/>
<line x1="444.5" y1="329" x2="444.5" y2="339" stroke="#fa30f0" stroke-width="0.8"/>
<line x1="450.5" y1="222" x2="450.5" y2="231" stroke="#fa30f0" stroke-width="0.8"/>
<line x1="417.5" y1="283" x2="417.5" y2="297" stroke="#fa30f0" stroke-width="0.8"/>
<line x1="380.5" y1="251" x2="380.5" y2="261" stroke="#fa30f0" stroke-width="0.8"/>
<line x1="480" y1="257" x2="480" y2="270" stroke="#fa30f0" stroke-width="1.4"/>
<line x1="440" y1="295" x2="440" y2="306" stroke="#fa30f0" stroke-width="1.4"/>
<line x1="359.5" y1="287" x2="359.5" y2="299" stroke="#fa30f0" stroke-width="0.8"/>
<line x1="400.5" y1="316" x2="400.5" y2="327" stroke="#fa30f0" stroke-width="0.8"/>
<line x1="465.5" y1="363" x2="465.5" y2="369" stroke="#fa30f0" stroke-width="0.8"/>
<line x1="387.5" y1="243" x2="387.5" y2="257" stroke="#fa30f0" stroke-width="0.8"/>
<line x1="428.5" y1="300" x2="428.5" y2="317" stroke="#fa30f0" stroke-width="0.8"/>
<line x1="405.5" y1="252" x2="405.5" y2="258" stroke="#fa30f0" stroke-width="0.8"/>
<line x1="379.5" y1="325" x2="379.5" y2="331" stroke="#fa30f0" stroke-width="0.8"/>
<line x1="446.5" y1="325" x2="446.5" y2="343" stroke="#fa30f0" stroke-width="0.8"/>
<line x1="367.5" y1="246" x2="367.5" y2="249" stroke="#fa30f0" stroke-width="0.8"/>
<line x1="424.5" y1="176" x2="424.5" y2="189" stroke="#fa30f0" stroke-width="0.8"/>
<line x1="475.5" y1="323" x2="475.5" y2="334" stroke="#fa30f0" stroke-width="0.8"/>
<line x1="403.5" y1="233" x2="403.5" y2="244" stroke="#fa30f0" stroke-width="0.8"/>
<line x1="483.5" y1="357" x2="483.5" y2="367" stroke="#fa30f0" stroke-width="0.8"/>
<line x1="414" y1="356" x2="414" y2="367" stroke="#fa30f0" stroke-width="1.4"/>
<line x1="366.5" y1="285" x2="366.5" y2="299" stroke="#fa30f0" stroke-width="0.8"/>
<line x1="396" y1="357" x2="396" y2="368" stroke="#fa30f0" stroke-width="1.4"/>
<line x1="478.5" y1="316" x2="478.5" y2="333" stroke="#fa30f0" stroke-width="0.8"/>
<line x1="393" y1="363" x2="393" y2="368" stroke="#fa30f0" stroke-width="1.4"/>
<line x1="452.5" y1="241" x2="452.5" y2="250" stroke="#fa30f0" stroke-width="0.8"/>
<line x1="393.5" y1="359" x2="393.5" y2="368" stroke="#fa30f0" stroke-width="0.8"/>
<line x1="395.5" y1="232" x2="395.5" y2="246" stroke="#fa30f0" stroke-width="0.8"/>
<line x1="359.5" y1="259" x2="359.5" y2="270" stroke="#fa30f0" stroke-width="0.8"/>
<line x1="384.5" y1="305" x2="384.5" y2="320" stroke="#fa30f0" stroke-width="0.8"/>
<line x1="450.5" y1="267" x2="450.5" y2="283" stroke="#fa30f0" stroke-width="0.8"/>
<line x1="470.5" y1="256" x2="470.5" y2="264" stroke="#fa30f0" stroke-width="0.8"/>
<line x1="466" y1="209" x2="466" y2="218" stroke="#fa30f0" stroke-width="1.4"/>
<line x1="400.5" y1="301" x2="400.5" y2="308" stroke="#fa30f0" stroke-width="0.8"/>
<line x1="478.5" y1="259" x2="478.5" y2="276" stroke="#fa30f0" stroke-width="0.8"/>
<line x1="482.5" y1="300" x2="482.5" y2="306" stroke="#fa30f0" stroke-width="0.8"/>
<line x1="361" y1="267" x2="361" y2="273" stroke="#fa30f0" stroke-width="1.4"/>
<line x1="397.5" y1="247" x2="397.5" y2="261" stroke="#fa30f0" stroke-width="0.8"/>
<line x1="435" y1="300" x2="435" y2="316" stroke="#fa30f0" stroke-width="1.4"/>
<line x1="426.5" y1="264" x2="426.5" y2="268" stroke="#fa30f0" stroke-width="0.8"/>
<line x1="361.5" y1="315" x2="361.5" y2="318" stroke="#fa30f0" stroke-width="0.8"/>
<line x1="431" y1="204" x2="431" y2="221" stroke="#fa30f0" stroke-width="1.4"/>
<line x1="465" y1="192" x2="465" y2="209" stroke="#fa30f0" stroke-width="1.4"/>
<line x1="464.5" y1="276" x2="464.5" y2="285" stroke="#fa30f0" stroke-width="0.8"/>
<line x1="420" y1="193" x2="420" y2="198" stroke="#fa30f0" stroke-width="1.4"/>
<line x1="387.5" y1="234" x2="387.5" y2="240" stroke="#fa30f0" stroke-width="0.8"/>
<line x1="379.5" y1="321" x2="379.5" y2="325" stroke="#fa30f0" stroke-width="0.8"/>
<line x1="455.5" y1="246" x2="455.5" y2="252" stroke="#fa30f0" stroke-width="0.8"/>
<line x1="483.5" y1="236" x2="483.5" y2="253" stroke="#fa30f0" stroke-width="0.8"/>
<line x1="393.5" y1="342" x2="393.5" y2="356" stroke="#fa30f0" stroke-width="0.8"/>
<line x1="386" y1="267" x2="386" y2="281" stroke="#fa30f0" stroke-width="1.4"/>
<line x1="412.5" y1="360" x2="412.5" y2="366" stroke="#fa30f0" stroke-width="0.8"/>
<line x1="385.5" y1="314" x2="385.5" y2="332" stroke="#fa30f0" stroke-width="0.8"/>
<line x1="383.5" y1="364" x2="383.5" y2="368" stroke="#fa30f0" stroke-width="0.8"/>
<line x1="455.5" y1="345" x2="455.5" y2="360" stroke="#fa30f0" stroke-width="0.8"/>
<line x1="464.5" y1="214" x2="464.5" y2="221" stroke="#fa30f0" stroke-width="0.8"/>
<line x1="383" y1="231" x2="383" y2="244" stroke="#fa30f0" stroke-width="1.4"/>
<line x1="441.5" y1="205" x2="441.5" y2="218" stroke="#fa30f0" stroke-width="0.8"/>
<line x1="386.5" y1="236" x2="386.5" y2="249" stroke="#fa30f0" stroke-width="0.8"/>
<line x1="400.5" y1="185" x2="400.5" y2="195" stroke="#fa30f0" stroke-width="0.8"/>
<line x1="401.5" y1="175" x2="401.5" y2="185" stroke="#fa30f0" stroke-width="0.8"/>
<line x1="459.5" y1="298" x2="459.5" y2="311" stroke="#fa30f0" stroke-width="0.8"/>
<line x1="417.5" y1="326" x2="417.5" y2="334" stroke="#fa30f0" stroke-width="0.8"/>
<line x1="392.5" y1="319" x2="392.5" y2="323" stroke="#fa30f0" stroke-width="0.8"/>
<line x1="392.5" y1="298" x2="392.5" y2="304" stroke="#fa30f0" stroke-width="0.8"/>
<line x1="428.5" y1="282" x2="428.5" y2="288" stroke="#fa30f0" stroke-width="0.8"/>
<line x1="473.5" y1="232" x2="473.5" y2="250" stroke="#fa30f0" stroke-width="0.8"/>
<line x1="428.5" y1="213" x2="428.5" y2="230" stroke="#fa30f0" stroke-width="0.8"/>
<line x1="431.5" y1="176" x2="431.5" y2="185" stroke="#fa30f0" stroke-width="0.8"/>
<line x1="434.5" y1="306" x2="434.5" y2="311" stroke="#fa30f0" stroke-width="0.8"/>
<line x1="451.5" y1="340" x2="451.5" y2="348" stroke="#fa30f0" stroke-width="0.8"/>
<line x1="392" y1="291" x2="392" y2="298" stroke="#fa30f0" stroke-width="1.4"/>
<line x1="465" y1="338" x2="465" y2="348" stroke="#fa30f0" stroke-width="1.4"/>
<line x1="448.5" y1="248" x2="448.5" y2="262" stroke="#fa30f0" stroke-width="0.8"/>
<line x1="425.5" y1="217" x2="425.5" y2="225" stroke="#fa30f0" stroke-width="0.8"/>
<line x1="397.5" y1="274" x2="397.5" y2="282" stroke="#fa30f0" stroke-width="0.8"/>
<line x1="404" y1="333" x2="404" y2="341" stroke="#fa30f0" stroke-width="1.4"/>
<line x1="451.5" y1="296" x2="451.5" y2="303" stroke="#fa30f0" stroke-width="0.8"/>
<line x1="435.5" y1="240" x2="435.5" y2="255" stroke="#fa30f0" stroke-width="0.8"/>
<line x1="454.5" y1="218" x2="454.5" y2="222" stroke="#fa30f0" stroke-width="0.8"/>
<line x1="384.5" y1="343" x2="384.5" y2="356" stroke="#fa30f0" stroke-width="0.8"/>
<line x1="407.5" y1="356" x2="407.5" y2="367" stroke="#fa30f0" stroke-width="0.8"/>
<line x1="481" y1="221" x2="481" y2="238" stroke="#fa30f0" stroke-width="1.4"/>
<line x1="404.5" y1="343" x2="404.5" y2="360" stroke="#fa30f0" stroke-width="0.8"/>
<line x1="481" y1="319" x2="481" y2="326" stroke="#fa30f0" stroke-width="1.4"/>
<line x1="441.5" y1="336" x2="441.5" y2="352" stroke="#fa30f0" stroke-width="0.8"/>
<line x1="431.5" y1="271" x2="431.5" y2="282" stroke="#fa30f0" stroke-width="0.8"/>
<line x1="442" y1="237" x2="442" y2="240" stroke="#fa30f0" stroke-width="1.4"/>
<line x1="427.5" y1="231" x2="427.5" y2="240" stroke="#fa30f0" stroke-width="0.8"/>
<line x1="472.5" y1="228" x2="472.5" y2="238" stroke="#fa30f0" stroke-width="0.8"/>
<line x1="460.5" y1="290" x2="460.5" y2="294" stroke="#fa30f0" stroke-width="0.8"/>
<line x1="360.5" y1="265" x2="360.5" y2="269" stroke="#fa30f0" stroke-width="0.8"/>
<line x1="438" y1="310" x2="438" y2="320" stroke="#fa30f0" stroke-width="1.4"/>
<line x1="415.5" y1="349" x2="415.5" y2="359" stroke="#fa30f0" stroke-width="0.8"/>
<line x1="454.5" y1="204" x2="454.5" y2="212" stroke="#fa30f0" stroke-width="0.8"/>
<line x1="470.5" y1="327" x2="470.5" y2="340" stroke="#fa30f0" stroke-width="0.8"/>
<line x1="425.5" y1="349" x2="425.5" y2="359" stroke="#fa30f0" stroke-width="0.8"/>
<line x1="381.5" y1="365" x2="381.5" y2="368" stroke="#fa30f0" stroke-width="0.8"/>
<line x1="414.5" y1="343" x2="414.5" y2="349" stroke="#fa30f0" stroke-width="0.8"/>
<line x1="478.5" y1="313" x2="478.5" y2="326" stroke="#fa30f0" stroke-width="0.8"/>
<line x1="399.5" y1="245" x2="399.5" y2="253" stroke="#fa30f0" stroke-width="0.8"/>
<line x1="449.5" y1="249" x2="449.5" y2="265" stroke="#fa30f0" stroke-width="0.8"/>
<line x1="463.5" y1="362" x2="463.5" y2="367" stroke="#fa30f0" stroke-width="0.8"/>
<line x1="379.5" y1="314" x2="379.5" y2="324" stroke="#fa30f0" stroke-width="0.8"/>
<line x1="472" y1="245" x2="472" y2="254" stroke="#fa30f0" stroke-width="1.4"/>
<line x1="427.5" y1="179" x2="427.5" y2="184" stroke="#fa30f0" stroke-width="0.8"/>
<line x1="363.5" y1="253" x2="363.5" y2="257" stroke="#fa30f0" stroke-width="0.8"/>
<line x1="481" y1="297" x2="481" y2="309" stroke="#fa30f0" stroke-width="1.4"/>
<line x1="364" y1="253" x2="364" y2="269" stroke="#fa30f0" stroke-width="1.4"/>
<line x1="396.5" y1="308" x2="396.5" y2="315" stroke="#fa30f0" stroke-width="0.8"/>
<line x1="471.5" y1="200" x2="471.5" y2="207" stroke="#fa30f0" stroke-width="0.8"/>
<line x1="447" y1="294" x2="447" y2="304" stroke="#fa30f0" stroke-width="1.4"/>
<line x1="364.5" y1="283" x2="364.5" y2="301" stroke="#fa30f0" stroke-width="0.8"/>
<line x1="412.5" y1="297" x2="412.5" y2="304" stroke="#fa30f0" stroke-width="0.8"/>
<line x1="471.5" y1="321" x2="471.5" y2="336" stroke="#fa30f0" stroke-width="0.8"/>
<line x1="422.5" y1="222" x2="422.5" y2="231" stroke="#fa30f0" stroke-width="0.8"/>
<line x1="445.5" y1="220" x2="445.5" y2="230" stroke="#fa30f0" stroke-width="0.8"/>
<line x1="388.5" y1="360" x2="388.5" y2="366" stroke="#fa30f0" stroke-width="0.8"/>
<line x1="419.5" y1="321" x2="419.5" y2="328" stroke="#fa30f0" stroke-width="0.8"/>
<line x1="424.5" y1="329" x2="424.5" y2="343" stroke="#fa30f0" stroke-width="0.8"/>
<line x1="414" y1="324" x2="414" y2="329" stroke="#fa30f0" stroke-width="1.4"/>
<line x1="463.5" y1="194" x2="463.5" y2="207" stroke="#fa30f0" stroke-width="0.8"/>
<line x1="455.5" y1="366" x2="455.5" y2="369" stroke="#fa30f0" stroke-width="0.8"/>
<line x1="365.5" y1="284" x2="365.5" y2="293" stroke="#fa30f0" stroke-width="0.8"/>
<line x1="382.5" y1="290" x2="382.5" y2="293" stroke="#fa30f0" stroke-width="0.8"/>
<line x1="398.5" y1="322" x2="398.5" y2="331" stroke="#fa30f0" stroke-width="0.8"/>
<line x1="408.5" y1="332" x2="408.5" y2="348" stroke="#fa30f0" stroke-width="0.8"/>
<line x1="416.5" y1="228" x2="416.5" y2="232" stroke="#fa30f0" stroke-width="0.8"/>
<line x1="449.5" y1="305" x2="449.5" y2="315" stroke="#fa30f0" stroke-width="0.8"/>
<line x1="458.5" y1="338" x2="458.5" y2="349" stroke="#fa30f0" stroke-width="0.8"/>
<line x1="407" y1="318" x2="407" y2="326" stroke="#fa30f0" stroke-width="1.4"/>
<line x1="467.5" y1="222" x2="467.5" y2="228" stroke="#fa30f0" stroke-width="0.8"/>
<line x1="386.5" y1="190" x2="386.5" y2="208" stroke="#fa30f0" stroke-width="0.8"/>
<line x1="480.5" y1="187" x2="480.5" y2="203" stroke="#fa30f0" stroke-width="0.8"/>
<line x1="470.5" y1="283" x2="470.5" y2="292" stroke="#fa30f0" stroke-width="0.8"/>
<line x1="391" y1="218" x2="391" y2="227" stroke="#fa30f0" stroke-width="1.4"/>
<line x1="460.5" y1="194" x2="460.5" y2="200" stroke="#fa30f0" stroke-width="0.8"/>
<line x1="362.5" y1="241" x2="362.5" y2="249" stroke="#fa30f0" stroke-width="0.8"/>
<line x1="378.5" y1="224" x2="378.5" y2="230" stroke="#fa30f0" stroke-width="0.8"/>
<line x1="405.5" y1="249" x2="405.5" y2="265" stroke="#fa30f0" stroke-width="0.8"/>
<line x1="419.5" y1="202" x2="419.5" y2="209" stroke="#fa30f0" stroke-width="0.8"/>
<line x1="397.5" y1="313" x2="397.5" y2="319" stroke="#fa30f0" stroke-width="0.8"/>
<line x1="435.5" y1="348" x2="435.5" y2="359" stroke="#fa30f0" stroke-width="0.8"/>
<line x1="375.5" y1="332" x2="375.5" y2="343" stroke="#fa30f0" stroke-width="0.8"/>
<line x1="386.5" y1="288" x2="386.5" y2="295" stroke="#fa30f0" stroke-width="0.8"/>
<line x1="479.5" y1="235" x2="479.5" y2="242" stroke="#fa30f0" stroke-width="0.8"/>
<line x1="418.5" y1="325" x2="418.5" y2="331" stroke="#fa30f0" stroke-width="0.8"/>
<line x1="398" y1="310" x2="398" y2="315" stroke="#fa30f0" stroke-width="1.4"/>
<line x1="439.5" y1="219" x2="439.5" y2="233" stroke="#fa30f0" stroke-width="0.8"/>
<line x1="411" y1="243" x2="411" y2="258" stroke="#fa30f0" stroke-width="1.4"/>
<line x1="432.5" y1="306" x2="432.5" y2="313" stroke="#fa30f0" stroke-width="0.8"/>
<line x1="372.5" y1="280" x2="372.5" y2="289" stroke="#fa30f0" stroke-width="0.8"/>
<line x1="365.5" y1="236" x2="365.5" y2="240" stroke="#fa30f0" stroke-width="0.8"/>
<line x1="422.5" y1="235" x2="422.5" y2="246" stroke="#fa30f0" stroke-width="0.8"/>
<line x1="400.5" y1="335" x2="400.5" y2="347" stroke="#fa30f0" stroke-width="0.8"/>
<line x1="462.5" y1="352" x2="462.5" y2="365" stroke="#fa30f0" stroke-width="0.8"/>
<line x1="462" y1="343" x2="462" y2="360" stroke="#fa30f0" stroke-width="1.4"/>
<line x1="407.5" y1="268" x2="407.5" y2="279" stroke="#fa30f0" stroke-width="0.8"/>
<line x1="418.5" y1="228" x2="418.5" y2="240" stroke="#fa30f0" stroke-width="0.8"/>
<line x1="451.5" y1="184" x2="451.5" y2="199" stroke="#fa30f0" stroke-width="0.8"/>
<line x1="379.5" y1="193" x2="379.5" y2="199" stroke="#fa30f0" stroke-width="0.8"/>
<line x1="472.5" y1="321" x2="472.5" y2="328" stroke="#fa30f0" stroke-width="0.8"/>
<line x1="407" y1="345" x2="407" y2="358" stroke="#fa30f0" stroke-width="1.4"/>
<line x1="437.5" y1="188" x2="437.5" y2="191" stroke="#fa30f0" stroke-width="0.8"/>
<line x1="416.5" y1="249" x2="416.5" y2="262" stroke="#fa30f0" stroke-width="0.8"/>
<line x1="466.5" y1="255" x2="466.5" y2="260" stroke="#fa30f0" stroke-width="0.8"/>
<line x1="453.5" y1="301" x2="453.5" y2="308" stroke="#fa30f0" stroke-width="0.8"/>
<line x1="407.5" y1="337" x2="407.5" y2="350" stroke="#fa30f0" stroke-width="0.8"/>
<line x1="387" y1="199" x2="387" y2="205" stroke="#fa30f0" stroke-width="1.4"/>
<line x1="462.5" y1="282" x2="462.5" y2="297" stroke="#fa30f0" stroke-width="0.8"/>
<line x1="375" y1="255" x2="375" y2="259" stroke="#fa30f0" stroke-width="1.4"/>
<line x1="409" y1="349" x2="409" y2="366" stroke="#fa30f0" stroke-width="1.4"/>
<line x1="448.5" y1="357" x2="448.5" y2="362" stroke="#fa30f0" stroke-width="0.8"/>
<line x1="459.5" y1="290" x2="459.5" y2="303" stroke="#fa30f0" stroke-width="0.8"/>
<line x1="482.5" y1="219" x2="482.5" y2="237" stroke="#fa30f0" stroke-width="0.8"/>
<line x1="466.5" y1="325" x2="466.5" y2="331" stroke="#fa30f0" stroke-width="0.8"/>
<line x1="359.5" y1="286" x2="359.5" y2="300" stroke="#fa30f0" stroke-width="0.8"/>
<line x1="447.5" y1="320" x2="447.5" y2="338" stroke="#fa30f0" stroke-width="0.8"/>
<line x1="384.5" y1="228" x2="384.5" y2="244" stroke="#fa30f0" stroke-width="0.8"/>
<line x1="429.5" y1="323" x2="429.5" y2="333" stroke="#fa30f0" stroke-width="0.8"/>
<line x1="378.5" y1="347" x2="378.5" y2="353" stroke="#fa30f0" stroke-width="0.8"/>
<line x1="396.5" y1="229" x2="396.5" y2="244" stroke="#fa30f0" stroke-width="0.8"/>
<line x1="374.5" y1="298" x2="374.5" y2="310" stroke="#fa30f0" stroke-width="0.8"/>
<line x1="475.5" y1="212" x2="475.5" y2="227" stroke="#fa30f0" stroke-width="0.8"/>
<line x1="481.5" y1="253" x2="481.5" y2="259" stroke="#fa30f0" stroke-width="0.8"/>
<line x1="439.5" y1="350" x2="439.5" y2="357" stroke="#fa30f0" stroke-width="0.8"/>
<line x1="463.5" y1="311" x2="463.5" y2="328" stroke="#fa30f0" stroke-width="0.8"/>
<line x1="405.5" y1="254" x2="405.5" y2="259" stroke="#fa30f0" stroke-width="0.8"/>
<line x1="417.5" y1="323" x2="417.5" y2="341" stroke="#fa30f0" stroke-width="0.8"/>
<line x1="438.5" y1="237" x2="438.5" y2="254" stroke="#fa30f0" stroke-width="0.8"/>
<line x1="427.5" y1="230" x2="427.5" y2="237" stroke="#fa30f0" stroke-width="0.8"/>
<line x1="411.5" y1="273" x2="411.5" y2="285" stroke="#fa30f0" stroke-width="0.8"/>
<line x1="426.5" y1="226" x2="426.5" y2="234" stroke="#fa30f0" stroke-width="0.8"/>
<line x1="385" y1="338" x2="385" y2="347" stroke="#fa30f0" stroke-width="1.4"/>
<line x1="388.5" y1="183" x2="388.5" y2="192" stroke="#fa30f0" stroke-width="0.8"/>
<line x1="395.5" y1="343" x2="395.5" y2="348" stroke="#fa30f0" stroke-width="0.8"/>
<line x1="448.5" y1="354" x2="448.5" y2="366" stroke="#fa30f0" stroke-width="0.8"/>
<line x1="378.5" y1="271" x2="378.5" y2="275" stroke="#fa30f0" stroke-width="0.8"/>
<line x1="461.5" y1="241" x2="461.5" y2="258" stroke="#fa30f0" stroke-width="0.8"/>
<line x1="400" y1="290" x2="400" y2="293" stroke="#fa30f0" stroke-width="1.4"/>
<line x1="475.5" y1="256" x2="475.5" y2="271" stroke="#fa30f0" stroke-width="0.8"/>
<line x1="400.5" y1="241" x2="400.5" y2="249" stroke="#fa30f0" stroke-width="0.8"/>
<line x1="446.5" y1="304" x2="446.5" y2="321" stroke="#fa30f0" stroke-width="0.8"/>
<line x1="390.5" y1="248" x2="390.5" y2="252" stroke="#fa30f0" stroke-width="0.8"/>
<line x1="401" y1="266" x2="401" y2="284" stroke="#fa30f0" stroke-width="1.4"/>
<line x1="475.5" y1="291" x2="475.5" y2="298" stroke="#fa30f0" stroke-width="0.8"/>
<line x1="428.5" y1="202" x2="428.5" y2="212" stroke="#fa30f0" stroke-width="0.8"/>
<line x1="479.5" y1="335" x2="479.5" y2="348" stroke="#fa30f0" stroke-width="0.8"/>
<line x1="470.5" y1="306" x2="470.5" y2="321" stroke="#fa30f0" stroke-width="0.8"/>
<line x1="383.5" y1="250" x2="383.5" y2="257" stroke="#fa30f0" stroke-width="0.8"/>
<line x1="361.5" y1="302" x2="361.5" y2="314" stroke="#fa30f0" stroke-width="0.8"/>
<line x1="393.5" y1="217" x2="393.5" y2="228" stroke="#fa30f0" stroke-width="0.8"/>
<line x1="437" y1="180" x2="437" y2="197" stroke="#fa30f0" stroke-width="1.4"/>
<line x1="367.5" y1="309" x2="367.5" y2="313" stroke="#fa30f0" stroke-width="0.8"/>
<line x1="479.5" y1="259" x2="479.5" y2="264" stroke="#fa30f0" stroke-width="0.8"/>
<line x1="436.5" y1="257" x2="436.5" y2="271" stroke="#fa30f0" stroke-width="0.8"/>
<line x1="443.5" y1="238" x2="443.5" y2="243" stroke="#fa30f0" stroke-width="0.8"/>
<line x1="442.5" y1="331" x2="442.5" y2="348" stroke="#fa30f0" stroke-width="0.8"/>
<line x1="462.5" y1="257" x2="462.5" y2="269" stroke="#fa30f0" stroke-width="0.8"/>
<line x1="425.5" y1="206" x2="425.5" y2="218" stroke="#fa30f0" stroke-width="0.8"/>
<line x1="480.5" y1="327" x2="480.5" y2="341" stroke="#fa30f0" stroke-width="0.8"/>
<line x1="438.5" y1="318" x2="438.5" y2="336" stroke="#fa30f0" stroke-width="0.8"/>
<line x1="400" y1="315" x2="400" y2="319" stroke="#fa30f0" stroke-width="1.4"/>
<line x1="386.5" y1="214" x2="386.5" y2="217" stroke="#fa30f0" stroke-width="0.8"/>
<line x1="482.5" y1="277" x2="482.5" y2="283" stroke="#fa30f0" stroke-width="0.8"/>
<line x1="431" y1="305" x2="431" y2="317" stroke="#fa30f0" stroke-width="1.4"/>
<line x1="447.5" y1="237" x2="447.5" y2="245" stroke="#fa30f0" stroke-width="0.8"/>
<line x1="359.5" y1="270" x2="359.5" y2="283" stroke="#fa30f0" stroke-width="0.8"/>
<line x1="464.5" y1="179" x2="464.5" y2="191" stroke="#fa30f0" stroke-width="0.8"/>
<line x1="440.5" y1="362" x2="440.5" y2="369" stroke="#fa30f0" stroke-width="0.8"/>
<line x1="424.5" y1="184" x2="424.5" y2="193" stroke="#fa30f0" stroke-width="0.8"/>
<line x1="439.5" y1="325" x2="439.5" y2="331" stroke="#fa30f0" stroke-width="0.8"/>
<line x1="424" y1="325" x2="424" y2="333" stroke="#fa30f0" stroke-width="1.4"/>
<line x1="437.5" y1="320" x2="437.5" y2="323" stroke="#fa30f0" stroke-width="0.8"/>
<line x1="385.5" y1="366" x2="385.5" y2="368" stroke="#fa30f0" stroke-width="0.8"/>
<line x1="389.5" y1="184" x2="389.5" y2="192" stroke="#fa30f0" stroke-width="0.8"/>
<line x1="429.5" y1="226" x2="429.5" y2="243" stroke="#fa30f0" stroke-width="0.8"/>
<line x1="395.5" y1="237" x2="395.5" y2="243" stroke="#fa30f0" stroke-width="0.8"/>
<line x1="419.5" y1="197" x2="419.5" y2="201" stroke="#fa30f0" stroke-width="0.8"/>
<line x1="361.5" y1="260" x2="361.5" y2="278" stroke="#fa30f0" stroke-width="0.8"/>
<line x1="363.5" y1="287" x2="363.5" y2="292" stroke="#fa30f0" stroke-width="0.8"/>
<line x1="381.5" y1="353" x2="381.5" y2="360" stroke="#fa30f0" stroke-width="0.8"/>
<line x1="380.5" y1="348" x2="380.5" y2="358" stroke="#fa30f0" stroke-width="0.8"/>
<line x1="453.5" y1="227" x2="453.5" y2="235" stroke="#fa30f0" stroke-width="0.8"/>
<line x1="403.5" y1="198" x2="403.5" y2="204" stroke="#fa30f0" stroke-width="0.8"/>
<line x1="393" y1="312" x2="393" y2="323" stroke="#fa30f0" stroke-width="1.4"/>
<line x1="375.5" y1="329" x2="375.5" y2="344" stroke="#fa30f0" stroke-width="0.8"/>
<line x1="464.5" y1="192" x2="464.5" y2="202" stroke="#fa30f0" stroke-width="0.8"/>
<line x1="395.5" y1="210" x2="395.5" y2="222" stroke="#fa30f0" stroke-width="0.8"/>
<line x1="464.5" y1="280" x2="464.5" y2="291" stroke="#fa30f0" stroke-width="0.8"/>
<line x1="389.5" y1="302" x2="389.5" y2="308" stroke="#fa30f0" stroke-width="0.8"/>
<line x1="463.5" y1="325" x2="463.5" y2="331" stroke="#fa30f0" stroke-width="0.8"/>
<line x1="435.5" y1="321" x2="435.5" y2="339" stroke="#fa30f0" stroke-width="0.8"/>
<line x1="388" y1="207" x2="388" y2="211" stroke="#fa30f0" stroke-width="1.4"/>
<line x1="442.5" y1="338" x2="442.5" y2="347" stroke="#fa30f0" stroke-width="0.8"/>
<line x1="451.5" y1="287" x2="451.5" y2="293" stroke="#fa30f0" stroke-width="0.8"/>
<line x1="398.5" y1="332" x2="398.5" y2="344" stroke="#fa30f0" stroke-width="0.8"/>
<line x1="458.5" y1="257" x2="458.5" y2="272" stroke="#fa30f0" stroke-width="0.8"/>
<line x1="415.5" y1="245" x2="415.5" y2="252" stroke="#fa30f0" stroke-width="0.8"/>
<line x1="472.5" y1="236" x2="472.5" y2="252" stroke="#fa30f0" stroke-width="0.8"/>
<line x1="450.5" y1="235" x2="450.5" y2="251" stroke="#fa30f0" stroke-width="0.8"/>
<line x1="427.5" y1="331" x2="427.5" y2="348" stroke="#fa30f0" stroke-width="0.8"/>
<line x1="424.5" y1="258" x2="424.5" y2="270" stroke="#fa30f0" stroke-width="0.8"/>
<line x1="442" y1="297" x2="442" y2="306" stroke="#fa30f0" stroke-width="1.4"/>
<line x1="435" y1="200" x2="435" y2="210" stroke="#fa30f0" stroke-width="1.4"/>
<line x1="401" y1="341" x2="401" y2="357" stroke="#fa30f0" stroke-width="1.4"/>
<line x1="474.5" y1="341" x2="474.5" y2="359" stroke="#fa30f0" stroke-width="0.8"/>
<line x1="378.5" y1="287" x2="378.5" y2="301" stroke="#fa30f0" stroke-width="0.8"/>
<line x1="387" y1="270" x2="387" y2="282" stroke="#fa30f0" stroke-width="1.4"/>
<line x1="386.5" y1="299" x2="386.5" y2="303" stroke="#fa30f0" stroke-width="0.8"/>
<line x1="393" y1="294" x2="393" y2="309" stroke="#fa30f0" stroke-width="1.4"/>
<line x1="460.5" y1="234" x2="460.5" y2="247" stroke="#fa30f0" stroke-width="0.8"/>
<line x1="407.5" y1="332" x2="407.5" y2="342" stroke="#fa30f0" stroke-width="0.8"/>
<line x1="417.5" y1="242" x2="417.5" y2="253" stroke="#fa30f0" stroke-width="0.8"/>
<line x1="456.5" y1="232" x2="456.5" y2="249" stroke="#fa30f0" stroke-width="0.8"/>
<line x1="416.5" y1="207" x2="416.5" y2="211" stroke="#fa30f0" stroke-width="0.8"/>
<line x1="399.5" y1="355" x2="399.5" y2="364" stroke="#fa30f0" stroke-width="0.8"/>
<line x1="396.5" y1="282" x2="396.5" y2="293" stroke="#fa30f0" stroke-width="0.8"/>
<line x1="397.5" y1="177" x2="397.5" y2="183" stroke="#fa30f0" stroke-width="0.8"/>
<line x1="482.5" y1="205" x2="482.5" y2="208" stroke="#fa30f0" stroke-width="0.8"/>
<line x1="366.5" y1="301" x2="366.5" y2="316" stroke="#fa30f0" stroke-width="0.8"/>
<line x1="376.5" y1="254" x2="376.5" y2="261" stroke="#fa30f0" stroke-width="0.8"/>
<line x1="466.5" y1="321" x2="466.5" y2="331" stroke="#fa30f0" stroke-width="0.8"/>
<line x1="386.5" y1="337" x2="386.5" y2="342" stroke="#fa30f0" stroke-width="0.8"/>
<line x1="425.5" y1="313" x2="425.5" y2="331" stroke="#fa30f0" stroke-width="0.8"/>
<line x1="478.5" y1="207" x2="478.5" y2="222" stroke="#fa30f0" stroke-width="0.8"/>
<line x1="474" y1="329" x2="474" y2="342" stroke="#fa30f0" stroke-width="1.4"/>
<line x1="447.5" y1="332" x2="447.5" y2="343" stroke="#fa30f0" stroke-width="0.8"/>
<line x1="435.5" y1="312" x2="435.5" y2="321" stroke="#fa30f0" stroke-width="0.8"/>
<line x1="436.5" y1="194" x2="436.5" y2="204" stroke="#fa30f0" stroke-width="0.8"/>
<line x1="400.5" y1="358" x2="400.5" y2="366" stroke="#fa30f0" stroke-width="0.8"/>
<line x1="424" y1="220" x2="424" y2="230" stroke="#fa30f0" stroke-width="1.4"/>
<line x1="480.5" y1="236" x2="480.5" y2="239" stroke="#fa30f0" stroke-width="0.8"/>
<line x1="437.5" y1="245" x2="437.5" y2="259" stroke="#fa30f0" stroke-width="0.8"/>
<line x1="388.5" y1="286" x2="388.5" y2="294" stroke="#fa30f0" stroke-width="0.8"/>
<line x1="473.5" y1="277" x2="473.5" y2="291" stroke="#fa30f0" stroke-width="0.8"/>
<line x1="483" y1="340" x2="483" y2="354" stroke="#fa30f0" stroke-width="1.4"/>
<line x1="475.5" y1="224" x2="475.5" y2="233" stroke="#fa30f0" stroke-width="0.8"/>
<line x1="441" y1="346" x2="441" y2="352" stroke="#fa30f0" stroke-width="1.4"/>
<line x1="399.5" y1="345" x2="399.5" y2="360" stroke="#fa30f0" stroke-width="0.8"/>
<line x1="469.5" y1="197" x2="469.5" y2="210" stroke="#fa30f0" stroke-width="0.8"/>
<line x1="463" y1="240" x2="463" y2="246" stroke="#fa30f0" stroke-width="1.4"/>
<line x1="398.5" y1="290" x2="398.5" y2="296" stroke="#fa30f0" stroke-width="0.8"/>
<line x1="381.5" y1="268" x2="381.5" y2="283" stroke="#fa30f0" stroke-width="0.8"/>
<line x1="388.5" y1="283" x2="388.5" y2="295" stroke="#fa30f0" stroke-width="0.8"/>
<line x1="467.5" y1="355" x2="467.5" y2="367" stroke="#fa30f0" stroke-width="0.8"/>
<line x1="471.5" y1="365" x2="471.5" y2="368" stroke="#fa30f0" stroke-width="0.8"/>
<line x1="462" y1="324" x2="462" y2="328" stroke="#fa30f0" stroke-width="1.4"/>
<line x1="451.5" y1="210" x2="451.5" y2="227" stroke="#fa30f0" stroke-width="0.8"/>
<line x1="414" y1="340" x2="414" y2="345" stroke="#fa30f0" stroke-width="1.4"/>
<line x1="405.5" y1="309" x2="405.5" y2="321" stroke="#fa30f0" stroke-width="0.8"/>
<line x1="407.5" y1="296" x2="407.5" y2="306" stroke="#fa30f0" stroke-width="0.8"/>
<line x1="477.5" y1="328" x2="477.5" y2="332" stroke="#fa30f0" stroke-width="0.8"/>
<line x1="382" y1="355" x2="382" y2="365" stroke="#fa30f0" stroke-width="1.4"/>
<line x1="379.5" y1="265" x2="379.5" y2="270" stroke="#fa30f0" stroke-width="0.8"/>
<line x1="467" y1="363" x2="467" y2="367" stroke="#fa30f0" stroke-width="1.4"/>
<line x1="379.5" y1="283" x2="379.5" y2="295" stroke="#fa30f0" stroke-width="0.8"/>
<line x1="402.5" y1="213" x2="402.5" y2="225" stroke="#fa30f0" stroke-width="0.8"/>
<line x1="408.5" y1="216" x2="408.5" y2="232" stroke="#fa30f0" stroke-width="0.8"/>
<line x1="440" y1="348" x2="440" y2="352" stroke="#fa30f0" stroke-width="1.4"/>
<line x1="456" y1="343" x2="456" y2="356" stroke="#fa30f0" stroke-width="1.4"/>
<line x1="467.5" y1="210" x2="467.5" y2="221" stroke="#fa30f0" stroke-width="0.8"/>
<line x1="393.5" y1="269" x2="393.5" y2="278" stroke="#fa30f0" stroke-width="0.8"/>
<line x1="398.5" y1="285" x2="398.5" y2="290" stroke="#fa30f0" stroke-width="0.8"/>
<line x1="396.5" y1="325" x2="396.5" y2="337" stroke="#fa30f0" stroke-width="0.8"/>
<line x1="438" y1="193" x2="438" y2="197" stroke="#fa30f0" stroke-width="1.4"/>
<line x1="427" y1="340" x2="427" y2="343" stroke="#fa30f0" stroke-width="1.4"/>
<line x1="478.5" y1="355" x2="478.5" y2="359" stroke="#fa30f0" stroke-width="0.8"/>
<line x1="416.5" y1="313" x2="416.5" y2="330" stroke="#fa30f0" stroke-width="0.8"/>
<line x1="380.5" y1="243" x2="380.5" y2="249" stroke="#fa30f0" stroke-width="0.8"/>
<line x1="475" y1="345" x2="475" y2="359" stroke="#fa30f0" stroke-width="1.4"/>
<line x1="433.5" y1="297" x2="433.5" y2="313" stroke="#fa30f0" stroke-width="0.8"/>
<line x1="424.5" y1="176" x2="424.5" y2="192" stroke="#fa30f0" stroke-width="0.8"/>
<line x1="413.5" y1="350" x2="413.5" y2="355" stroke="#fa30f0" stroke-width="0.8"/>
<line x1="477.5" y1="323" x2="477.5" y2="340" stroke="#fa30f0" stroke-width="0.8"/>
<line x1="441.5" y1="194" x2="441.5" y2="203" stroke="#fa30f0" stroke-width="0.8"/>
<line x1="423.5" y1="292" x2="423.5" y2="308" stroke="#fa30f0" stroke-width="0.8"/>
<line x1="370.5" y1="266" x2="370.5" y2="282" stroke="#fa30f0" stroke-width="0.8"/>
<line x1="457.5" y1="191" x2="457.5" y2="203" stroke="#fa30f0" stroke-width="0.8"/>
<line x1="467.5" y1="282" x2="467.5" y2="294" stroke="#fa30f0" stroke-width="0.8"/>
<line x1="373.5" y1="298" x2="373.5" y2="310" stroke="#fa30f0" stroke-width="0.8"/>
<line x1="473.5" y1="324" x2="473.5" y2="337" stroke="#fa30f0" stroke-width="0.8"/>
<line x1="400.5" y1="287" x2="400.5" y2="304" stroke="#fa30f0" stroke-width="0.8"/>
<line x1="409.5" y1="283" x2="409.5" y2="291" stroke="#fa30f0" stroke-width="0.8"/>
<line x1="477" y1="322" x2="477" y2="335" stroke="#fa30f0" stroke-width="1.4"/>
<line x1="465.5" y1="242" x2="465.5" y2="256" stroke="#fa30f0" stroke-width="0.8"/>
<line x1="391.5" y1="216" x2="391.5" y2="225" stroke="#fa30f0" stroke-width="0.8"/>
<line x1="409.5" y1="259" x2="409.5" y2="271" stroke="#fa30f0" stroke-width="0.8"/>
<line x1="442" y1="192" x2="442" y2="195" stroke="#fa30f0" stroke-width="1.4"/>
<line x1="396.5" y1="181" x2="396.5" y2="194" stroke="#fa30f0" stroke-width="0.8"/>
<line x1="398" y1="214" x2="398" y2="227" stroke="#fa30f0" stroke-width="1.4"/>
<line x1="434.5" y1="363" x2="434.5" y2="369" stroke="#fa30f0" stroke-width="0.8"/>
<line x1="383.5" y1="345" x2="383.5" y2="353" stroke="#fa30f0" stroke-width="0.8"/>
<line x1="480" y1="208" x2="480" y2="219" stroke="#fa30f0" stroke-width="1.4"/>
<line x1="456" y1="332" x2="456" y2="349" stroke="#fa30f0" stroke-width="1.4"/>
<line x1="472.5" y1="277" x2="472.5" y2="289" stroke="#fa30f0" stroke-width="0.8"/>
<line x1="480" y1="192" x2="480" y2="200" stroke="#fa30f0" stroke-width="1.4"/>
<line x1="437.5" y1="299" x2="437.5" y2="308" stroke="#fa30f0" stroke-width="0.8"/>
<line x1="409.5" y1="333" x2="409.5" y2="339" stroke="#fa30f0" stroke-width="0.8"/>
<line x1="367.5" y1="298" x2="367.5" y2="307" stroke="#fa30f0" stroke-width="0.8"/>
<line x1="420.5" y1="308" x2="420.5" y2="321" stroke="#fa30f0" stroke-width="0.8"/>
<line x1="410.5" y1="215" x2="410.5" y2="228" stroke="#fa30f0" stroke-width="0.8"/>
<line x1="374" y1="237" x2="374" y2="245" stroke="#fa30f0" stroke-width="1.4"/>
<line x1="440.5" y1="349" x2="440.5" y2="355" stroke="#fa30f0" stroke-width="0.8"/>
<line x1="461.5" y1="277" x2="461.5" y2="293" stroke="#fa30f0" stroke-width="0.8"/>
<line x1="430.5" y1="222" x2="430.5" y2="233" stroke="#fa30f0" stroke-width="0.8"/>
<line x1="427.5" y1="319" x2="427.5" y2="329" stroke="#fa30f0" stroke-width="0.8"/>
<line x1="437" y1="359" x2="437" y2="367" stroke="#fa30f0" stroke-width="1.4"/>
<line x1="374" y1="239" x2="374" y2="256" stroke="#fa30f0" stroke-width="1.4"/>
<line x1="454.5" y1="332" x2="454.5" y2="337" stroke="#fa30f0" stroke-width="0.8"/>
<line x1="363.5" y1="264" x2="363.5" y2="271" stroke="#fa30f0" stroke-width="0.8"/>
<line x1="388.5" y1="297" x2="388.5" y2="304" stroke="#fa30f0" stroke-width="0.8"/>
<line x1="434.5" y1="334" x2="434.5" y2="339" stroke="#fa30f0" stroke-width="0.8"/>
<line x1="473.5" y1="362" x2="473.5" y2="368" stroke="#fa30f0" stroke-width="0.8"/>
<line x1="448.5" y1="364" x2="448.5" y2="368" stroke="#fa30f0" stroke-width="0.8"/>
<line x1="406.5" y1="245" x2="406.5" y2="263" stroke="#fa30f0" stroke-width="0.8"/>
<line x1="412" y1="323" x2="412" y2="339" stroke="#fa30f0" stroke-width="1.4"/>
<line x1="378.5" y1="265" x2="378.5" y2="275" stroke="#fa30f0" stroke-width="0.8"/>
<line x1="387.5" y1="301" x2="387.5" y2="311" stroke="#fa30f0" stroke-width="0.8"/>
<line x1="376" y1="274" x2="376" y2="283" stroke="#fa30f0" stroke-width="1.4"/>
<line x1="440.5" y1="207" x2="440.5" y2="223" stroke="#fa30f0" stroke-width="0.8"/>
<line x1="386.5" y1="343" x2="386.5" y2="351" stroke="#fa30f0" stroke-width="0.8"/>
<line x1="474.5" y1="203" x2="474.5" y2="217" stroke="#fa30f0" stroke-width="0.8"/>
<line x1="406.5" y1="336" x2="406.5" y2="346" stroke="#fa30f0" stroke-width="0.8"/>
<line x1="445.5" y1="244" x2="445.5" y2="258" stroke="#fa30f0" stroke-width="0.8"/>
<line x1="410.5" y1="319" x2="410.5" y2="328" stroke="#fa30f0" stroke-width="0.8"/>
<line x1="475.5" y1="228" x2="475.5" y2="245" stroke="#fa30f0" stroke-width="0.8"/>
<line x1="428" y1="357" x2="428" y2="368" stroke="#fa30f0" stroke-width="1.4"/>
<line x1="479.5" y1="359" x2="479.5" y2="363" stroke="#fa30f0" stroke-width="0.8"/>
<line x1="453" y1="347" x2="453" y2="358" stroke="#fa30f0" stroke-width="1.4"/>
<line x1="377.5" y1="262" x2="377.5" y2="276" stroke="#fa30f0" stroke-width="0.8"/>
<line x1="450.5" y1="225" x2="450.5" y2="229" stroke="#fa30f0" stroke-width="0.8"/>
<line x1="374.5" y1="312" x2="374.5" y2="326" stroke="#fa30f0" stroke-width="0.8"/>
<line x1="476.5" y1="309" x2="476.5" y2="320" stroke="#fa30f0" stroke-width="0.8"/>
<line x1="458" y1="249" x2="458" y2="266" stroke="#fa30f0" stroke-width="1.4"/>
<line x1="384.5" y1="326" x2="384.5" y2="342" stroke="#fa30f0" stroke-width="0.8"/>
<line x1="448.5" y1="296" x2="448.5" y2="308" stroke="#fa30f0" stroke-width="0.8"/>
<line x1="429.5" y1="206" x2="429.5" y2="216" stroke="#fa30f0" stroke-width="0.8"/>
<line x1="402.5" y1="243" x2="402.5" y2="252" stroke="#fa30f0" stroke-width="0.8"/>
<line x1="395" y1="335" x2="395" y2="348" stroke="#fa30f0" stroke-width="1.4"/>
<line x1="453.5" y1="187" x2="453.5" y2="197" stroke="#fa30f0" stroke-width="0.8"/>
<line x1="409.5" y1="357" x2="409.5" y2="366" stroke="#fa30f0" stroke-width="0.8"/>
<line x1="399.5" y1="222" x2="399.5" y2="233" stroke="#fa30f0" stroke-width="0.8"/>
<line x1="476.5" y1="225" x2="476.5" y2="231" stroke="#fa30f0" stroke-width="0.8"/>
<line x1="460" y1="181" x2="460" y2="196" stroke="#fa30f0" stroke-width="1.4"/>
<line x1="454.5" y1="303" x2="454.5" y2="313" stroke="#fa30f0" stroke-width="0.8"/>
<line x1="451" y1="309" x2="451" y2="316" stroke="#fa30f0" stroke-width="1.4"/>
<line x1="430" y1="235" x2="430" y2="241" stroke="#fa30f0" stroke-width="1.4"/>
<line x1="452.5" y1="322" x2="452.5" y2="333" stroke="#fa30f0" stroke-width="0.8"/>
<line x1="392.5" y1="274" x2="392.5" y2="288" stroke="#fa30f0" stroke-width="0.8"/>
<line x1="405.5" y1="175" x2="405.5" y2="189" stroke="#fa30f0" stroke-width="0.8"/>
<line x1="476" y1="284" x2="476" y2="297" stroke="#fa30f0" stroke-width="1.4"/>
<line x1="431.5" y1="363" x2="431.5" y2="369" stroke="#fa30f0" stroke-width="0.8"/>
<line x1="372.5" y1="293" x2="372.5" y2="310" stroke="#fa30f0" stroke-width="0.8"/>
<line x1="452.5" y1="355" x2="452.5" y2="368" stroke="#fa30f0" stroke-width="0.8"/>
<line x1="436.5" y1="291" x2="436.5" y2="305" stroke="#fa30f0" stroke-width="0.8"/>
<line x1="425.5" y1="196" x2="425.5" y2="211" stroke="#fa30f0" stroke-width="0.8"/>
<line x1="368.5" y1="312" x2="368.5" y2="318" stroke="#fa30f0" stroke-width="0.8"/>
<line x1="467.5" y1="318" x2="467.5" y2="325" stroke="#fa30f0" stroke-width="0.8"/>
<line x1="418.5" y1="325" x2="418.5" y2="332" stroke="#fa30f0" stroke-width="0.8"/>
<line x1="386.5" y1="212" x2="386.5" y2="225" stroke="#fa30f0" stroke-width="0.8"/>
<line x1="463.5" y1="200" x2="463.5" y2="206" stroke="#fa30f0" stroke-width="0.8"/>
<line x1="446.5" y1="203" x2="446.5" y2="209" stroke="#fa30f0" stroke-width="0.8"/>
<line x1="381" y1="196" x2="381" y2="205" stroke="#fa30f0" stroke-width="1.4"/>
<line x1="453" y1="179" x2="453" y2="186" stroke="#fa30f0" stroke-width="1.4"/>
<line x1="382.5" y1="228" x2="382.5" y2="234" stroke="#fa30f0" stroke-width="0.8"/>
<line x1="460.5" y1="230" x2="460.5" y2="240" stroke="#fa30f0" stroke-width="0.8"/>
<line x1="407.5" y1="331" x2="407.5" y2="339" stroke="#fa30f0" stroke-width="0.8"/>
<line x1="385.5" y1="257" x2="385.5" y2="261" stroke="#fa30f0" stroke-width="0.8"/>
<line x1="433.5" y1="232" x2="433.5" y2="249" stroke="#fa30f0" stroke-width="0.8"/>
<line x1="403.5" y1="308" x2="403.5" y2="312" stroke="#fa30f0" stroke-width="0.8"/>
<line x1="430.5" y1="196" x2="430.5" y2="203" stroke="#fa30f0" stroke-width="0.8"/>
<line x1="445" y1="322" x2="445" y2="325" stroke="#fa30f0" stroke-width="1.4"/>
<line x1="456.5" y1="221" x2="456.5" y2="235" stroke="#fa30f0" stroke-width="0.8"/>
<line x1="393.5" y1="272" x2="393.5" y2="288" stroke="#fa30f0" stroke-width="0.8"/>
<line x1="440.5" y1="318" x2="440.5" y2="328" stroke="#fa30f0" stroke-width="0.8"/>
<line x1="443.5" y1="349" x2="443.5" y2="359" stroke="#fa30f0" stroke-width="0.8"/>
<line x1="386.5" y1="292" x2="386.5" y2="303" stroke="#fa30f0" stroke-width="0.8"/>
<line x1="406.5" y1="338" x2="406.5" y2="347" stroke="#fa30f0" stroke-width="0.8"/>
<line x1="447.5" y1="334" x2="447.5" y2="350" stroke="#fa30f0" stroke-width="0.8"/>
<line x1="474" y1="345" x2="474" y2="359" stroke="#fa30f0" stroke-width="1.4"/>
<line x1="359" y1="256" x2="359" y2="273" stroke="#fa30f0" stroke-width="1.4"/>
<line x1="402" y1="211" x2="402" y2="223" stroke="#fa30f0" stroke-width="1.4"/>
<line x1="361.5" y1="250" x2="361.5" y2="265" stroke="#fa30f0" stroke-width="0.8"/>
<line x1="456" y1="364" x2="456" y2="368" stroke="#fa30f0" stroke-width="1.4"/>
<line x1="399" y1="196" x2="399" y2="211" stroke="#fa30f0" stroke-width="1.4"/>
<line x1="385.5" y1="275" x2="385.5" y2="286" stroke="#fa30f0" stroke-width="0.8"/>
<line x1="433.5" y1="217" x2="433.5" y2="225" stroke="#fa30f0" stroke-width="0.8"/>
<line x1="394.5" y1="248" x2="394.5" y2="256" stroke="#fa30f0" stroke-width="0.8"/>
<line x1="407.5" y1="271" x2="407.5" y2="278" stroke="#fa30f0" stroke-width="0.8"/>
<line x1="410" y1="365" x2="410" y2="368" stroke="#fa30f0" stroke-width="1.4"/>
<line x1="452.5" y1="316" x2="452.5" y2="326" stroke="#fa30f0" stroke-width="0.8"/>
<line x1="360.5" y1="241" x2="360.5" y2="252" stroke="#fa30f0" stroke-width="0.8"/>
<line x1="413.5" y1="336" x2="413.5" y2="340" stroke="#fa30f0" stroke-width="0.8"/>
<line x1="440" y1="270" x2="440" y2="286" stroke="#fa30f0" stroke-width="1.4"/>
<line x1="386.5" y1="216" x2="386.5" y2="228" stroke="#fa30f0" stroke-width="0.8"/>
<line x1="413.5" y1="231" x2="413.5" y2="245" stroke="#fa30f0" stroke-width="0.8"/>
<line x1="441.5" y1="250" x2="441.5" y2="265" stroke="#fa30f0" stroke-width="0.8"/>
<line x1="401.5" y1="354" x2="401.5" y2="366" stroke="#fa30f0" stroke-width="0.8"/>
<line x1="420" y1="196" x2="420" y2="214" stroke="#fa30f0" stroke-width="1.4"/>
<line x1="441.5" y1="322" x2="441.5" y2="327" stroke="#fa30f0" stroke-width="0.8"/>
<line x1="466.5" y1="340" x2="466.5" y2="346" stroke="#fa30f0" stroke-width="0.8"/>
<line x1="442" y1="217" x2="442" y2="230" stroke="#fa30f0" stroke-width="1.4"/>
<line x1="426.5" y1="303" x2="426.5" y2="316" stroke="#fa30f0" stroke-width="0.8"/>
<line x1="434.5" y1="335" x2="434.5" y2="345" stroke="#fa30f0" stroke-width="0.8"/>
<line x1="411.5" y1="321" x2="411.5" y2="336" stroke="#fa30f0" stroke-width="0.8"/>
<line x1="374" y1="266" x2="374" y2="280" stroke="#fa30f0" stroke-width="1.4"/>
<line x1="436" y1="189" x2="436" y2="198" stroke="#fa30f0" stroke-width="1.4"/>
<line x1="438.5" y1="353" x2="438.5" y2="363" stroke="#fa30f0" stroke-width="0.8"/>
<line x1="406.5" y1="242" x2="406.5" y2="258" stroke="#fa30f0" stroke-width="0.8"/>
<line x1="427" y1="252" x2="427" y2="257" stroke="#fa30f0" stroke-width="1.4"/>
<line x1="422.5" y1="217" x2="422.5" y2="225" stroke="#fa30f0" stroke-width="0.8"/>
<line x1="467.5" y1="273" x2="467.5" y2="289" stroke="#fa30f0" stroke-width="0.8"/>
<line x1="391" y1="336" x2="391" y2="340" stroke="#fa30f0" stroke-width="1.4"/>
<line x1="456" y1="204" x2="456" y2="220" stroke="#fa30f0" stroke-width="1.4"/>
<line x1="391.5" y1="284" x2="391.5" y2="293" stroke="#fa30f0" stroke-width="0.8"/>
<line x1="434.5" y1="189" x2="434.5" y2="193" stroke="#fa30f0" stroke-width="0.8"/>
<line x1="373.5" y1="234" x2="373.5" y2="240" stroke="#fa30f0" stroke-width="0.8"/>
<line x1="421.5" y1="225" x2="421.5" y2="242" stroke="#fa30f0" stroke-width="0.8"/>
<line x1="403.5" y1="358" x2="403.5" y2="365" stroke="#fa30f0" stroke-width="0.8"/>
<line x1="461.5" y1="358" x2="461.5" y2="361" stroke="#fa30f0" stroke-width="0.8"/>
<line x1="471" y1="354" x2="471" y2="366" stroke="#fa30f0" stroke-width="1.4"/>
<line x1="478.5" y1="237" x2="478.5" y2="244" stroke="#fa30f0" stroke-width="0.8"/>
<line x1="366.5" y1="279" x2="366.5" y2="288" stroke="#fa30f0" stroke-width="0.8"/>
<line x1="457.5" y1="193" x2="457.5" y2="197" stroke="#fa30f0" stroke-width="0.8"/>
<line x1="394.5" y1="280" x2="394.5" y2="297" stroke="#fa30f0" stroke-width="0.8"/>
<line x1="367" y1="274" x2="367" y2="282" stroke="#fa30f0" stroke-width="1.4"/>
<line x1="375.5" y1="302" x2="375.5" y2="320" stroke="#fa30f0" stroke-width="0.8"/>
<line x1="462.5" y1="340" x2="462.5" y2="354" stroke="#fa30f0" stroke-width="0.8"/>
<line x1="441" y1="338" x2="441" y2="351" stroke="#fa30f0" stroke-width="1.4"/>
<line x1="434.5" y1="180" x2="434.5" y2="188" stroke="#fa30f0" stroke-width="0.8"/>
<line x1="469" y1="208" x2="469" y2="225" stroke="#fa30f0" stroke-width="1.4"/>
<line x1="405" y1="258" x2="405" y2="262" stroke="#fa30f0" stroke-width="1.4"/>
<line x1="376.5" y1="279" x2="376.5" y2="289" stroke="#fa30f0" stroke-width="0.8"/>
<line x1="439.5" y1="214" x2="439.5" y2="225" stroke="#fa30f0" stroke-width="0.8"/>
<line x1="474.5" y1="211" x2="474.5" y2="218" stroke="#fa30f0" stroke-width="0.8"/>
<line x1="379.5" y1="302" x2="379.5" y2="315" stroke="#fa30f0" stroke-width="0.8"/>
<line x1="430.5" y1="215" x2="430.5" y2="225" stroke="#fa30f0" stroke-width="0.8"/>
<line x1="441.5" y1="275" x2="441.5" y2="290" stroke="#fa30f0" stroke-width="0.8"/>
<line x1="459.5" y1="319" x2="459.5" y2="330" stroke="#fa30f0" stroke-width="0.8"/>
<line x1="393.5" y1="357" x2="393.5" y2="363" stroke="#fa30f0" stroke-width="0.8"/>
<line x1="450" y1="244" x2="450" y2="251" stroke="#fa30f0" stroke-width="1.4"/>
<line x1="451.5" y1="205" x2="451.5" y2="218" stroke="#fa30f0" stroke-width="0.8"/>
<line x1="403.5" y1="311" x2="403.5" y2="315" stroke="#fa30f0" stroke-width="0.8"/>
<line x1="434.5" y1="346" x2="434.5" y2="352" stroke="#fa30f0" stroke-width="0.8"/>
<line x1="390.5" y1="272" x2="390.5" y2="284" stroke="#fa30f0" stroke-width="0.8"/>
<line x1="371.5" y1="277" x2="371.5" y2="284" stroke="#fa30f0" stroke-width="0.8"/>
<line x1="438.5" y1="319" x2="438.5" y2="328" stroke="#fa30f0" stroke-width="0.8"/>
<line x1="446" y1="238" x2="446" y2="243" stroke="#fa30f0" stroke-width="1.4"/>
<line x1="365.5" y1="239" x2="365.5" y2="245" stroke="#fa30f0" stroke-width="0.8"/>
<line x1="455.5" y1="357" x2="455.5" y2="365" stroke="#fa30f0" stroke-width="0.8"/>
<line x1="467.5" y1="288" x2="467.5" y2="295" stroke="#fa30f0" stroke-width="0.8"/>
<line x1="380" y1="253" x2="380" y2="259" stroke="#fa30f0" stroke-width="1.4"/>
<line x1="423.5" y1="335" x2="423.5" y2="352" stroke="#fa30f0" stroke-width="0.8"/>
<line x1="405" y1="198" x2="405" y2="208" stroke="#fa30f0" stroke-width="1.4"/>
<line x1="385.5" y1="199" x2="385.5" y2="217" stroke="#fa30f0" stroke-width="0.8"/>
<line x1="418.5" y1="277" x2="418.5" y2="287" stroke="#fa30f0" stroke-width="0.8"/>
<line x1="442.5" y1="356" x2="442.5" y2="361" stroke="#fa30f0" stroke-width="0.8"/>
<line x1="424.5" y1="319" x2="424.5" y2="333" stroke="#fa30f0" stroke-width="0.8"/>
<line x1="403" y1="245" x2="403" y2="249" stroke="#fa30f0" stroke-width="1.4"/>
<line x1="449" y1="296" x2="449" y2="304" stroke="#fa30f0" stroke-width="1.4"/>
<line x1="448.5" y1="172" x2="448.5" y2="177" stroke="#fa30f0" stroke-width="0.8"/>
<line x1="384.5" y1="312" x2="384.5" y2="328" stroke="#fa30f0" stroke-width="0.8"/>
<line x1="470.5" y1="184" x2="470.5" y2="200" stroke="#fa30f0" stroke-width="0.8"/>
<line x1="439.5" y1="340" x2="439.5" y2="351" stroke="#fa30f0" stroke-width="0.8"/>
<line x1="410.5" y1="299" x2="410.5" y2="303" stroke="#fa30f0" stroke-width="0.8"/>
<line x1="471.5" y1="185" x2="471.5" y2="197" stroke="#fa30f0" stroke-width="0.8"/>
<line x1="473.5" y1="335" x2="473.5" y2="340" stroke="#fa30f0" stroke-width="0.8"/>
<line x1="423.5" y1="190" x2="423.5" y2="198" stroke="#fa30f0" stroke-width="0.8"/>
<line x1="389.5" y1="215" x2="389.5" y2="226" stroke="#fa30f0" stroke-width="0.8"/>
<line x1="437" y1="341" x2="437" y2="348" stroke="#fa30f0" stroke-width="1.4"/>
<line x1="396" y1="290" x2="396" y2="303" stroke="#fa30f0" stroke-width="1.4"/>
<line x1="480.5" y1="333" x2="480.5" y2="344" stroke="#fa30f0" stroke-width="0.8"/>
<line x1="475.5" y1="331" x2="475.5" y2="346" stroke="#fa30f0" stroke-width="0.8"/>
<line x1="415.5" y1="234" x2="415.5" y2="246" stroke="#fa30f0" stroke-width="0.8"/>
<line x1="463.5" y1="197" x2="463.5" y2="206" stroke="#fa30f0" stroke-width="0.8"/>
<line x1="477.5" y1="216" x2="477.5" y2="226" stroke="#fa30f0" stroke-width="0.8"/>
<line x1="460.5" y1="193" x2="460.5" y2="208" stroke="#fa30f0" stroke-width="0.8"/>
<line x1="441.5" y1="327" x2="441.5" y2="335" stroke="#fa30f0" stroke-width="0.8"/>
<line x1="421.5" y1="186" x2="421.5" y2="198" stroke="#fa30f0" stroke-width="0.8"/>
<line x1="445.5" y1="356" x2="445.5" y2="361" stroke="#fa30f0" stroke-width="0.8"/>
<line x1="417.5" y1="241" x2="417.5" y2="248" stroke="#fa30f0" stroke-width="0.8"/>
<line x1="476.5" y1="267" x2="476.5" y2="282" stroke="#fa30f0" stroke-width="0.8"/>
<line x1="430" y1="243" x2="430" y2="257" stroke="#fa30f0" stroke-width="1.4"/>
<line x1="438.5" y1="204" x2="438.5" y2="222" stroke="#fa30f0" stroke-width="0.8"/>
<line x1="423.5" y1="233" x2="423.5" y2="249" stroke="#fa30f0" stroke-width="0.8"/>
<line x1="455" y1="223" x2="455" y2="239" stroke="#fa30f0" stroke-width="1.4"/>
<line x1="456.5" y1="228" x2="456.5" y2="242" stroke="#fa30f0" stroke-width="0.8"/>
<line x1="406.5" y1="245" x2="406.5" y2="260" stroke="#fa30f0" stroke-width="0.8"/>
<line x1="432.5" y1="190" x2="432.5" y2="195" stroke="#fa30f0" stroke-width="0.8"/>
<line x1="370.5" y1="250" x2="370.5" y2="263" stroke="#fa30f0" stroke-width="0.8"/>
<line x1="451.5" y1="336" x2="451.5" y2="343" stroke="#fa30f0" stroke-width="0.8"/>
<line x1="425.5" y1="331" x2="425.5" y2="338" stroke="#fa30f0" stroke-width="0.8"/>
<line x1="399.5" y1="303" x2="399.5" y2="310" stroke="#fa30f0" stroke-width="0.8"/>
<line x1="411.5" y1="205" x2="411.5" y2="218" stroke="#fa30f0" stroke-width="0.8"/>
<line x1="450.5" y1="193" x2="450.5" y2="210" stroke="#fa30f0" stroke-width="0.8"/>
<line x1="392.5" y1="178" x2="392.5" y2="186" stroke="#fa30f0" stroke-width="0.8"/>
<line x1="476.5" y1="361" x2="476.5" y2="368" stroke="#fa30f0" stroke-width="0.8"/>
<line x1="468.5" y1="348" x2="468.5" y2="359" stroke="#fa30f0" stroke-width="0.8"/>
<line x1="411.5" y1="339" x2="411.5" y2="343" stroke="#fa30f0" stroke-width="0.8"/>
<line x1="412.5" y1="308" x2="412.5" y2="315" stroke="#fa30f0" stroke-width="0.8"/>
<line x1="445.5" y1="197" x2="445.5" y2="204" stroke="#fa30f0" stroke-width="0.8"/>
<line x1="386" y1="227" x2="386" y2="242" stroke="#fa30f0" stroke-width="1.4"/>
<line x1="456.5" y1="327" x2="456.5" y2="336" stroke="#fa30f0" stroke-width="0.8"/>
<line x1="423.5" y1="330" x2="423.5" y2="346" stroke="#fa30f0" stroke-width="0.8"/>
<line x1="469.5" y1="209" x2="469.5" y2="213" stroke="#fa30f0" stroke-width="0.8"/>
<line x1="470.5" y1="245" x2="470.5" y2="254" stroke="#fa30f0" stroke-width="0.8"/>
<line x1="396" y1="175" x2="396" y2="189" stroke="#fa30f0" stroke-width="1.4"/>
<line x1="408.5" y1="274" x2="408.5" y2="279" stroke="#fa30f0" stroke-width="0.8"/>
<line x1="371.5" y1="285" x2="371.5" y2="292" stroke="#fa30f0" stroke-width="0.8"/>
<line x1="374.5" y1="285" x2="374.5" y2="295" stroke="#fa30f0" stroke-width="0.8"/>
<line x1="458.5" y1="362" x2="458.5" y2="369" stroke="#fa30f0" stroke-width="0.8"/>
<line x1="464.5" y1="343" x2="464.5" y2="358" stroke="#fa30f0" stroke-width="0.8"/>
<line x1="439.5" y1="255" x2="439.5" y2="269" stroke="#fa30f0" stroke-width="0.8"/>
<line x1="414.5" y1="318" x2="414.5" y2="330" stroke="#fa30f0" stroke-width="0.8"/>
<line x1="442.5" y1="173" x2="442.5" y2="182" stroke="#fa30f0" stroke-width="0.8"/>
<line x1="412.5" y1="286" x2="412.5" y2="292" stroke="#fa30f0" stroke-width="0.8"/>
<line x1="404.5" y1="256" x2="404.5" y2="261" stroke="#fa30f0" stroke-width="0.8"/>
<line x1="443.5" y1="220" x2="443.5" y2="223" stroke="#fa30f0" stroke-width="0.8"/>
<line x1="433.5" y1="269" x2="433.5" y2="282" stroke="#fa30f0" stroke-width="0.8"/>
<line x1="404.5" y1="318" x2="404.5" y2="333" stroke="#fa30f0" stroke-width="0.8"/>
<line x1="478.5" y1="282" x2="478.5" y2="290" stroke="#fa30f0" stroke-width="0.8"/>
<line x1="413.5" y1="261" x2="413.5" y2="271" stroke="#fa30f0" stroke-width="0.8"/>
<line x1="369" y1="270" x2="369" y2="282" stroke="#fa30f0" stroke-width="1.4"/>
<line x1="395" y1="234" x2="395" y2="238" stroke="#fa30f0" stroke-width="1.4"/>
<line x1="456.5" y1="233" x2="456.5" y2="249" stroke="#fa30f0" stroke-width="0.8"/>
<line x1="412.5" y1="292" x2="412.5" y2="305" stroke="#fa30f0" stroke-width="0.8"/>
<line x1="455.5" y1="313" x2="455.5" y2="322" stroke="#fa30f0" stroke-width="0.8"/>
<line x1="414.5" y1="185" x2="414.5" y2="190" stroke="#fa30f0" stroke-width="0.8"/>
<line x1="412.5" y1="193" x2="412.5" y2="201" stroke="#fa30f0" stroke-width="0.8"/>
<line x1="390.5" y1="247" x2="390.5" y2="261" stroke="#fa30f0" stroke-width="0.8"/>
<line x1="434" y1="364" x2="434" y2="369" stroke="#fa30f0" stroke-width="1.4"/>
<line x1="474.5" y1="309" x2="474.5" y2="323" stroke="#fa30f0" stroke-width="0.8"/>
<line x1="463.5" y1="329" x2="463.5" y2="338" stroke="#fa30f0" stroke-width="0.8"/>
<line x1="382" y1="201" x2="382" y2="207" stroke="#fa30f0" stroke-width="1.4"/>
<line x1="392" y1="196" x2="392" y2="206" stroke="#fa30f0" stroke-width="1.4"/>
<line x1="455" y1="339" x2="455" y2="349" stroke="#fa30f0" stroke-width="1.4"/>
<line x1="421" y1="301" x2="421" y2="317" stroke="#fa30f0" stroke-width="1.4"/>
<line x1="455" y1="190" x2="455" y2="195" stroke="#fa30f0" stroke-width="1.4"/>
<line x1="458.5" y1="248" x2="458.5" y2="252" stroke="#fa30f0" stroke-width="0.8"/>
<line x1="448.5" y1="280" x2="448.5" y2="288" stroke="#fa30f0" stroke-width="0.8"/>
<line x1="405.5" y1="176" x2="405.5" y2="182" stroke="#fa30f0" stroke-width="0.8"/>
<line x1="379.5" y1="307" x2="379.5" y2="317" stroke="#fa30f0" stroke-width="0.8"/>
<line x1="384" y1="277" x2="384" y2="283" stroke="#fa30f0" stroke-width="1.4"/>
<line x1="436.5" y1="327" x2="436.5" y2="336" stroke="#fa30f0" stroke-width="0.8"/>
<line x1="398.5" y1="360" x2="398.5" y2="367" stroke="#fa30f0" stroke-width="0.8"/>
<line x1="396.5" y1="214" x2="396.5" y2="226" stroke="#fa30f0" stroke-width="0.8"/>
<line x1="370.5" y1="236" x2="370.5" y2="253" stroke="#fa30f0" stroke-width="0.8"/>
<rect x="450" y="266" width="3" height="2" fill="#ff50ff"/>
<rect x="415" y="307" width="3" height="2" fill="#ff50ff"/>
<rect x="446" y="192" width="2" height="2" fill="#ff50ff"/>
<rect x="419" y="322" width="3" height="2" fill="#ff50ff"/>
<rect x="388" y="211" width="2" height="3" fill="#ff50ff"/>
<rect x="461" y="199" width="3" height="2" fill="#ff50ff"/>
<rect x="479" y="219" width="2" height="3" fill="#ff50ff"/>
<rect x="458" y="366" width="3" height="2" fill="#ff50ff"/>
<rect x="441" y="262" width="2" height="2" fill="#ff50ff"/>
<rect x="411" y="213" width="2" height="3" fill="#ff50ff"/>
<rect x="445" y="327" width="3" height="2" fill="#ff50ff"/>
<rect x="386" y="286" width="3" height="3" fill="#ff50ff"/>
<rect x="371" y="300" width="2" height="2" fill="#ff50ff"/>
<rect x="460" y="355" width="3" height="2" fill="#ff50ff"/>
<rect x="376" y="346" width="2" height="3" fill="#ff50ff"/>
<rect x="444" y="320" width="3" height="2" fill="#ff50ff"/>
<rect x="392" y="196" width="3" height="3" fill="#ff50ff"/>
<rect x="403" y="359" width="3" height="2" fill="#ff50ff"/>
<rect x="469" y="322" width="2" height="2" fill="#ff50ff"/>
<rect x="412" y="200" width="3" height="2" fill="#ff50ff"/>
<rect x="393" y="257" width="3" height="3" fill="#ff50ff"/>
<rect x="377" y="298" width="3" height="2" fill="#ff50ff"/>
<rect x="396" y="361" width="3" height="2" fill="#ff50ff"/>
<rect x="433" y="349" width="3" height="3" fill="#ff50ff"/>
<rect x="446" y="311" width="2" height="3" fill="#ff50ff"/>
<rect x="467" y="299" width="2" height="3" fill="#ff50ff"/>
<rect x="468" y="358" width="2" height="2" fill="#ff50ff"/>
<rect x="475" y="238" width="2" height="2" fill="#ff50ff"/>
<rect x="440" y="307" width="3" height="3" fill="#ff50ff"/>
<rect x="364" y="293" width="2" height="3" fill="#ff50ff"/>
<rect x="466" y="227" width="2" height="2" fill="#ff50ff"/>
<rect x="367" y="260" width="3" height="3" fill="#ff50ff"/>
<rect x="408" y="289" width="3" height="3" fill="#ff50ff"/>
<rect x="393" y="324" width="3" height="3" fill="#ff50ff"/>
<rect x="393" y="310" width="3" height="3" fill="#ff50ff"/>
<rect x="452" y="333" width="3" height="2" fill="#ff50ff"/>
<rect x="393" y="234" width="3" height="2" fill="#ff50ff"/>
<rect x="435" y="257" width="3" height="2" fill="#ff50ff"/>
<rect x="424" y="203" width="2" height="2" fill="#ff50ff"/>
<line x1="464" y1="307.5" x2="470" y2="307.5" stroke="#6a30ff" stroke-width="0.8"/>
<line x1="454" y1="205.5" x2="458" y2="205.5" stroke="#6a30ff" stroke-width="0.8"/>
<line x1="473" y1="318.5" x2="482" y2="318.5" stroke="#6a30ff" stroke-width="0.8"/>
<line x1="466" y1="368.5" x2="476" y2="368.5" stroke="#6a30ff" stroke-width="0.8"/>
<line x1="428" y1="264.5" x2="438" y2="264.5" stroke="#6a30ff" stroke-width="0.8"/>
<line x1="416" y1="220.5" x2="426" y2="220.5" stroke="#6a30ff" stroke-width="0.8"/>
<line x1="477" y1="226.5" x2="482" y2="226.5" stroke="#6a30ff" stroke-width="0.8"/>
<line x1="378" y1="244.5" x2="388" y2="244.5" stroke="#6a30ff" stroke-width="0.8"/>
<line x1="440" y1="354.5" x2="445" y2="354.5" stroke="#6a30ff" stroke-width="0.8"/>
<line x1="480" y1="255.5" x2="484" y2="255.5" stroke="#6a30ff" stroke-width="0.8"/>
<line x1="480" y1="323.5" x2="484" y2="323.5" stroke="#6a30ff" stroke-width="0.8"/>
<line x1="452" y1="354.5" x2="461" y2="354.5" stroke="#6a30ff" stroke-width="0.8"/>
<line x1="467" y1="366.5" x2="478" y2="366.5" stroke="#6a30ff" stroke-width="0.8"/>
<line x1="482" y1="223.5" x2="484" y2="223.5" stroke="#6a30ff" stroke-width="0.8"/>
<line x1="364" y1="312.5" x2="369" y2="312.5" stroke="#6a30ff" stroke-width="0.8"/>
<line x1="457" y1="184.5" x2="468" y2="184.5" stroke="#6a30ff" stroke-width="0.8"/>
<line x1="473" y1="181.5" x2="477" y2="181.5" stroke="#6a30ff" stroke-width="0.8"/>
<line x1="454" y1="182.5" x2="462" y2="182.5" stroke="#6a30ff" stroke-width="0.8"/>
<line x1="447" y1="306.5" x2="452" y2="306.5" stroke="#6a30ff" stroke-width="0.8"/>
<line x1="362" y1="317.5" x2="373" y2="317.5" stroke="#6a30ff" stroke-width="0.8"/>
<line x1="409" y1="188.5" x2="417" y2="188.5" stroke="#6a30ff" stroke-width="0.8"/>
<line x1="386" y1="238.5" x2="396" y2="238.5" stroke="#6a30ff" stroke-width="0.8"/>
<line x1="453" y1="323.5" x2="461" y2="323.5" stroke="#6a30ff" stroke-width="0.8"/>
<line x1="394" y1="312.5" x2="401" y2="312.5" stroke="#6a30ff" stroke-width="0.8"/>
<line x1="368" y1="292.5" x2="372" y2="292.5" stroke="#6a30ff" stroke-width="0.8"/>
<line x1="443" y1="340.5" x2="447" y2="340.5" stroke="#6a30ff" stroke-width="0.8"/>
<line x1="476" y1="198.5" x2="480" y2="198.5" stroke="#6a30ff" stroke-width="0.8"/>
<line x1="364" y1="290.5" x2="373" y2="290.5" stroke="#6a30ff" stroke-width="0.8"/>
<line x1="376" y1="332.5" x2="381" y2="332.5" stroke="#6a30ff" stroke-width="0.8"/></g>
<path d="M482 256 L493.7 256 L493.7 292 L482 292" fill="none" stroke="#c8207a" stroke-width="0.9"/>
<line x1="482" y1="270.5" x2="494" y2="270.5" stroke="#d82020" stroke-width="0.8" />
<line x1="482" y1="273.5" x2="513" y2="273.5" stroke="#2a2ae8" stroke-width="0.8" />
<line x1="482" y1="275.5" x2="513" y2="275.5" stroke="#2a2ae8" stroke-width="0.8" />
<line x1="482" y1="277.5" x2="513" y2="277.5" stroke="#2a2ae8" stroke-width="0.8" />
<text x="513.00" y="268.00" font-family="Liberation Mono" font-size="7" font-weight="400" fill="#2a2af0" text-anchor="start" textLength="46.50" lengthAdjust="spacingAndGlyphs" >0x7785fa0e0</text>
<text x="513.00" y="275.60" font-family="Liberation Mono" font-size="7" font-weight="400" fill="#2a2af0" text-anchor="start" textLength="40.00" lengthAdjust="spacingAndGlyphs" >pin_color</text>
<line x1="357.6" y1="183" x2="357.6" y2="371.5" stroke="#cc660e" stroke-width="1" />
<line x1="352.6" y1="189.3" x2="357.6" y2="189.3" stroke="#cc660e" stroke-width="0.9" />
<line x1="352.6" y1="202.3" x2="357.6" y2="202.3" stroke="#cc660e" stroke-width="0.9" />
<line x1="352.6" y1="215.3" x2="357.6" y2="215.3" stroke="#cc660e" stroke-width="0.9" />
<line x1="352.6" y1="228.3" x2="357.6" y2="228.3" stroke="#cc660e" stroke-width="0.9" />
<line x1="352.6" y1="241.3" x2="357.6" y2="241.3" stroke="#cc660e" stroke-width="0.9" />
<line x1="352.6" y1="254.3" x2="357.6" y2="254.3" stroke="#cc660e" stroke-width="0.9" />
<line x1="352.6" y1="267.3" x2="357.6" y2="267.3" stroke="#cc660e" stroke-width="0.9" />
<line x1="352.6" y1="280.3" x2="357.6" y2="280.3" stroke="#cc660e" stroke-width="0.9" />
<line x1="352.6" y1="293.3" x2="357.6" y2="293.3" stroke="#cc660e" stroke-width="0.9" />
<line x1="352.6" y1="306.3" x2="357.6" y2="306.3" stroke="#cc660e" stroke-width="0.9" />
<line x1="352.6" y1="319.3" x2="357.6" y2="319.3" stroke="#cc660e" stroke-width="0.9" />
<line x1="352.6" y1="332.3" x2="357.6" y2="332.3" stroke="#cc660e" stroke-width="0.9" />
<line x1="352.6" y1="345.3" x2="357.6" y2="345.3" stroke="#cc660e" stroke-width="0.9" />
<line x1="352.6" y1="358.3" x2="357.6" y2="358.3" stroke="#cc660e" stroke-width="0.9" />
<line x1="352.6" y1="183" x2="357.6" y2="183" stroke="#cc660e" stroke-width="0.9" />
<line x1="352.4" y1="371.5" x2="483.6" y2="371.5" stroke="#cc660e" stroke-width="1" />
<line x1="358.0" y1="371" x2="358.0" y2="375" stroke="#cc660e" stroke-width="0.9" />
<line x1="365.9" y1="371" x2="365.9" y2="375" stroke="#cc660e" stroke-width="0.9" />
<line x1="373.8" y1="371" x2="373.8" y2="375" stroke="#cc660e" stroke-width="0.9" />
<line x1="381.7" y1="371" x2="381.7" y2="375" stroke="#cc660e" stroke-width="0.9" />
<line x1="389.6" y1="371" x2="389.6" y2="375" stroke="#cc660e" stroke-width="0.9" />
<line x1="397.5" y1="371" x2="397.5" y2="375" stroke="#cc660e" stroke-width="0.9" />
<line x1="405.4" y1="371" x2="405.4" y2="375" stroke="#cc660e" stroke-width="0.9" />
<line x1="413.3" y1="371" x2="413.3" y2="375" stroke="#cc660e" stroke-width="0.9" />
<line x1="421.2" y1="371" x2="421.2" y2="375" stroke="#cc660e" stroke-width="0.9" />
<line x1="429.1" y1="371" x2="429.1" y2="375" stroke="#cc660e" stroke-width="0.9" />
<line x1="437.0" y1="371" x2="437.0" y2="375" stroke="#cc660e" stroke-width="0.9" />
<line x1="444.9" y1="371" x2="444.9" y2="375" stroke="#cc660e" stroke-width="0.9" />
<line x1="452.8" y1="371" x2="452.8" y2="375" stroke="#cc660e" stroke-width="0.9" />
<line x1="460.7" y1="371" x2="460.7" y2="375" stroke="#cc660e" stroke-width="0.9" />
<line x1="468.6" y1="371" x2="468.6" y2="375" stroke="#cc660e" stroke-width="0.9" />
<line x1="476.5" y1="371" x2="476.5" y2="375" stroke="#cc660e" stroke-width="0.9" />
<line x1="484.4" y1="371" x2="484.4" y2="375" stroke="#cc660e" stroke-width="0.9" />
<text x="399.60" y="383.00" font-family="Liberation Mono" font-size="8" font-weight="400" fill="#e0700a" text-anchor="start" textLength="36.00" lengthAdjust="spacingAndGlyphs" >W=78.445</text>
</g>
<rect x="32.00" y="93.80" width="110.00" height="343.20" fill="#eeeeee" />
<rect x="576.60" y="93.80" width="191.40" height="343.20" fill="#eeeeee" />
<text x="34.50" y="102.70" font-family="Liberation Sans" font-size="8.3" font-weight="400" fill="#303030" text-anchor="start" textLength="18.50" lengthAdjust="spacingAndGlyphs"  stroke="#303030" stroke-width="0.22">Cells</text>
<rect x="124.90" y="96.90" width="5.6" height="5.6" rx="1" fill="#d9d9d9" stroke="#b8b8b8" stroke-width="0.5"/>
<rect x="132.70" y="96.90" width="5.6" height="5.6" rx="1" fill="#d9d9d9" stroke="#b8b8b8" stroke-width="0.5"/>
<rect x="126.10" y="98.10" width="3.2" height="3.2" fill="none" stroke="#888" stroke-width="0.5"/>
<path d="M133.90 98.10 L137.10 101.30 M137.10 98.10 L133.90 101.30" stroke="#777" stroke-width="0.6"/>
<rect x="33.20" y="105.00" width="98.20" height="147.20" fill="#000" />
<rect x="131.40" y="105.00" width="8.20" height="147.20" fill="#e4e4e4" stroke="#cfcfcf" stroke-width="0.5"/>
<rect x="131.70" y="105.30" width="7.60" height="7.00" fill="#f7f7f7" />
<rect x="131.70" y="112.20" width="7.60" height="14.80" fill="#f8f8f8" stroke="#d6d6d6" stroke-width="0.4"/>
<rect x="131.70" y="244.90" width="7.60" height="7.00" fill="#f7f7f7" />
<path d="M133.70 109.40 L137.30 109.40 L135.50 107.60 Z" fill="#444"/>
<path d="M133.70 247.80 L137.30 247.80 L135.50 249.60 Z" fill="#444"/>
<path d="M37 107.00 L40 109.30 L37 111.60 Z" fill="#eee"/>
<text x="44.60" y="112.20" font-family="Liberation Sans" font-size="8.3" font-weight="700" fill="#ffffff" text-anchor="start" textLength="51.50" lengthAdjust="spacingAndGlyphs" >hello_morse</text>
<text x="44.50" y="121.40" font-family="Liberation Sans" font-size="8.3" font-weight="400" fill="#ececec" text-anchor="start" textLength="82.50" lengthAdjust="spacingAndGlyphs"  stroke="#ececec" stroke-width="0.08">sky130_ef_sc_hd__d...</text>
<rect x="69.92" y="122.00" width="4.46" height="1.00" fill="#d8d8d8" />
<rect x="81.07" y="122.00" width="4.46" height="1.00" fill="#d8d8d8" />
<rect x="93.55" y="122.00" width="4.46" height="1.00" fill="#d8d8d8" />
<rect x="106.93" y="122.00" width="4.46" height="1.00" fill="#d8d8d8" />
<rect x="111.39" y="122.00" width="4.46" height="1.00" fill="#d8d8d8" />
<text x="44.50" y="130.60" font-family="Liberation Sans" font-size="8.3" font-weight="400" fill="#ececec" text-anchor="start" textLength="82.50" lengthAdjust="spacingAndGlyphs"  stroke="#ececec" stroke-width="0.08">sky130_ef_sc_hd__d...</text>
<rect x="69.92" y="132.00" width="4.46" height="1.00" fill="#d8d8d8" />
<rect x="81.07" y="132.00" width="4.46" height="1.00" fill="#d8d8d8" />
<rect x="93.55" y="132.00" width="4.46" height="1.00" fill="#d8d8d8" />
<rect x="106.93" y="132.00" width="4.46" height="1.00" fill="#d8d8d8" />
<rect x="111.39" y="132.00" width="4.46" height="1.00" fill="#d8d8d8" />
<text x="44.50" y="139.80" font-family="Liberation Sans" font-size="8.3" font-weight="400" fill="#ececec" text-anchor="start" textLength="82.50" lengthAdjust="spacingAndGlyphs"  stroke="#ececec" stroke-width="0.08">sky130_ef_sc_hd__d...</text>
<rect x="69.92" y="141.00" width="4.46" height="1.00" fill="#d8d8d8" />
<rect x="81.07" y="141.00" width="4.46" height="1.00" fill="#d8d8d8" />
<rect x="93.55" y="141.00" width="4.46" height="1.00" fill="#d8d8d8" />
<rect x="106.93" y="141.00" width="4.46" height="1.00" fill="#d8d8d8" />
<rect x="111.39" y="141.00" width="4.46" height="1.00" fill="#d8d8d8" />
<text x="44.50" y="149.00" font-family="Liberation Sans" font-size="8.3" font-weight="400" fill="#ececec" text-anchor="start" textLength="82.50" lengthAdjust="spacingAndGlyphs"  stroke="#ececec" stroke-width="0.08">sky130_ef_sc_hd__d...</text>
<rect x="69.92" y="150.00" width="4.46" height="1.00" fill="#d8d8d8" />
<rect x="81.07" y="150.00" width="4.46" height="1.00" fill="#d8d8d8" />
<rect x="93.55" y="150.00" width="4.46" height="1.00" fill="#d8d8d8" />
<rect x="106.93" y="150.00" width="4.46" height="1.00" fill="#d8d8d8" />
<rect x="111.39" y="150.00" width="4.46" height="1.00" fill="#d8d8d8" />
<rect x="33.20" y="150.70" width="98.20" height="9.20" fill="#0a8ed6" />
<text x="44.50" y="158.20" font-family="Liberation Sans" font-size="8.3" font-weight="400" fill="#ececec" text-anchor="start" textLength="82.50" lengthAdjust="spacingAndGlyphs"  stroke="#ececec" stroke-width="0.08">sky130_ef_sc_hd__d...</text>
<rect x="69.92" y="159.00" width="4.46" height="1.00" fill="#d8d8d8" />
<rect x="81.07" y="159.00" width="4.46" height="1.00" fill="#d8d8d8" />
<rect x="93.55" y="159.00" width="4.46" height="1.00" fill="#d8d8d8" />
<rect x="106.93" y="159.00" width="4.46" height="1.00" fill="#d8d8d8" />
<rect x="111.39" y="159.00" width="4.46" height="1.00" fill="#d8d8d8" />
<text x="44.50" y="167.40" font-family="Liberation Sans" font-size="8.3" font-weight="400" fill="#ececec" text-anchor="start" textLength="82.50" lengthAdjust="spacingAndGlyphs"  stroke="#ececec" stroke-width="0.08">sky130_ef_sc_hd__fil...</text>
<rect x="69.51" y="168.00" width="4.39" height="1.00" fill="#d8d8d8" />
<rect x="80.48" y="168.00" width="4.39" height="1.00" fill="#d8d8d8" />
<rect x="92.77" y="168.00" width="4.39" height="1.00" fill="#d8d8d8" />
<rect x="105.94" y="168.00" width="4.39" height="1.00" fill="#d8d8d8" />
<rect x="110.33" y="168.00" width="4.39" height="1.00" fill="#d8d8d8" />
<text x="44.50" y="176.60" font-family="Liberation Sans" font-size="8.3" font-weight="400" fill="#ececec" text-anchor="start" textLength="82.50" lengthAdjust="spacingAndGlyphs"  stroke="#ececec" stroke-width="0.08">sky130_ef_sc_hd__fil...</text>
<rect x="69.51" y="178.00" width="4.39" height="1.00" fill="#d8d8d8" />
<rect x="80.48" y="178.00" width="4.39" height="1.00" fill="#d8d8d8" />
<rect x="92.77" y="178.00" width="4.39" height="1.00" fill="#d8d8d8" />
<rect x="105.94" y="178.00" width="4.39" height="1.00" fill="#d8d8d8" />
<rect x="110.33" y="178.00" width="4.39" height="1.00" fill="#d8d8d8" />
<text x="44.50" y="185.80" font-family="Liberation Sans" font-size="8.3" font-weight="400" fill="#ececec" text-anchor="start" textLength="82.50" lengthAdjust="spacingAndGlyphs"  stroke="#ececec" stroke-width="0.08">sky130_ef_sc_hd__fil...</text>
<rect x="69.51" y="187.00" width="4.39" height="1.00" fill="#d8d8d8" />
<rect x="80.48" y="187.00" width="4.39" height="1.00" fill="#d8d8d8" />
<rect x="92.77" y="187.00" width="4.39" height="1.00" fill="#d8d8d8" />
<rect x="105.94" y="187.00" width="4.39" height="1.00" fill="#d8d8d8" />
<rect x="110.33" y="187.00" width="4.39" height="1.00" fill="#d8d8d8" />
<text x="44.50" y="195.00" font-family="Liberation Sans" font-size="8.3" font-weight="400" fill="#ececec" text-anchor="start" textLength="82.50" lengthAdjust="spacingAndGlyphs"  stroke="#ececec" stroke-width="0.08">sky130_ef_sc_hd__fil...</text>
<rect x="69.51" y="196.00" width="4.39" height="1.00" fill="#d8d8d8" />
<rect x="80.48" y="196.00" width="4.39" height="1.00" fill="#d8d8d8" />
<rect x="92.77" y="196.00" width="4.39" height="1.00" fill="#d8d8d8" />
<rect x="105.94" y="196.00" width="4.39" height="1.00" fill="#d8d8d8" />
<rect x="110.33" y="196.00" width="4.39" height="1.00" fill="#d8d8d8" />
<text x="44.50" y="204.20" font-family="Liberation Sans" font-size="8.3" font-weight="400" fill="#ececec" text-anchor="start" textLength="82.50" lengthAdjust="spacingAndGlyphs"  stroke="#ececec" stroke-width="0.08">sky130_fd_sc_hd__a...</text>
<rect x="69.92" y="205.00" width="4.46" height="1.00" fill="#d8d8d8" />
<rect x="81.07" y="205.00" width="4.46" height="1.00" fill="#d8d8d8" />
<rect x="93.55" y="205.00" width="4.46" height="1.00" fill="#d8d8d8" />
<rect x="106.93" y="205.00" width="4.46" height="1.00" fill="#d8d8d8" />
<rect x="111.39" y="205.00" width="4.46" height="1.00" fill="#d8d8d8" />
<text x="44.50" y="213.40" font-family="Liberation Sans" font-size="8.3" font-weight="400" fill="#ececec" text-anchor="start" textLength="82.50" lengthAdjust="spacingAndGlyphs"  stroke="#ececec" stroke-width="0.08">sky130_fd_sc_hd__a...</text>
<rect x="69.92" y="214.00" width="4.46" height="1.00" fill="#d8d8d8" />
<rect x="81.07" y="214.00" width="4.46" height="1.00" fill="#d8d8d8" />
<rect x="93.55" y="214.00" width="4.46" height="1.00" fill="#d8d8d8" />
<rect x="106.93" y="214.00" width="4.46" height="1.00" fill="#d8d8d8" />
<rect x="111.39" y="214.00" width="4.46" height="1.00" fill="#d8d8d8" />
<text x="44.50" y="222.60" font-family="Liberation Sans" font-size="8.3" font-weight="400" fill="#ececec" text-anchor="start" textLength="82.50" lengthAdjust="spacingAndGlyphs"  stroke="#ececec" stroke-width="0.08">sky130_fd_sc_hd__a...</text>
<rect x="69.92" y="224.00" width="4.46" height="1.00" fill="#d8d8d8" />
<rect x="81.07" y="224.00" width="4.46" height="1.00" fill="#d8d8d8" />
<rect x="93.55" y="224.00" width="4.46" height="1.00" fill="#d8d8d8" />
<rect x="106.93" y="224.00" width="4.46" height="1.00" fill="#d8d8d8" />
<rect x="111.39" y="224.00" width="4.46" height="1.00" fill="#d8d8d8" />
<text x="44.50" y="231.80" font-family="Liberation Sans" font-size="8.3" font-weight="400" fill="#ececec" text-anchor="start" textLength="82.50" lengthAdjust="spacingAndGlyphs"  stroke="#ececec" stroke-width="0.08">sky130_fd_sc_hd__a...</text>
<rect x="69.92" y="233.00" width="4.46" height="1.00" fill="#d8d8d8" />
<rect x="81.07" y="233.00" width="4.46" height="1.00" fill="#d8d8d8" />
<rect x="93.55" y="233.00" width="4.46" height="1.00" fill="#d8d8d8" />
<rect x="106.93" y="233.00" width="4.46" height="1.00" fill="#d8d8d8" />
<rect x="111.39" y="233.00" width="4.46" height="1.00" fill="#d8d8d8" />
<text x="44.50" y="241.00" font-family="Liberation Sans" font-size="8.3" font-weight="400" fill="#ececec" text-anchor="start" textLength="82.50" lengthAdjust="spacingAndGlyphs"  stroke="#ececec" stroke-width="0.08">sky130_fd_sc_hd__a...</text>
<rect x="69.92" y="242.00" width="4.46" height="1.00" fill="#d8d8d8" />
<rect x="81.07" y="242.00" width="4.46" height="1.00" fill="#d8d8d8" />
<rect x="93.55" y="242.00" width="4.46" height="1.00" fill="#d8d8d8" />
<rect x="106.93" y="242.00" width="4.46" height="1.00" fill="#d8d8d8" />
<rect x="111.39" y="242.00" width="4.46" height="1.00" fill="#d8d8d8" />
<text x="44.50" y="250.20" font-family="Liberation Sans" font-size="8.3" font-weight="400" fill="#ececec" text-anchor="start" textLength="82.50" lengthAdjust="spacingAndGlyphs"  stroke="#ececec" stroke-width="0.08">sky130_fd_sc_hd__a...</text>
<rect x="69.92" y="251.00" width="4.46" height="1.00" fill="#d8d8d8" />
<rect x="81.07" y="251.00" width="4.46" height="1.00" fill="#d8d8d8" />
<rect x="93.55" y="251.00" width="4.46" height="1.00" fill="#d8d8d8" />
<rect x="106.93" y="251.00" width="4.46" height="1.00" fill="#d8d8d8" />
<rect x="111.39" y="251.00" width="4.46" height="1.00" fill="#d8d8d8" />
<text x="35.00" y="263.80" font-family="Liberation Sans" font-size="8.3" font-weight="400" fill="#303030" text-anchor="start" textLength="23.00" lengthAdjust="spacingAndGlyphs"  stroke="#303030" stroke-width="0.22">Levels</text>
<rect x="62.3" y="255.3" width="36.00" height="10.5" rx="1" fill="#fcfcfc" stroke="#c9c9c9" stroke-width="0.6"/>
<text x="64.70" y="263.80" font-family="Liberation Sans" font-size="8.3" font-weight="400" fill="#202020" text-anchor="start"  stroke="#202020" stroke-width="0.22">0</text>
<rect x="91.30" y="256.00" width="0.50" height="9.20" fill="#d4d4d4" />
<path d="M93.20 259.6 L96.20 259.6 L94.70 257.8 Z M93.20 261.6 L96.20 261.6 L94.70 263.4 Z" fill="#555"/>
<rect x="109.8" y="255.3" width="28.20" height="10.5" rx="1" fill="#fcfcfc" stroke="#c9c9c9" stroke-width="0.6"/>
<text x="112.20" y="263.80" font-family="Liberation Sans" font-size="8.3" font-weight="400" fill="#202020" text-anchor="start"  stroke="#202020" stroke-width="0.22">1</text>
<rect x="131.00" y="256.00" width="0.50" height="9.20" fill="#d4d4d4" />
<path d="M132.90 259.6 L135.90 259.6 L134.40 257.8 Z M132.90 261.6 L135.90 261.6 L134.40 263.4 Z" fill="#555"/>
<text x="101.80" y="263.80" font-family="Liberation Sans" font-size="8.3" font-weight="400" fill="#404040" text-anchor="start"  stroke="#404040" stroke-width="0.22">..</text>
<circle cx="83.50" cy="268.4" r="0.35" fill="#aaa"/>
<circle cx="85.70" cy="268.4" r="0.35" fill="#aaa"/>
<circle cx="87.90" cy="268.4" r="0.35" fill="#aaa"/>
<circle cx="90.10" cy="268.4" r="0.35" fill="#aaa"/>
<circle cx="92.30" cy="268.4" r="0.35" fill="#aaa"/>
<text x="34.50" y="278.20" font-family="Liberation Sans" font-size="8.3" font-weight="400" fill="#303030" text-anchor="start" textLength="31.50" lengthAdjust="spacingAndGlyphs"  stroke="#303030" stroke-width="0.22">Libraries</text>
<rect x="124.90" y="272.40" width="5.6" height="5.6" rx="1" fill="#d9d9d9" stroke="#b8b8b8" stroke-width="0.5"/>
<rect x="132.70" y="272.40" width="5.6" height="5.6" rx="1" fill="#d9d9d9" stroke="#b8b8b8" stroke-width="0.5"/>
<rect x="126.10" y="273.60" width="3.2" height="3.2" fill="none" stroke="#888" stroke-width="0.5"/>
<path d="M133.90 273.60 L137.10 276.80 M137.10 273.60 L133.90 276.80" stroke="#777" stroke-width="0.6"/>
<rect x="33.5" y="281" width="105.5" height="12.3" rx="1.5" fill="#f8f8f8" stroke="#c8c8c8" stroke-width="0.6"/>
<text x="35.60" y="290.30" font-family="Liberation Sans" font-size="8.3" font-weight="400" fill="#252525" text-anchor="start" textLength="92.00" lengthAdjust="spacingAndGlyphs"  stroke="#252525" stroke-width="0.22">Basic - Basic layout objec</text>
<path d="M131.2 286.4 L134.6 286.4 L132.9 288.3 Z" fill="#444"/>
<rect x="33.00" y="293.60" width="105.50" height="143.20" fill="#000" />
<rect x="33.00" y="293.70" width="105.50" height="9.40" fill="#0a8ed6" />
<text x="48.00" y="301.40" font-family="Liberation Sans" font-size="8.3" font-weight="400" fill="#f0f0f0" text-anchor="start" textLength="15.00" lengthAdjust="spacingAndGlyphs"  stroke="#f0f0f0" stroke-width="0.08">ARC</text>
<text x="48.00" y="310.60" font-family="Liberation Sans" font-size="8.3" font-weight="400" fill="#f0f0f0" text-anchor="start" textLength="26.00" lengthAdjust="spacingAndGlyphs"  stroke="#f0f0f0" stroke-width="0.08">CIRCLE</text>
<text x="48.00" y="319.80" font-family="Liberation Sans" font-size="8.3" font-weight="400" fill="#f0f0f0" text-anchor="start" textLength="26.70" lengthAdjust="spacingAndGlyphs"  stroke="#f0f0f0" stroke-width="0.08">DONUT</text>
<text x="48.00" y="329.00" font-family="Liberation Sans" font-size="8.3" font-weight="400" fill="#f0f0f0" text-anchor="start" textLength="28.60" lengthAdjust="spacingAndGlyphs"  stroke="#f0f0f0" stroke-width="0.08">ELLIPSE</text>
<text x="48.00" y="338.20" font-family="Liberation Sans" font-size="8.3" font-weight="400" fill="#f0f0f0" text-anchor="start" textLength="11.00" lengthAdjust="spacingAndGlyphs"  stroke="#f0f0f0" stroke-width="0.08">PIE</text>
<text x="48.00" y="347.40" font-family="Liberation Sans" font-size="8.3" font-weight="400" fill="#f0f0f0" text-anchor="start" textLength="50.00" lengthAdjust="spacingAndGlyphs"  stroke="#f0f0f0" stroke-width="0.08">ROUND_PATH</text>
<rect x="75.19" y="348.00" width="4.12" height="1.00" fill="#d8d8d8" />
<text x="48.00" y="356.60" font-family="Liberation Sans" font-size="8.3" font-weight="400" fill="#f0f0f0" text-anchor="start" textLength="66.70" lengthAdjust="spacingAndGlyphs"  stroke="#f0f0f0" stroke-width="0.08">ROUND_POLYGON</text>
<rect x="74.89" y="357.00" width="4.08" height="1.00" fill="#d8d8d8" />
<text x="48.00" y="365.80" font-family="Liberation Sans" font-size="8.3" font-weight="400" fill="#f0f0f0" text-anchor="start" textLength="55.00" lengthAdjust="spacingAndGlyphs"  stroke="#f0f0f0" stroke-width="0.08">STROKED_BOX</text>
<rect x="83.44" y="367.00" width="4.08" height="1.00" fill="#d8d8d8" />
<text x="48.00" y="375.00" font-family="Liberation Sans" font-size="8.3" font-weight="400" fill="#f0f0f0" text-anchor="start" textLength="74.50" lengthAdjust="spacingAndGlyphs"  stroke="#f0f0f0" stroke-width="0.08">STROKED_POLYGON</text>
<rect x="83.10" y="376.00" width="4.04" height="1.00" fill="#d8d8d8" />
<text x="48.00" y="384.20" font-family="Liberation Sans" font-size="8.3" font-weight="400" fill="#f0f0f0" text-anchor="start" textLength="18.80" lengthAdjust="spacingAndGlyphs"  stroke="#f0f0f0" stroke-width="0.08">TEXT</text>
<text x="581.70" y="102.70" font-family="Liberation Sans" font-size="8.3" font-weight="400" fill="#303030" text-anchor="start" textLength="23.50" lengthAdjust="spacingAndGlyphs"  stroke="#303030" stroke-width="0.22">Layers</text>
<rect x="752.70" y="96.90" width="5.6" height="5.6" rx="1" fill="#d9d9d9" stroke="#b8b8b8" stroke-width="0.5"/>
<rect x="760.60" y="96.90" width="5.6" height="5.6" rx="1" fill="#d9d9d9" stroke="#b8b8b8" stroke-width="0.5"/>
<rect x="753.90" y="98.10" width="3.2" height="3.2" fill="none" stroke="#888" stroke-width="0.5"/>
<path d="M761.80 98.10 L765.00 101.30 M765.00 98.10 L761.80 101.30" stroke="#777" stroke-width="0.6"/>
<rect x="580.20" y="105.20" width="179.60" height="236.80" fill="#000" />
<rect x="759.80" y="105.20" width="8.20" height="236.80" fill="#e4e4e4" stroke="#cfcfcf" stroke-width="0.5"/>
<rect x="760.10" y="105.50" width="7.60" height="7.00" fill="#f7f7f7" />
<rect x="760.10" y="112.50" width="7.60" height="115.00" fill="#f8f8f8" stroke="#d6d6d6" stroke-width="0.4"/>
<rect x="760.10" y="334.70" width="7.60" height="7.00" fill="#f7f7f7" />
<path d="M762.10 109.60 L765.70 109.60 L763.90 107.80 Z" fill="#444"/>
<path d="M762.10 337.60 L765.70 337.60 L763.90 339.40 Z" fill="#444"/>
<defs><clipPath id="lclip"><rect x="580.2" y="105.2" width="179.6" height="236.8"/></clipPath><pattern id="hf" width="4" height="4" patternUnits="userSpaceOnUse"><path d="M0 4 L4 0 M-1 1 L1 -1 M3 5 L5 3" stroke="#fff" stroke-width="0.8"/></pattern><pattern id="hb" width="4" height="4" patternUnits="userSpaceOnUse"><path d="M0 0 L4 4 M-1 3 L1 5 M3 -1 L5 1" stroke="#fff" stroke-width="0.8"/></pattern></defs>
<g clip-path="url(#lclip)">
<rect x="581.5" y="105.50" width="18.4" height="8.2" fill="#000" stroke="#4a44b0" stroke-width="1"/>
<clipPath id="sw0"><rect x="582" y="106.00" width="17.4" height="7.2"/></clipPath>
<path clip-path="url(#sw0)" d="M569.40 113.20 L576.60 106.00 M573.60 113.20 L580.80 106.00 M577.80 113.20 L585.00 106.00 M582.00 113.20 L589.20 106.00 M586.20 113.20 L593.40 106.00 M590.40 113.20 L597.60 106.00 M594.60 113.20 L601.80 106.00 M598.80 113.20 L606.00 106.00 M603.00 113.20 L610.20 106.00 M607.20 113.20 L614.40 106.00 M611.40 113.20 L618.60 106.00" stroke="#4a44b0" stroke-width="0.95" fill="none"/>
<text x="604.80" y="112.30" font-family="Liberation Sans" font-size="7.9" font-weight="700" fill="#ffffff" text-anchor="start" textLength="12.83" lengthAdjust="spacingAndGlyphs" >4/0</text>
<rect x="581.5" y="114.70" width="18.4" height="8.2" fill="#000" stroke="#3e64b0" stroke-width="1"/>
<clipPath id="sw1"><rect x="582" y="115.20" width="17.4" height="7.2"/></clipPath>
<path clip-path="url(#sw1)" d="M569.40 115.20 L576.60 122.40 M573.60 115.20 L580.80 122.40 M577.80 115.20 L585.00 122.40 M582.00 115.20 L589.20 122.40 M586.20 115.20 L593.40 122.40 M590.40 115.20 L597.60 122.40 M594.60 115.20 L601.80 122.40 M598.80 115.20 L606.00 122.40 M603.00 115.20 L610.20 122.40 M607.20 115.20 L614.40 122.40 M611.40 115.20 L618.60 122.40" stroke="#3e64b0" stroke-width="0.95" fill="none"/>
<text x="604.80" y="121.50" font-family="Liberation Sans" font-size="7.9" font-weight="700" fill="#ffffff" text-anchor="start" textLength="12.83" lengthAdjust="spacingAndGlyphs" >5/0</text>
<rect x="581.5" y="123.90" width="18.4" height="8.2" fill="#000" stroke="#b80c14" stroke-width="1"/>
<clipPath id="sw2"><rect x="582" y="124.40" width="17.4" height="7.2"/></clipPath>
<path clip-path="url(#sw2)" d="M569.40 131.60 L576.60 124.40 M573.60 131.60 L580.80 124.40 M577.80 131.60 L585.00 124.40 M582.00 131.60 L589.20 124.40 M586.20 131.60 L593.40 124.40 M590.40 131.60 L597.60 124.40 M594.60 131.60 L601.80 124.40 M598.80 131.60 L606.00 124.40 M603.00 131.60 L610.20 124.40 M607.20 131.60 L614.40 124.40 M611.40 131.60 L618.60 124.40" stroke="#b80c14" stroke-width="0.95" fill="none"/>
<text x="604.80" y="130.70" font-family="Liberation Sans" font-size="7.9" font-weight="700" fill="#ffffff" text-anchor="start" textLength="12.83" lengthAdjust="spacingAndGlyphs" >6/0</text>
<rect x="581.5" y="133.10" width="18.4" height="8.2" fill="#000" stroke="#b0106a" stroke-width="1"/>
<clipPath id="sw3"><rect x="582" y="133.60" width="17.4" height="7.2"/></clipPath>
<path clip-path="url(#sw3)" d="M569.40 133.60 L576.60 140.80 M573.60 133.60 L580.80 140.80 M577.80 133.60 L585.00 140.80 M582.00 133.60 L589.20 140.80 M586.20 133.60 L593.40 140.80 M590.40 133.60 L597.60 140.80 M594.60 133.60 L601.80 140.80 M598.80 133.60 L606.00 140.80 M603.00 133.60 L610.20 140.80 M607.20 133.60 L614.40 140.80 M611.40 133.60 L618.60 140.80" stroke="#b0106a" stroke-width="0.95" fill="none"/>
<text x="604.80" y="139.90" font-family="Liberation Sans" font-size="7.9" font-weight="700" fill="#ffffff" text-anchor="start" textLength="12.83" lengthAdjust="spacingAndGlyphs" >7/0</text>
<rect x="580.20" y="141.70" width="179.60" height="9.20" fill="#0a8ed6" />
<rect x="581.5" y="142.30" width="18.4" height="8.2" fill="#000" stroke="#7a18c8" stroke-width="1"/>
<clipPath id="sw4"><rect x="582" y="142.80" width="17.4" height="7.2"/></clipPath>
<path clip-path="url(#sw4)" d="M569.40 150.00 L576.60 142.80 M573.60 150.00 L580.80 142.80 M577.80 150.00 L585.00 142.80 M582.00 150.00 L589.20 142.80 M586.20 150.00 L593.40 142.80 M590.40 150.00 L597.60 142.80 M594.60 150.00 L601.80 142.80 M598.80 150.00 L606.00 142.80 M603.00 150.00 L610.20 142.80 M607.20 150.00 L614.40 142.80 M611.40 150.00 L618.60 142.80" stroke="#7a18c8" stroke-width="0.95" fill="none"/>
<text x="604.80" y="149.10" font-family="Liberation Sans" font-size="7.9" font-weight="700" fill="#ffffff" text-anchor="start" textLength="12.83" lengthAdjust="spacingAndGlyphs" >8/0</text>
<rect x="581.5" y="151.50" width="18.4" height="8.2" fill="#000" stroke="#5a10a8" stroke-width="1"/>
<clipPath id="sw5"><rect x="582" y="152.00" width="17.4" height="7.2"/></clipPath>
<path clip-path="url(#sw5)" d="M569.40 152.00 L576.60 159.20 M573.60 152.00 L580.80 159.20 M577.80 152.00 L585.00 159.20 M582.00 152.00 L589.20 159.20 M586.20 152.00 L593.40 159.20 M590.40 152.00 L597.60 159.20 M594.60 152.00 L601.80 159.20 M598.80 152.00 L606.00 159.20 M603.00 152.00 L610.20 159.20 M607.20 152.00 L614.40 159.20 M611.40 152.00 L618.60 159.20" stroke="#5a10a8" stroke-width="0.95" fill="none"/>
<text x="604.80" y="158.30" font-family="Liberation Sans" font-size="7.9" font-weight="700" fill="#ffffff" text-anchor="start" textLength="12.83" lengthAdjust="spacingAndGlyphs" >9/0</text>
<rect x="581.5" y="160.70" width="18.4" height="8.2" fill="#000" stroke="#1212c0" stroke-width="1"/>
<clipPath id="sw6"><rect x="582" y="161.20" width="17.4" height="7.2"/></clipPath>
<path clip-path="url(#sw6)" d="M569.40 168.40 L576.60 161.20 M573.60 168.40 L580.80 161.20 M577.80 168.40 L585.00 161.20 M582.00 168.40 L589.20 161.20 M586.20 168.40 L593.40 161.20 M590.40 168.40 L597.60 161.20 M594.60 168.40 L601.80 161.20 M598.80 168.40 L606.00 161.20 M603.00 168.40 L610.20 161.20 M607.20 168.40 L614.40 161.20 M611.40 168.40 L618.60 161.20" stroke="#1212c0" stroke-width="0.95" fill="none"/>
<text x="604.80" y="167.50" font-family="Liberation Sans" font-size="7.9" font-weight="700" fill="#ffffff" text-anchor="start" textLength="17.91" lengthAdjust="spacingAndGlyphs" >10/0</text>
<rect x="581.5" y="169.90" width="18.4" height="8.2" fill="#000" stroke="#1212c0" stroke-width="1"/>
<clipPath id="sw7"><rect x="582" y="170.40" width="17.4" height="7.2"/></clipPath>
<path clip-path="url(#sw7)" d="M569.40 170.40 L576.60 177.60 M573.60 170.40 L580.80 177.60 M577.80 170.40 L585.00 177.60 M582.00 170.40 L589.20 177.60 M586.20 170.40 L593.40 177.60 M590.40 170.40 L597.60 177.60 M594.60 170.40 L601.80 177.60 M598.80 170.40 L606.00 177.60 M603.00 170.40 L610.20 177.60 M607.20 170.40 L614.40 177.60 M611.40 170.40 L618.60 177.60" stroke="#1212c0" stroke-width="0.95" fill="none"/>
<text x="604.80" y="176.70" font-family="Liberation Sans" font-size="7.9" font-weight="700" fill="#ffffff" text-anchor="start" textLength="17.91" lengthAdjust="spacingAndGlyphs" >10/1</text>
<rect x="581.5" y="179.10" width="18.4" height="8.2" fill="#000" stroke="#1414c0" stroke-width="1"/>
<clipPath id="sw8"><rect x="582" y="179.60" width="17.4" height="7.2"/></clipPath>
<path clip-path="url(#sw8)" d="M569.40 186.80 L576.60 179.60 M573.60 186.80 L580.80 179.60 M577.80 186.80 L585.00 179.60 M582.00 186.80 L589.20 179.60 M586.20 186.80 L593.40 179.60 M590.40 186.80 L597.60 179.60 M594.60 186.80 L601.80 179.60 M598.80 186.80 L606.00 179.60 M603.00 186.80 L610.20 179.60 M607.20 186.80 L614.40 179.60 M611.40 186.80 L618.60 179.60" stroke="#1414c0" stroke-width="0.95" fill="none"/>
<text x="604.80" y="185.90" font-family="Liberation Sans" font-size="7.9" font-weight="700" fill="#ffffff" text-anchor="start" textLength="17.91" lengthAdjust="spacingAndGlyphs" >10/2</text>
<rect x="581.5" y="188.30" width="18.4" height="8.2" fill="#000" stroke="#3c1064" stroke-width="1"/>
<clipPath id="sw9"><rect x="582" y="188.80" width="17.4" height="7.2"/></clipPath>
<path clip-path="url(#sw9)" d="M569.40 188.80 L576.60 196.00 M573.60 188.80 L580.80 196.00 M577.80 188.80 L585.00 196.00 M582.00 188.80 L589.20 196.00 M586.20 188.80 L593.40 196.00 M590.40 188.80 L597.60 196.00 M594.60 188.80 L601.80 196.00 M598.80 188.80 L606.00 196.00 M603.00 188.80 L610.20 196.00 M607.20 188.80 L614.40 196.00 M611.40 188.80 L618.60 196.00" stroke="#3c1064" stroke-width="0.95" fill="none"/>
<text x="604.80" y="195.10" font-family="Liberation Sans" font-size="7.9" font-weight="700" fill="#ffffff" text-anchor="start" textLength="17.91" lengthAdjust="spacingAndGlyphs" >15/0</text>
<rect x="581.5" y="197.50" width="18.4" height="8.2" fill="#000" stroke="#c88410" stroke-width="1"/>
<clipPath id="sw10"><rect x="582" y="198.00" width="17.4" height="7.2"/></clipPath>
<path clip-path="url(#sw10)" d="M569.40 205.20 L576.60 198.00 M573.60 205.20 L580.80 198.00 M577.80 205.20 L585.00 198.00 M582.00 205.20 L589.20 198.00 M586.20 205.20 L593.40 198.00 M590.40 205.20 L597.60 198.00 M594.60 205.20 L601.80 198.00 M598.80 205.20 L606.00 198.00 M603.00 205.20 L610.20 198.00 M607.20 205.20 L614.40 198.00 M611.40 205.20 L618.60 198.00" stroke="#c88410" stroke-width="0.95" fill="none"/>
<text x="604.80" y="204.30" font-family="Liberation Sans" font-size="7.9" font-weight="700" fill="#ffffff" text-anchor="start" textLength="17.91" lengthAdjust="spacingAndGlyphs" >64/5</text>
<rect x="581.5" y="206.70" width="18.4" height="8.2" fill="#000" stroke="#c88410" stroke-width="1"/>
<clipPath id="sw11"><rect x="582" y="207.20" width="17.4" height="7.2"/></clipPath>
<path clip-path="url(#sw11)" d="M569.40 207.20 L576.60 214.40 M573.60 207.20 L580.80 214.40 M577.80 207.20 L585.00 214.40 M582.00 207.20 L589.20 214.40 M586.20 207.20 L593.40 214.40 M590.40 207.20 L597.60 214.40 M594.60 207.20 L601.80 214.40 M598.80 207.20 L606.00 214.40 M603.00 207.20 L610.20 214.40 M607.20 207.20 L614.40 214.40 M611.40 207.20 L618.60 214.40" stroke="#c88410" stroke-width="0.95" fill="none"/>
<text x="604.80" y="213.50" font-family="Liberation Sans" font-size="7.9" font-weight="700" fill="#ffffff" text-anchor="start" textLength="22.99" lengthAdjust="spacingAndGlyphs" >64/16</text>
<rect x="581.5" y="215.90" width="18.4" height="8.2" fill="#000" stroke="#c07c10" stroke-width="1"/>
<clipPath id="sw12"><rect x="582" y="216.40" width="17.4" height="7.2"/></clipPath>
<path clip-path="url(#sw12)" d="M569.40 223.60 L576.60 216.40 M573.60 223.60 L580.80 216.40 M577.80 223.60 L585.00 216.40 M582.00 223.60 L589.20 216.40 M586.20 223.60 L593.40 216.40 M590.40 223.60 L597.60 216.40 M594.60 223.60 L601.80 216.40 M598.80 223.60 L606.00 216.40 M603.00 223.60 L610.20 216.40 M607.20 223.60 L614.40 216.40 M611.40 223.60 L618.60 216.40" stroke="#c07c10" stroke-width="0.95" fill="none"/>
<text x="604.80" y="222.70" font-family="Liberation Sans" font-size="7.9" font-weight="700" fill="#ffffff" text-anchor="start" textLength="22.99" lengthAdjust="spacingAndGlyphs" >64/20</text>
<rect x="581.5" y="225.10" width="18.4" height="8.2" fill="#000" stroke="#c07c10" stroke-width="1"/>
<clipPath id="sw13"><rect x="582" y="225.60" width="17.4" height="7.2"/></clipPath>
<path clip-path="url(#sw13)" d="M569.40 225.60 L576.60 232.80 M573.60 225.60 L580.80 232.80 M577.80 225.60 L585.00 232.80 M582.00 225.60 L589.20 232.80 M586.20 225.60 L593.40 232.80 M590.40 225.60 L597.60 232.80 M594.60 225.60 L601.80 232.80 M598.80 225.60 L606.00 232.80 M603.00 225.60 L610.20 232.80 M607.20 225.60 L614.40 232.80 M611.40 225.60 L618.60 232.80" stroke="#c07c10" stroke-width="0.95" fill="none"/>
<text x="604.80" y="231.90" font-family="Liberation Sans" font-size="7.9" font-weight="700" fill="#ffffff" text-anchor="start" textLength="22.99" lengthAdjust="spacingAndGlyphs" >64/59</text>
<rect x="581.5" y="234.30" width="18.4" height="8.2" fill="#000" stroke="#c06410" stroke-width="1"/>
<clipPath id="sw14"><rect x="582" y="234.80" width="17.4" height="7.2"/></clipPath>
<path clip-path="url(#sw14)" d="M569.40 242.00 L576.60 234.80 M573.60 242.00 L580.80 234.80 M577.80 242.00 L585.00 234.80 M582.00 242.00 L589.20 234.80 M586.20 242.00 L593.40 234.80 M590.40 242.00 L597.60 234.80 M594.60 242.00 L601.80 234.80 M598.80 242.00 L606.00 234.80 M603.00 242.00 L610.20 234.80 M607.20 242.00 L614.40 234.80 M611.40 242.00 L618.60 234.80" stroke="#c06410" stroke-width="0.95" fill="none"/>
<text x="604.80" y="241.10" font-family="Liberation Sans" font-size="7.9" font-weight="700" fill="#ffffff" text-anchor="start" textLength="22.99" lengthAdjust="spacingAndGlyphs" >65/20</text>
<rect x="581.5" y="243.50" width="18.4" height="8.2" fill="#000" stroke="#b85c10" stroke-width="1"/>
<clipPath id="sw15"><rect x="582" y="244.00" width="17.4" height="7.2"/></clipPath>
<path clip-path="url(#sw15)" d="M569.40 244.00 L576.60 251.20 M573.60 244.00 L580.80 251.20 M577.80 244.00 L585.00 251.20 M582.00 244.00 L589.20 251.20 M586.20 244.00 L593.40 251.20 M590.40 244.00 L597.60 251.20 M594.60 244.00 L601.80 251.20 M598.80 244.00 L606.00 251.20 M603.00 244.00 L610.20 251.20 M607.20 244.00 L614.40 251.20 M611.40 244.00 L618.60 251.20" stroke="#b85c10" stroke-width="0.95" fill="none"/>
<text x="604.80" y="250.30" font-family="Liberation Sans" font-size="7.9" font-weight="400" fill="#8a8a8a" text-anchor="start" textLength="21.03" lengthAdjust="spacingAndGlyphs"  stroke="#8a8a8a" stroke-width="0.22">65/44</text>
<rect x="581.5" y="252.70" width="18.4" height="8.2" fill="#000" stroke="#0e6468" stroke-width="1"/>
<clipPath id="sw16"><rect x="582" y="253.20" width="17.4" height="7.2"/></clipPath>
<path clip-path="url(#sw16)" d="M569.40 260.40 L576.60 253.20 M573.60 260.40 L580.80 253.20 M577.80 260.40 L585.00 253.20 M582.00 260.40 L589.20 253.20 M586.20 260.40 L593.40 253.20 M590.40 260.40 L597.60 253.20 M594.60 260.40 L601.80 253.20 M598.80 260.40 L606.00 253.20 M603.00 260.40 L610.20 253.20 M607.20 260.40 L614.40 253.20 M611.40 260.40 L618.60 253.20" stroke="#0e6468" stroke-width="0.95" fill="none"/>
<text x="604.80" y="259.50" font-family="Liberation Sans" font-size="7.9" font-weight="700" fill="#ffffff" text-anchor="start" textLength="22.99" lengthAdjust="spacingAndGlyphs" >66/15</text>
<rect x="581.5" y="261.90" width="18.4" height="8.2" fill="#000" stroke="#0e6468" stroke-width="1"/>
<clipPath id="sw17"><rect x="582" y="262.40" width="17.4" height="7.2"/></clipPath>
<path clip-path="url(#sw17)" d="M569.40 262.40 L576.60 269.60 M573.60 262.40 L580.80 269.60 M577.80 262.40 L585.00 269.60 M582.00 262.40 L589.20 269.60 M586.20 262.40 L593.40 269.60 M590.40 262.40 L597.60 269.60 M594.60 262.40 L601.80 269.60 M598.80 262.40 L606.00 269.60 M603.00 262.40 L610.20 269.60 M607.20 262.40 L614.40 269.60 M611.40 262.40 L618.60 269.60" stroke="#0e6468" stroke-width="0.95" fill="none"/>
<text x="604.80" y="268.70" font-family="Liberation Sans" font-size="7.9" font-weight="700" fill="#ffffff" text-anchor="start" textLength="22.99" lengthAdjust="spacingAndGlyphs" >66/20</text>
<rect x="581.5" y="271.10" width="18.4" height="8.2" fill="#000" stroke="#0e6468" stroke-width="1"/>
<clipPath id="sw18"><rect x="582" y="271.60" width="17.4" height="7.2"/></clipPath>
<path clip-path="url(#sw18)" d="M569.40 278.80 L576.60 271.60 M573.60 278.80 L580.80 271.60 M577.80 278.80 L585.00 271.60 M582.00 278.80 L589.20 271.60 M586.20 278.80 L593.40 271.60 M590.40 278.80 L597.60 271.60 M594.60 278.80 L601.80 271.60 M598.80 278.80 L606.00 271.60 M603.00 278.80 L610.20 271.60 M607.20 278.80 L614.40 271.60 M611.40 278.80 L618.60 271.60" stroke="#0e6468" stroke-width="0.95" fill="none"/>
<text x="604.80" y="277.90" font-family="Liberation Sans" font-size="7.9" font-weight="700" fill="#ffffff" text-anchor="start" textLength="22.99" lengthAdjust="spacingAndGlyphs" >66/44</text>
<rect x="581.5" y="280.30" width="18.4" height="8.2" fill="#000" stroke="#0e4a2c" stroke-width="1"/>
<clipPath id="sw19"><rect x="582" y="280.80" width="17.4" height="7.2"/></clipPath>
<path clip-path="url(#sw19)" d="M569.40 280.80 L576.60 288.00 M573.60 280.80 L580.80 288.00 M577.80 280.80 L585.00 288.00 M582.00 280.80 L589.20 288.00 M586.20 280.80 L593.40 288.00 M590.40 280.80 L597.60 288.00 M594.60 280.80 L601.80 288.00 M598.80 280.80 L606.00 288.00 M603.00 280.80 L610.20 288.00 M607.20 280.80 L614.40 288.00 M611.40 280.80 L618.60 288.00" stroke="#0e4a2c" stroke-width="0.95" fill="none"/>
<text x="604.80" y="287.10" font-family="Liberation Sans" font-size="7.9" font-weight="700" fill="#ffffff" text-anchor="start" textLength="17.91" lengthAdjust="spacingAndGlyphs" >67/5</text>
<rect x="581.5" y="289.50" width="18.4" height="8.2" fill="#000" stroke="#0e522c" stroke-width="1"/>
<clipPath id="sw20"><rect x="582" y="290.00" width="17.4" height="7.2"/></clipPath>
<path clip-path="url(#sw20)" d="M569.40 297.20 L576.60 290.00 M573.60 297.20 L580.80 290.00 M577.80 297.20 L585.00 290.00 M582.00 297.20 L589.20 290.00 M586.20 297.20 L593.40 290.00 M590.40 297.20 L597.60 290.00 M594.60 297.20 L601.80 290.00 M598.80 297.20 L606.00 290.00 M603.00 297.20 L610.20 290.00 M607.20 297.20 L614.40 290.00 M611.40 297.20 L618.60 290.00" stroke="#0e522c" stroke-width="0.95" fill="none"/>
<text x="604.80" y="296.30" font-family="Liberation Sans" font-size="7.9" font-weight="700" fill="#ffffff" text-anchor="start" textLength="22.99" lengthAdjust="spacingAndGlyphs" >67/16</text>
<rect x="581.5" y="298.70" width="18.4" height="8.2" fill="#000" stroke="#0e522c" stroke-width="1"/>
<clipPath id="sw21"><rect x="582" y="299.20" width="17.4" height="7.2"/></clipPath>
<path clip-path="url(#sw21)" d="M569.40 299.20 L576.60 306.40 M573.60 299.20 L580.80 306.40 M577.80 299.20 L585.00 306.40 M582.00 299.20 L589.20 306.40 M586.20 299.20 L593.40 306.40 M590.40 299.20 L597.60 306.40 M594.60 299.20 L601.80 306.40 M598.80 299.20 L606.00 306.40 M603.00 299.20 L610.20 306.40 M607.20 299.20 L614.40 306.40 M611.40 299.20 L618.60 306.40" stroke="#0e522c" stroke-width="0.95" fill="none"/>
<text x="604.80" y="305.50" font-family="Liberation Sans" font-size="7.9" font-weight="700" fill="#ffffff" text-anchor="start" textLength="22.99" lengthAdjust="spacingAndGlyphs" >67/20</text>
<rect x="581.5" y="307.90" width="18.4" height="8.2" fill="#000" stroke="#0e522c" stroke-width="1"/>
<clipPath id="sw22"><rect x="582" y="308.40" width="17.4" height="7.2"/></clipPath>
<path clip-path="url(#sw22)" d="M569.40 315.60 L576.60 308.40 M573.60 315.60 L580.80 308.40 M577.80 315.60 L585.00 308.40 M582.00 315.60 L589.20 308.40 M586.20 315.60 L593.40 308.40 M590.40 315.60 L597.60 308.40 M594.60 315.60 L601.80 308.40 M598.80 315.60 L606.00 308.40 M603.00 315.60 L610.20 308.40 M607.20 315.60 L614.40 308.40 M611.40 315.60 L618.60 308.40" stroke="#0e522c" stroke-width="0.95" fill="none"/>
<text x="604.80" y="314.70" font-family="Liberation Sans" font-size="7.9" font-weight="700" fill="#ffffff" text-anchor="start" textLength="22.99" lengthAdjust="spacingAndGlyphs" >67/44</text>
<rect x="581.5" y="317.10" width="18.4" height="8.2" fill="#000" stroke="#0e6e0e" stroke-width="1"/>
<clipPath id="sw23"><rect x="582" y="317.60" width="17.4" height="7.2"/></clipPath>
<path clip-path="url(#sw23)" d="M569.40 317.60 L576.60 324.80 M573.60 317.60 L580.80 324.80 M577.80 317.60 L585.00 324.80 M582.00 317.60 L589.20 324.80 M586.20 317.60 L593.40 324.80 M590.40 317.60 L597.60 324.80 M594.60 317.60 L601.80 324.80 M598.80 317.60 L606.00 324.80 M603.00 317.60 L610.20 324.80 M607.20 317.60 L614.40 324.80 M611.40 317.60 L618.60 324.80" stroke="#0e6e0e" stroke-width="0.95" fill="none"/>
<text x="604.80" y="323.90" font-family="Liberation Sans" font-size="7.9" font-weight="700" fill="#ffffff" text-anchor="start" textLength="17.91" lengthAdjust="spacingAndGlyphs" >68/5</text>
<rect x="581.5" y="326.30" width="18.4" height="8.2" fill="#000" stroke="#0e7e0e" stroke-width="1"/>
<clipPath id="sw24"><rect x="582" y="326.80" width="17.4" height="7.2"/></clipPath>
<path clip-path="url(#sw24)" d="M569.40 334.00 L576.60 326.80 M573.60 334.00 L580.80 326.80 M577.80 334.00 L585.00 326.80 M582.00 334.00 L589.20 326.80 M586.20 334.00 L593.40 326.80 M590.40 334.00 L597.60 326.80 M594.60 334.00 L601.80 326.80 M598.80 334.00 L606.00 326.80 M603.00 334.00 L610.20 326.80 M607.20 334.00 L614.40 326.80 M611.40 334.00 L618.60 326.80" stroke="#0e7e0e" stroke-width="0.95" fill="none"/>
<text x="604.80" y="333.10" font-family="Liberation Sans" font-size="7.9" font-weight="700" fill="#ffffff" text-anchor="start" textLength="22.99" lengthAdjust="spacingAndGlyphs" >68/16</text>
<rect x="581.5" y="335.50" width="18.4" height="8.2" fill="#000" stroke="#0e7e0e" stroke-width="1"/>
<clipPath id="sw25"><rect x="582" y="336.00" width="17.4" height="7.2"/></clipPath>
<path clip-path="url(#sw25)" d="M569.40 336.00 L576.60 343.20 M573.60 336.00 L580.80 343.20 M577.80 336.00 L585.00 343.20 M582.00 336.00 L589.20 343.20 M586.20 336.00 L593.40 343.20 M590.40 336.00 L597.60 343.20 M594.60 336.00 L601.80 343.20 M598.80 336.00 L606.00 343.20 M603.00 336.00 L610.20 343.20 M607.20 336.00 L614.40 343.20 M611.40 336.00 L618.60 343.20" stroke="#0e7e0e" stroke-width="0.95" fill="none"/>
<text x="604.80" y="342.30" font-family="Liberation Sans" font-size="7.9" font-weight="700" fill="#ffffff" text-anchor="start" textLength="22.99" lengthAdjust="spacingAndGlyphs" >68/20</text>
</g>
<rect x="580.30" y="343.8" width="12" height="10.8" rx="1.5" fill="#f2f2f2" stroke="#c9c9c9" stroke-width="0.6"/>
<path d="M583.30 347 L589.30 347 L589.30 348.6 L586.30 351.2 L583.30 348.6 Z M583.30 352.2 L589.30 352.2" fill="#333" stroke="#333" stroke-width="0.6"/>
<rect x="593.00" y="343.8" width="12" height="10.8" rx="1.5" fill="#f2f2f2" stroke="#c9c9c9" stroke-width="0.6"/>
<path d="M596.00 346.6 L602.00 346.6 L602.00 348.6 L599.00 351.4 L596.00 348.6 Z" fill="#333"/>
<rect x="605.70" y="343.8" width="12" height="10.8" rx="1.5" fill="#f2f2f2" stroke="#c9c9c9" stroke-width="0.6"/>
<path d="M608.70 351.8 L614.70 351.8 L614.70 349.8 L611.70 347 L608.70 349.8 Z" fill="#333"/>
<rect x="618.40" y="343.8" width="12" height="10.8" rx="1.5" fill="#f2f2f2" stroke="#c9c9c9" stroke-width="0.6"/>
<path d="M621.40 352 L627.40 352 L627.40 350.4 L624.40 347.8 L621.40 350.4 Z M621.40 346.6 L627.40 346.6" fill="#333" stroke="#333" stroke-width="0.6"/>
<circle cx="669.50" cy="357.6" r="0.35" fill="#aaa"/>
<circle cx="671.70" cy="357.6" r="0.35" fill="#aaa"/>
<circle cx="673.90" cy="357.6" r="0.35" fill="#aaa"/>
<circle cx="676.10" cy="357.6" r="0.35" fill="#aaa"/>
<circle cx="678.30" cy="357.6" r="0.35" fill="#aaa"/>
<text x="581.50" y="366.00" font-family="Liberation Sans" font-size="8.3" font-weight="400" fill="#303030" text-anchor="start" textLength="51.00" lengthAdjust="spacingAndGlyphs"  stroke="#303030" stroke-width="0.22">Layer Toolbox</text>
<rect x="752.70" y="360.20" width="5.6" height="5.6" rx="1" fill="#d9d9d9" stroke="#b8b8b8" stroke-width="0.5"/>
<rect x="760.60" y="360.20" width="5.6" height="5.6" rx="1" fill="#d9d9d9" stroke="#b8b8b8" stroke-width="0.5"/>
<rect x="753.90" y="361.40" width="3.2" height="3.2" fill="none" stroke="#888" stroke-width="0.5"/>
<path d="M761.80 361.40 L765.00 364.60 M765.00 361.40 L761.80 364.60" stroke="#777" stroke-width="0.6"/>
<rect x="580.00" y="368.75" width="188.00" height="10.40" fill="#0a8ed6" />
<rect x="580.60" y="370.35" width="6.60" height="6.80" fill="#ffffff" />
<text x="589.50" y="376.95" font-family="Liberation Sans" font-size="8.3" font-weight="400" fill="#ffffff" text-anchor="start" textLength="19.50" lengthAdjust="spacingAndGlyphs"  stroke="#ffffff" stroke-width="0.22">Color</text>
<rect x="580.00" y="379.15" width="188.00" height="1.15" fill="#d8e8f2" />
<rect x="580.00" y="380.30" width="188.00" height="10.40" fill="#0a8ed6" />
<rect x="580.60" y="381.90" width="6.60" height="6.80" fill="#ffffff" />
<text x="589.50" y="388.50" font-family="Liberation Sans" font-size="8.3" font-weight="400" fill="#ffffff" text-anchor="start" textLength="47.00" lengthAdjust="spacingAndGlyphs"  stroke="#ffffff" stroke-width="0.22">Frame color</text>
<rect x="580.00" y="390.70" width="188.00" height="1.15" fill="#d8e8f2" />
<rect x="580.00" y="391.85" width="188.00" height="10.40" fill="#0a8ed6" />
<rect x="580.60" y="393.45" width="6.60" height="6.80" fill="#ffffff" />
<text x="589.50" y="400.05" font-family="Liberation Sans" font-size="8.3" font-weight="400" fill="#ffffff" text-anchor="start" textLength="28.00" lengthAdjust="spacingAndGlyphs"  stroke="#ffffff" stroke-width="0.22">Stipple</text>
<rect x="580.00" y="402.25" width="188.00" height="1.15" fill="#d8e8f2" />
<rect x="580.00" y="403.40" width="188.00" height="10.40" fill="#0a8ed6" />
<rect x="580.60" y="405.00" width="6.60" height="6.80" fill="#ffffff" />
<text x="589.50" y="411.60" font-family="Liberation Sans" font-size="8.3" font-weight="400" fill="#ffffff" text-anchor="start" textLength="38.00" lengthAdjust="spacingAndGlyphs"  stroke="#ffffff" stroke-width="0.22">Animation</text>
<rect x="580.00" y="413.80" width="188.00" height="1.15" fill="#d8e8f2" />
<rect x="580.00" y="414.95" width="188.00" height="10.40" fill="#0a8ed6" />
<rect x="580.60" y="416.55" width="6.60" height="6.80" fill="#ffffff" />
<text x="589.50" y="423.15" font-family="Liberation Sans" font-size="8.3" font-weight="400" fill="#ffffff" text-anchor="start" textLength="22.00" lengthAdjust="spacingAndGlyphs"  stroke="#ffffff" stroke-width="0.22">Style</text>
<rect x="580.00" y="425.35" width="188.00" height="1.15" fill="#d8e8f2" />
<rect x="580.00" y="426.50" width="188.00" height="10.40" fill="#0a8ed6" />
<rect x="580.60" y="428.10" width="6.60" height="6.80" fill="#ffffff" />
<text x="589.50" y="434.70" font-family="Liberation Sans" font-size="8.3" font-weight="400" fill="#ffffff" text-anchor="start" textLength="32.00" lengthAdjust="spacingAndGlyphs"  stroke="#ffffff" stroke-width="0.22">Visibility</text>
<rect x="32.00" y="437.00" width="736.00" height="12.50" fill="#eeeeee" />
<rect x="32.00" y="436.60" width="736.00" height="0.60" fill="#d0d0d0" />
<text x="35.60" y="446.30" font-family="Liberation Sans" font-size="8.3" font-weight="700" fill="#111" text-anchor="start" >T</text>
<text x="110.20" y="446.30" font-family="Liberation Sans" font-size="8.3" font-weight="700" fill="#111" text-anchor="start" >G</text>
<text x="122.00" y="446.30" font-family="Liberation Sans" font-size="8.3" font-weight="400" fill="#1a1a1a" text-anchor="start" textLength="193.00" lengthAdjust="spacingAndGlyphs"  stroke="#1a1a1a" stroke-width="0.22">box(0,0 200000,200000) on 15/0 in hello_morse@1</text>
<text x="631.00" y="446.30" font-family="Liberation Sans" font-size="8.3" font-weight="700" fill="#111" text-anchor="start" textLength="10.00" lengthAdjust="spacingAndGlyphs" >xy</text>
<text x="663.00" y="446.30" font-family="Liberation Sans" font-size="8.3" font-weight="400" fill="#1a1a1a" text-anchor="start" textLength="39.00" lengthAdjust="spacingAndGlyphs"  stroke="#1a1a1a" stroke-width="0.22">201.82301</text>
<text x="726.00" y="446.30" font-family="Liberation Sans" font-size="8.3" font-weight="400" fill="#1a1a1a" text-anchor="start" textLength="36.00" lengthAdjust="spacingAndGlyphs"  stroke="#1a1a1a" stroke-width="0.22">15.98230</text>
<path d="M32 449.4 L768 449.4 L768 461 Q768 467 762 467 L38 467 Q32 467 32 461 Z" fill="#1c1c1c"/>
<rect x="88.60" y="449.80" width="114.80" height="17.00" fill="#333333" />
<rect x="203.60" y="449.80" width="114.80" height="17.00" fill="#1f5a8c" />
<rect x="318.40" y="449.80" width="114.80" height="17.00" fill="#2e2e2e" />
<rect x="433.20" y="449.80" width="114.80" height="17.00" fill="#2e2e2e" />
<text x="105.00" y="461.00" font-family="Liberation Sans" font-size="8.3" font-weight="400" fill="#b0b0b0" text-anchor="start" textLength="96.00" lengthAdjust="spacingAndGlyphs"  stroke="#b0b0b0" stroke-width="0.22">Filebin | 5scktr6a7uhptn...</text>
<text x="219.60" y="461.00" font-family="Liberation Sans" font-size="8.3" font-weight="400" fill="#e8e8e8" text-anchor="start" textLength="92.40" lengthAdjust="spacingAndGlyphs"  stroke="#e8e8e8" stroke-width="0.22">KLayout 0.30.6 - hello_...</text>
<text x="334.50" y="461.00" font-family="Liberation Sans" font-size="8.3" font-weight="400" fill="#b8b8b8" text-anchor="start" textLength="51.00" lengthAdjust="spacingAndGlyphs"  stroke="#b8b8b8" stroke-width="0.22">build - Thunar</text>
<text x="449.50" y="461.00" font-family="Liberation Sans" font-size="8.3" font-weight="400" fill="#b8b8b8" text-anchor="start" textLength="36.50" lengthAdjust="spacingAndGlyphs"  stroke="#b8b8b8" stroke-width="0.22">Terminal -</text>
<text x="656.00" y="455.80" font-family="Liberation Sans" font-size="7.2" font-weight="400" fill="#d0d0d0" text-anchor="middle" textLength="37.00" lengthAdjust="spacingAndGlyphs"  stroke="#d0d0d0" stroke-width="0.22">2026-03-19</text>
<text x="656.00" y="463.60" font-family="Liberation Sans" font-size="7.2" font-weight="400" fill="#d0d0d0" text-anchor="middle" textLength="18.50" lengthAdjust="spacingAndGlyphs"  stroke="#d0d0d0" stroke-width="0.22">03:20</text>
<text x="675.70" y="461.00" font-family="Liberation Sans" font-size="8.3" font-weight="400" fill="#e0e0e0" text-anchor="start" textLength="91.50" lengthAdjust="spacingAndGlyphs"  stroke="#e0e0e0" stroke-width="0.22">Default Application User</text>
<path d="M35 452.5 L44.5 464.5 M44.5 452.5 L35 464.5" stroke="#2ab4ee" stroke-width="3.1" stroke-linecap="butt"/>
<rect x="53" y="455" width="10" height="8.4" rx="0.8" fill="#d8d8d8"/><rect x="53" y="453.6" width="4.5" height="2" fill="#c8c8c8"/><path d="M56.5 460 L58 458.6 L59.5 460 L59.5 462 L56.5 462 Z" fill="#777"/>
<rect x="70" y="453.2" width="10.6" height="9.6" rx="0.8" fill="#222" stroke="#777" stroke-width="0.7"/><path d="M72 455.5 L73.6 456.8 L72 458" stroke="#ddd" stroke-width="0.7" fill="none"/><rect x="74.2" y="458.4" width="2.4" height="0.7" fill="#ddd"/>
<rect x="85.40" y="454.60" width="1.40" height="1.20" fill="#777" />
<rect x="85.40" y="457.40" width="1.40" height="1.20" fill="#777" />
<rect x="85.40" y="460.20" width="1.40" height="1.20" fill="#777" />
<defs><radialGradient id="ff" cx="0.6" cy="0.3" r="0.8"><stop offset="0" stop-color="#ffde3a"/><stop offset="0.5" stop-color="#ff7a1a"/><stop offset="1" stop-color="#e01a5a"/></radialGradient></defs>
<circle cx="94.6" cy="459" r="4.8" fill="url(#ff)"/><circle cx="95.4" cy="458.6" r="2.2" fill="#7a3ae0"/>
<circle cx="210.6" cy="458.2" r="4" fill="url(#kg)"/>
<rect x="321.6" y="455" width="10" height="7.6" rx="0.8" fill="#e8d7a8"/><rect x="321.6" y="453.8" width="4" height="2" fill="#d8c598"/>
<rect x="436.6" y="453.4" width="9.6" height="9" rx="0.6" fill="#111" stroke="#888" stroke-width="0.6"/><path d="M438.6 455.6 L440 456.8 L438.6 458" stroke="#ddd" stroke-width="0.6" fill="none"/>
</svg></body></html>
